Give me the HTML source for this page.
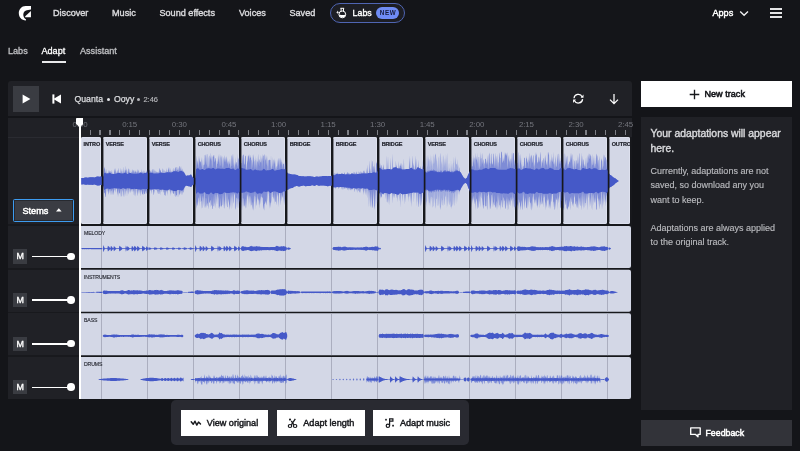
<!DOCTYPE html>
<html><head><meta charset="utf-8"><title>Adapt</title>
<style>
*{box-sizing:border-box;margin:0;padding:0}
html,body{width:800px;height:451px;overflow:hidden;background:#141519;font-family:"Liberation Sans",sans-serif;color:#fff}
.abs{position:absolute}
.nav a{position:absolute;top:7px;font-size:9.1px;color:#dcdcdf;line-height:12px;white-space:nowrap;-webkit-text-stroke:0.38px currentColor}
.sub a{position:absolute;top:44.8px;font-size:9.1px;color:#c0c1c4;line-height:12px;white-space:nowrap;-webkit-text-stroke:0.3px currentColor}
.panel{background:#202126}
.seg{position:absolute;top:0;height:86.8px;overflow:hidden;background:#d3d7e6;border-radius:2px;box-shadow:inset 0 0 0 0.7px #e1e4f1}
.seg span{position:absolute;left:2.7px;top:3.6px;font-size:5.5px;font-weight:bold;color:#23252e;-webkit-text-stroke:0.22px #23252e;letter-spacing:-0.1px;line-height:7px;white-space:nowrap}
.stem{position:absolute;left:80.3px;width:550.4px;height:42px;background:#d3d7e6;border-radius:0 2px 2px 0;overflow:hidden}
.stem span{position:absolute;left:3.7px;top:4px;font-size:5.15px;color:#23252e;-webkit-text-stroke:0.12px #23252e;line-height:7px;letter-spacing:-0.1px}
.stem i{position:absolute;top:0;width:1.1px;height:42px;background:#abaebf}
.stem svg{position:absolute;left:-0.8px;top:0}
.lrow{position:absolute;left:8px;width:72px;height:42px;background:#202126}
.m{position:absolute;left:5px;top:23.3px;width:14.3px;height:14.3px;background:#3a3c42;font-size:8.9px;color:#fff;text-align:center;line-height:14.6px;-webkit-text-stroke:0.35px #fff}
.sl{position:absolute;left:24px;top:29.7px;width:38px;height:1.6px;background:#fff}
.kn{position:absolute;left:59px;top:26.6px;width:7.6px;height:7.6px;border-radius:50%;background:#fff}
.rl{position:absolute;top:2.3px;font-size:7.9px;letter-spacing:-0.1px;color:#73757c;line-height:9px;transform:translateX(-50%)}
.tk{position:absolute;top:12.2px;width:1.2px;height:4.9px;background:#7d7f86}
.btn{position:absolute;top:10.1px;height:26px;background:#fff;color:#17181c;font-size:9.1px;line-height:26px;white-space:nowrap;-webkit-text-stroke:0.45px #17181c}
#w{position:absolute;left:0;top:0;width:800px;height:451px;will-change:transform}
</style></head><body><div id="w">
<!-- top nav -->
<div class="nav">
<svg class="abs" style="left:0;top:0" width="40" height="24" viewBox="0 0 40 24"><path d="M31 5.9 L25.6 5.9 C21.6 5.9 18.8 9.2 18.8 13 C18.8 17.1 21.6 20.4 25.9 20.4 L26.1 19.5 C24.1 18.6 23.2 16.2 23.3 14.3 C23.5 12 25 10.6 26.8 10.2 L31 9.5 Z" fill="#fff"/><path d="M30.95 10.9 L30.95 17.3 L25.2 17.3 L25.2 16.3 Z" fill="#fff"/></svg>
<a style="left:53px">Discover</a><a style="left:112px">Music</a><a style="left:159.5px">Sound effects</a><a style="left:239px">Voices</a><a style="left:289.5px">Saved</a>
<div class="abs" style="left:330.3px;top:2.8px;width:74.7px;height:20.2px;border:1.4px solid #4f65b3;border-radius:10.2px;background:#1d1e24"></div>
<a style="left:352.6px;color:#fff;font-size:8.8px">Labs</a>
<div class="abs" style="left:376.2px;top:6.9px;width:23.2px;height:12.1px;border-radius:6.1px;background:#6f8cf5;color:#151a38;font-size:6.3px;font-weight:bold;line-height:12.3px;text-align:center;letter-spacing:0.7px;padding-left:0.7px">NEW</div>
<svg class="abs" style="left:336px;top:7px" width="12" height="12" viewBox="0 0 12 12"><path d="M4.4 1.3 H8.2 M5.1 1.3 V4.2 M7.5 1.3 V4.2" fill="none" stroke="#fff" stroke-width="1"/><circle cx="6.3" cy="7.4" r="3.4" fill="none" stroke="#fff" stroke-width="1"/><path d="M2.9 7.9 C4.2 6.9 5.6 9.2 9.7 7.4 A3.5 3.5 0 0 1 2.9 7.9 Z" fill="#fff"/><path d="M1.7 3.6 L2.15 4.85 L3.4 5.3 L2.15 5.75 L1.7 7 L1.25 5.75 L0 5.3 L1.25 4.85 Z" fill="#fff"/></svg>
<a style="left:712.5px;color:#fff;-webkit-text-stroke:0.45px #fff">Apps</a>
<svg class="abs" style="left:739px;top:9.6px" width="10" height="8" viewBox="0 0 10 8"><path d="M1.2 1.4 L5.1 5.3 L9 1.4" fill="none" stroke="#f0f0f2" stroke-width="1.35"/></svg>
<div class="abs" style="left:770px;top:7.5px;width:12px;height:2px;background:#e4e4e6"></div>
<div class="abs" style="left:770px;top:12px;width:12px;height:2px;background:#e4e4e6"></div>
<div class="abs" style="left:770px;top:16.2px;width:12px;height:2px;background:#e4e4e6"></div>
</div>
<div class="sub">
<a style="left:8px">Labs</a><a style="left:41.5px;color:#fff">Adapt</a><a style="left:80px">Assistant</a>
<div class="abs" style="left:41.5px;top:61px;width:24.5px;height:1.6px;background:#e8e8ea"></div>
</div>

<!-- main panel -->
<div class="abs panel" style="left:8px;top:81.3px;width:624px;height:34.8px;border-radius:3px 3px 0 0"></div>
<div class="abs" style="left:13px;top:86px;width:26px;height:26px;background:#3a3c42"></div>
<svg class="abs" style="left:22.4px;top:94px" width="9" height="10" viewBox="0 0 9 10"><path d="M0.6 0.4 L8.4 5 L0.6 9.6 Z" fill="#fff"/></svg>
<svg class="abs" style="left:52px;top:94px" width="10" height="10" viewBox="0 0 10 10"><rect x="0.4" y="0.4" width="2" height="9.2" fill="#fff"/><path d="M9 0.4 L1.4 5 L9 9.6 Z" fill="#fff"/></svg>
<div class="abs" style="left:74.5px;top:93.2px;font-size:8.7px;line-height:12px;color:#dcdde0;white-space:nowrap;-webkit-text-stroke:0.25px #dcdde0">Quanta</div>
<div class="abs" style="left:106.7px;top:97.6px;width:3.6px;height:3.6px;border-radius:50%;background:#e2e3e6"></div>
<div class="abs" style="left:114px;top:93.2px;font-size:8.7px;line-height:12px;color:#dcdde0;white-space:nowrap;-webkit-text-stroke:0.25px #dcdde0">Ooyy</div>
<div class="abs" style="left:137.2px;top:98px;width:3px;height:3px;border-radius:50%;background:#b4b5b9"></div>
<div class="abs" style="left:143.4px;top:94px;font-size:7.5px;line-height:12px;color:#b6b7bb;white-space:nowrap;-webkit-text-stroke:0.15px #b6b7bb">2:46</div>
<svg class="abs" style="left:572.3px;top:92.2px" width="13" height="13" viewBox="0 0 13 13"><path d="M2 6.3 A4.3 4.3 0 0 1 10.2 4.9 M10.6 7.1 A4.3 4.3 0 0 1 2.4 8.5" fill="none" stroke="#fff" stroke-width="1.25"/><path d="M11.5 2.5 V5.8 H8.6 Z M1.1 10.9 V7.6 H4 Z" fill="#fff"/></svg>
<svg class="abs" style="left:608px;top:92px" width="12" height="13" viewBox="0 0 12 13"><path d="M6 2 V11.4 M2 7.6 L6 11.6 L10 7.6" fill="none" stroke="#fff" stroke-width="1.25"/></svg>

<!-- ruler -->
<div class="abs panel" style="left:8px;top:117.7px;width:624px;height:281.4px;border-radius:0 0 0 3px"><div class="abs" style="left:0;top:19px;width:72px;height:1px;background:#2a2b31"></div><span class="rl" style="left:72.1px">0:00</span><span class="rl" style="left:121.7px">0:15</span><span class="rl" style="left:171.3px">0:30</span><span class="rl" style="left:220.9px">0:45</span><span class="rl" style="left:270.5px">1:00</span><span class="rl" style="left:320.1px">1:15</span><span class="rl" style="left:369.6px">1:30</span><span class="rl" style="left:419.2px">1:45</span><span class="rl" style="left:468.8px">2:00</span><span class="rl" style="left:518.4px">2:15</span><span class="rl" style="left:568.0px">2:30</span><span class="rl" style="left:617.6px">2:45</span><i class="tk" style="left:81.5px"></i><i class="tk" style="left:91.4px"></i><i class="tk" style="left:101.4px"></i><i class="tk" style="left:111.3px"></i><i class="tk" style="left:121.2px"></i><i class="tk" style="left:131.1px"></i><i class="tk" style="left:141.0px"></i><i class="tk" style="left:150.9px"></i><i class="tk" style="left:160.9px"></i><i class="tk" style="left:170.8px"></i><i class="tk" style="left:180.7px"></i><i class="tk" style="left:190.6px"></i><i class="tk" style="left:200.5px"></i><i class="tk" style="left:210.5px"></i><i class="tk" style="left:220.4px"></i><i class="tk" style="left:230.3px"></i><i class="tk" style="left:240.2px"></i><i class="tk" style="left:250.1px"></i><i class="tk" style="left:260.0px"></i><i class="tk" style="left:270.0px"></i><i class="tk" style="left:279.9px"></i><i class="tk" style="left:289.8px"></i><i class="tk" style="left:299.7px"></i><i class="tk" style="left:309.6px"></i><i class="tk" style="left:319.6px"></i><i class="tk" style="left:329.5px"></i><i class="tk" style="left:339.4px"></i><i class="tk" style="left:349.3px"></i><i class="tk" style="left:359.2px"></i><i class="tk" style="left:369.1px"></i><i class="tk" style="left:379.1px"></i><i class="tk" style="left:389.0px"></i><i class="tk" style="left:398.9px"></i><i class="tk" style="left:408.8px"></i><i class="tk" style="left:418.7px"></i><i class="tk" style="left:428.6px"></i><i class="tk" style="left:438.6px"></i><i class="tk" style="left:448.5px"></i><i class="tk" style="left:458.4px"></i><i class="tk" style="left:468.3px"></i><i class="tk" style="left:478.2px"></i><i class="tk" style="left:488.2px"></i><i class="tk" style="left:498.1px"></i><i class="tk" style="left:508.0px"></i><i class="tk" style="left:517.9px"></i><i class="tk" style="left:527.8px"></i><i class="tk" style="left:537.7px"></i><i class="tk" style="left:547.7px"></i><i class="tk" style="left:557.6px"></i><i class="tk" style="left:567.5px"></i><i class="tk" style="left:577.4px"></i><i class="tk" style="left:587.3px"></i><i class="tk" style="left:597.3px"></i><i class="tk" style="left:607.2px"></i><i class="tk" style="left:617.1px"></i></div>
<!-- left column top -->

<div class="abs" style="left:13px;top:198.8px;width:61.2px;height:23.4px;border:1.3px solid #3d9cf0;border-radius:1.5px;background:#3a3c43;box-shadow:inset 0 0 0 0.8px #22232a"></div>
<div class="abs" style="left:22.5px;top:204.5px;font-size:9.1px;-webkit-text-stroke:0.5px #fff;line-height:12px;color:#fff">Stems</div>
<svg class="abs" style="left:56.1px;top:208.4px" width="5.6" height="4" viewBox="0 0 5.6 4"><path d="M0 3.6 L2.8 0.3 L5.6 3.6 Z" fill="#fff"/></svg>

<!-- segments -->
<div class="abs" style="left:0;top:137px;width:800px;height:262px;background:none"><div class="abs" style="left:79.5px;top:0;width:552.5px;height:262.1px;background:#17181c"></div><div class="seg" style="left:80.8px;width:20.5px"><span>INTRO</span></div><div class="seg" style="left:102.94999999999999px;width:44.3px"><span>VERSE</span></div><div class="seg" style="left:148.95px;width:44.3px"><span>VERSE</span></div><div class="seg" style="left:194.95px;width:44.3px"><span>CHORUS</span></div><div class="seg" style="left:240.95px;width:44.3px"><span>CHORUS</span></div><div class="seg" style="left:286.95000000000005px;width:44.3px"><span>BRIDGE</span></div><div class="seg" style="left:332.95000000000005px;width:44.3px"><span>BRIDGE</span></div><div class="seg" style="left:378.95000000000005px;width:44.3px"><span>BRIDGE</span></div><div class="seg" style="left:424.95000000000005px;width:44.3px"><span>VERSE</span></div><div class="seg" style="left:470.95000000000005px;width:44.3px"><span>CHORUS</span></div><div class="seg" style="left:516.95px;width:44.3px"><span>CHORUS</span></div><div class="seg" style="left:562.95px;width:44.3px"><span>CHORUS</span></div><div class="seg" style="left:608.95px;width:21.4px"><span>OUTRO</span></div>
<svg class="abs" style="left:79.5px;top:0" width="552" height="87" viewBox="0 0 552 87"><polygon points="345.1,20.1 345.5,35.1 345.8,27.5 346.2,17.9 346.5,35.8 346.9,30.4 347.3,28.7 347.6,22.5 348.0,17.4 348.3,24.6 348.7,19.5 349.1,30.4 349.4,24.2 349.8,21.4 350.1,25.3 350.5,17.1 350.9,34.0 351.2,17.9 351.6,29.3 351.9,23.1 352.3,27.8 352.7,34.1 353.0,16.8 353.4,20.3 353.7,26.8 354.1,26.4 354.5,21.9 354.8,19.9 355.2,15.9 355.5,18.3 355.9,16.7 356.3,24.6 356.6,20.3 357.0,28.4 357.3,35.3 357.7,23.5 358.1,35.3 358.4,21.1 358.8,19.6 359.1,35.2 359.5,17.7 359.9,35.1 360.2,21.4 360.6,17.0 360.9,15.9 361.3,27.4 361.7,23.8 362.0,35.5 362.4,18.5 362.7,35.3 363.1,20.5 363.5,17.7 363.8,31.7 364.2,21.1 364.5,25.2 364.9,30.0 365.3,20.4 365.6,31.2 366.0,16.1 366.3,34.8 366.7,23.1 367.1,15.7 367.4,22.6 367.8,34.5 368.1,25.4 368.5,34.4 368.9,34.4 369.2,30.4 369.6,34.7 369.9,25.3 370.3,35.0 370.7,35.2 371.0,22.5 371.4,35.2 371.7,26.4 372.1,35.3 372.5,31.8 372.8,27.4 373.2,25.2 373.5,19.6 373.9,35.1 374.3,29.5 374.6,34.5 375.0,19.5 375.3,27.1 375.7,18.9 376.1,27.4 376.4,27.3 376.8,26.5 377.1,29.0 377.5,21.7 377.9,30.4 378.2,27.1 378.6,34.3 378.9,34.4 379.3,30.3 379.7,30.9 380.0,34.8 380.4,35.3 380.4,52.7 380.0,53.4 379.7,53.5 379.3,58.3 378.9,53.3 378.6,57.9 378.2,52.8 377.9,52.7 377.5,65.4 377.1,52.7 376.8,68.3 376.4,57.0 376.1,53.1 375.7,53.2 375.3,60.6 375.0,67.1 374.6,58.4 374.3,68.9 373.9,67.4 373.5,63.1 373.2,54.0 372.8,62.0 372.5,69.3 372.1,66.9 371.7,72.3 371.4,69.4 371.0,69.4 370.7,70.6 370.3,63.2 369.9,68.1 369.6,67.8 369.2,64.2 368.9,52.7 368.5,62.9 368.1,65.9 367.8,70.1 367.4,59.3 367.1,70.4 366.7,53.0 366.3,71.4 366.0,60.3 365.6,59.5 365.3,58.1 364.9,68.3 364.5,67.0 364.2,62.1 363.8,70.1 363.5,55.3 363.1,62.3 362.7,63.5 362.4,68.1 362.0,68.6 361.7,65.0 361.3,60.5 360.9,72.5 360.6,72.4 360.2,70.3 359.9,70.4 359.5,52.7 359.1,69.0 358.8,58.9 358.4,69.6 358.1,67.2 357.7,69.4 357.3,52.6 357.0,62.0 356.6,62.2 356.3,60.4 355.9,71.8 355.5,69.8 355.2,66.8 354.8,60.5 354.5,66.5 354.1,53.2 353.7,63.3 353.4,68.9 353.0,69.5 352.7,70.9 352.3,60.8 351.9,60.1 351.6,59.5 351.2,65.0 350.9,59.3 350.5,70.1 350.1,59.5 349.8,66.2 349.4,65.2 349.1,69.3 348.7,57.6 348.3,68.5 348.0,56.8 347.6,52.9 347.3,52.6 346.9,70.5 346.5,65.0 346.2,64.1 345.8,68.3 345.5,52.5 345.1,70.2" fill="#5a6dd2" opacity="0.42"/>
<polygon points="1.3,40.9 1.7,40.9 2.0,40.9 2.4,40.9 2.7,40.9 3.1,40.9 3.5,40.9 3.8,40.9 4.2,40.8 4.5,40.7 4.9,40.6 5.3,40.5 5.6,40.4 6.0,40.4 6.3,40.5 6.7,40.5 7.1,40.6 7.4,40.7 7.8,40.7 8.1,40.7 8.5,40.6 8.9,40.5 9.2,40.4 9.6,40.3 9.9,40.3 10.3,40.2 10.7,40.2 11.0,40.2 11.4,40.2 11.7,40.3 12.1,40.3 12.5,40.2 12.8,40.3 13.2,40.3 13.5,40.3 13.9,40.4 14.3,40.4 14.6,40.4 15.0,40.3 15.3,40.2 15.7,40.1 16.1,39.9 16.4,39.7 16.8,39.6 17.1,39.6 17.5,39.6 17.9,39.6 18.2,39.6 18.6,39.6 18.9,39.7 19.3,39.7 19.7,39.7 20.0,39.6 20.4,39.6 20.7,39.6 21.1,39.6 21.5,39.7 21.8,39.7 22.2,39.7 22.5,39.7 22.9,39.7 23.3,39.7 23.6,38.8 24.0,31.4 24.3,31.8 24.7,29.4 25.1,32.6 25.4,36.1 25.8,35.0 26.1,31.8 26.5,36.4 26.9,36.5 27.2,35.4 27.6,36.5 27.9,36.5 28.3,36.4 28.7,32.5 29.0,36.1 29.4,32.9 29.7,35.0 30.1,34.4 30.5,34.2 30.8,36.4 31.2,34.7 31.5,36.9 31.9,32.8 32.3,37.1 32.6,36.2 33.0,37.1 33.3,37.1 33.7,37.1 34.1,34.9 34.4,31.3 34.8,33.8 35.1,36.9 35.5,31.1 35.9,33.7 36.2,36.5 36.6,36.5 36.9,34.5 37.3,36.3 37.7,33.3 38.0,33.7 38.4,30.5 38.7,35.9 39.1,34.8 39.5,36.0 39.8,36.1 40.2,36.2 40.5,35.2 40.9,31.1 41.3,33.6 41.6,36.4 42.0,33.6 42.3,36.5 42.7,36.5 43.1,29.6 43.4,33.6 43.8,36.3 44.1,36.1 44.5,35.8 44.9,32.6 45.2,33.2 45.6,34.1 45.9,28.4 46.3,36.2 46.7,31.5 47.0,33.8 47.4,37.0 47.7,37.0 48.1,31.2 48.5,32.1 48.8,34.6 49.2,35.9 49.5,35.7 49.9,31.7 50.3,35.9 50.6,36.1 51.0,36.3 51.3,34.6 51.7,36.6 52.1,31.6 52.4,36.6 52.8,32.8 53.1,33.9 53.5,32.8 53.9,36.0 54.2,34.2 54.6,36.8 54.9,33.0 55.3,35.0 55.7,34.4 56.0,33.0 56.4,36.8 56.7,34.8 57.1,36.0 57.5,31.8 57.8,34.8 58.2,36.5 58.5,32.6 58.9,34.1 59.3,36.2 59.6,36.0 60.0,34.5 60.3,35.7 60.7,35.6 61.1,35.7 61.4,31.9 61.8,36.1 62.1,34.5 62.5,35.1 62.9,36.6 63.2,36.5 63.6,33.0 63.9,36.3 64.3,36.1 64.7,33.5 65.0,35.9 65.4,35.9 65.7,35.8 66.1,34.9 66.5,32.9 66.8,35.7 67.2,33.4 67.5,32.4 67.9,35.7 68.3,32.1 68.6,35.9 69.0,32.6 69.3,34.1 69.7,32.3 70.1,33.5 70.4,34.3 70.8,35.1 71.1,35.7 71.5,35.7 71.9,33.2 72.2,32.1 72.6,36.0 72.9,31.7 73.3,32.4 73.7,36.5 74.0,35.0 74.4,32.2 74.7,36.6 75.1,36.6 75.5,35.1 75.8,33.4 76.2,34.7 76.5,35.9 76.9,34.6 77.3,36.5 77.6,35.0 78.0,34.9 78.3,36.4 78.7,34.2 79.1,36.2 79.4,31.3 79.8,31.4 80.1,33.9 80.5,32.6 80.9,34.0 81.2,35.7 81.6,35.8 81.9,34.9 82.3,35.9 82.7,31.4 83.0,31.8 83.4,33.9 83.7,35.9 84.1,35.9 84.5,32.5 84.8,35.9 85.2,35.9 85.5,33.7 85.9,35.6 86.3,30.9 86.6,35.4 87.0,35.3 87.3,35.3 87.7,35.3 88.1,31.3 88.4,33.5 88.8,30.5 89.1,30.4 89.5,34.4 89.9,35.3 90.2,35.4 90.6,30.7 90.9,35.5 91.3,35.5 91.7,33.5 92.0,35.3 92.4,35.0 92.7,34.8 93.1,30.6 93.5,33.6 93.8,34.3 94.2,34.3 94.5,34.3 94.9,31.7 95.3,30.5 95.6,29.9 96.0,33.6 96.3,34.3 96.7,30.0 97.1,29.9 97.4,32.8 97.8,33.4 98.1,30.0 98.5,34.9 98.9,31.6 99.2,29.2 99.6,29.1 99.9,34.1 100.3,29.4 100.7,33.9 101.0,28.8 101.4,33.8 101.7,34.0 102.1,31.5 102.5,33.2 102.8,34.8 103.2,33.7 103.5,34.2 103.9,35.5 104.3,35.3 104.6,36.5 105.0,37.1 105.3,37.8 105.7,38.4 106.1,38.9 106.4,38.8 106.8,38.7 107.1,38.5 107.5,38.5 107.9,38.4 108.2,38.4 108.6,38.4 108.9,38.5 109.3,38.4 109.7,38.3 110.0,38.1 110.4,37.8 110.7,37.6 111.1,37.6 111.5,38.2 111.8,38.8 112.2,39.6 112.5,40.2 112.9,40.5 113.3,40.8 113.6,41.0 114.0,41.1 114.3,41.2 114.7,41.2 115.1,41.1 115.4,41.0 115.8,36.8 116.1,18.1 116.5,31.9 116.9,18.8 117.2,28.4 117.6,23.0 117.9,25.0 118.3,31.4 118.7,23.5 119.0,18.1 119.4,26.3 119.7,20.5 120.1,25.4 120.5,24.5 120.8,24.1 121.2,30.3 121.5,24.9 121.9,19.9 122.3,31.9 122.6,32.0 123.0,20.2 123.3,32.5 123.7,27.8 124.1,27.7 124.4,27.5 124.8,18.3 125.1,17.5 125.5,18.7 125.9,25.3 126.2,28.4 126.6,21.7 126.9,17.2 127.3,17.2 127.7,31.4 128.0,28.7 128.4,31.3 128.7,21.6 129.1,18.6 129.5,31.3 129.8,17.9 130.2,20.8 130.5,22.9 130.9,15.3 131.3,24.2 131.6,17.8 132.0,31.5 132.3,29.1 132.7,19.3 133.1,19.9 133.4,19.1 133.8,18.1 134.1,18.0 134.5,23.6 134.9,25.4 135.2,23.0 135.6,21.1 135.9,20.9 136.3,29.7 136.7,31.9 137.0,23.0 137.4,26.7 137.7,27.2 138.1,17.1 138.5,25.4 138.8,18.3 139.2,28.0 139.5,16.4 139.9,29.4 140.3,28.1 140.6,17.4 141.0,21.0 141.3,18.2 141.7,23.1 142.1,31.7 142.4,28.5 142.8,17.9 143.1,31.8 143.5,23.1 143.9,19.8 144.2,25.2 144.6,21.1 144.9,18.0 145.3,25.2 145.7,19.7 146.0,27.7 146.4,18.9 146.7,20.6 147.1,25.1 147.5,27.5 147.8,20.9 148.2,30.9 148.5,25.9 148.9,23.6 149.3,26.6 149.6,27.5 150.0,20.9 150.3,29.2 150.7,32.0 151.1,18.7 151.4,18.2 151.8,29.1 152.1,28.8 152.5,16.6 152.9,20.9 153.2,31.6 153.6,16.5 153.9,27.2 154.3,32.5 154.7,24.7 155.0,33.1 155.4,19.8 155.7,28.0 156.1,25.4 156.5,24.8 156.8,26.9 157.2,29.4 157.5,16.8 157.9,31.6 158.3,22.8 158.6,20.5 159.0,22.4 159.3,28.6 159.7,17.5 160.1,25.3 160.4,22.2 160.8,16.2 161.1,25.9 161.5,25.9 161.9,31.1 162.2,24.7 162.6,19.2 162.9,18.2 163.3,18.0 163.7,17.0 164.0,26.5 164.4,28.1 164.7,25.3 165.1,18.3 165.5,19.4 165.8,18.4 166.2,32.8 166.5,32.8 166.9,27.3 167.3,24.4 167.6,23.3 168.0,18.3 168.3,19.7 168.7,17.6 169.1,22.3 169.4,16.4 169.8,25.9 170.1,19.7 170.5,21.3 170.9,17.6 171.2,22.4 171.6,23.8 171.9,32.9 172.3,27.9 172.7,24.0 173.0,16.8 173.4,25.3 173.7,17.1 174.1,22.4 174.5,32.7 174.8,24.4 175.2,22.4 175.5,32.6 175.9,18.4 176.3,32.9 176.6,20.2 177.0,33.2 177.3,23.7 177.7,25.6 178.1,16.6 178.4,22.3 178.8,25.9 179.1,29.3 179.5,21.8 179.9,23.4 180.2,25.7 180.6,24.6 180.9,17.8 181.3,26.1 181.7,19.0 182.0,33.4 182.4,23.6 182.7,16.5 183.1,24.5 183.5,18.2 183.8,18.9 184.2,17.0 184.5,18.9 184.9,32.5 185.3,17.6 185.6,23.4 186.0,22.1 186.3,18.2 186.7,25.9 187.1,29.5 187.4,18.6 187.8,33.3 188.1,33.3 188.5,23.4 188.9,22.9 189.2,23.2 189.6,22.2 189.9,23.2 190.3,22.7 190.7,33.0 191.0,17.6 191.4,32.6 191.7,32.3 192.1,28.5 192.5,19.8 192.8,31.9 193.2,23.5 193.5,22.3 193.9,33.0 194.3,20.8 194.6,27.0 195.0,22.4 195.3,27.6 195.7,33.6 196.1,29.0 196.4,29.7 196.8,33.0 197.1,31.0 197.5,22.1 197.9,29.6 198.2,26.4 198.6,20.5 198.9,23.4 199.3,32.8 199.7,20.6 200.0,23.7 200.4,20.3 200.7,27.8 201.1,21.9 201.5,28.1 201.8,24.2 202.2,25.9 202.5,32.2 202.9,27.2 203.3,26.7 203.6,27.5 204.0,25.8 204.3,32.3 204.7,32.3 205.1,21.3 205.4,29.1 205.8,24.1 206.1,30.7 206.5,30.1 206.9,34.9 207.2,35.5 207.6,36.0 207.9,36.3 208.3,36.5 208.7,36.7 209.0,36.7 209.4,36.8 209.7,36.8 210.1,36.9 210.5,36.9 210.8,37.1 211.2,37.2 211.5,37.3 211.9,37.4 212.3,37.5 212.6,37.6 213.0,37.6 213.3,37.5 213.7,37.5 214.1,37.4 214.4,37.4 214.8,37.5 215.1,37.6 215.5,37.7 215.9,37.8 216.2,37.8 216.6,37.9 216.9,37.9 217.3,38.1 217.7,38.3 218.0,38.5 218.4,38.8 218.7,38.9 219.1,39.0 219.5,39.1 219.8,39.1 220.2,39.1 220.5,39.1 220.9,39.2 221.3,39.2 221.6,39.2 222.0,39.2 222.3,39.2 222.7,39.3 223.1,39.3 223.4,39.3 223.8,39.3 224.1,39.4 224.5,39.4 224.9,39.4 225.2,39.4 225.6,39.5 225.9,39.5 226.3,39.4 226.7,39.4 227.0,39.3 227.4,39.3 227.7,39.3 228.1,39.3 228.5,39.3 228.8,39.3 229.2,39.3 229.5,39.2 229.9,39.2 230.3,39.3 230.6,39.3 231.0,39.4 231.3,39.5 231.7,39.6 232.1,39.6 232.4,39.6 232.8,39.7 233.1,39.7 233.5,39.8 233.9,39.9 234.2,39.9 234.6,39.9 234.9,39.9 235.3,39.8 235.7,39.8 236.0,39.7 236.4,39.6 236.7,39.6 237.1,39.6 237.5,39.6 237.8,39.7 238.2,39.7 238.5,39.7 238.9,39.7 239.3,39.7 239.6,39.6 240.0,39.6 240.3,39.5 240.7,39.4 241.1,39.4 241.4,39.4 241.8,39.3 242.1,39.2 242.5,39.1 242.9,39.0 243.2,38.9 243.6,38.9 243.9,39.0 244.3,39.0 244.7,39.0 245.0,39.1 245.4,39.1 245.7,39.1 246.1,39.1 246.5,39.1 246.8,39.1 247.2,39.2 247.5,39.2 247.9,39.1 248.3,39.1 248.6,39.1 249.0,39.0 249.3,39.0 249.7,39.0 250.1,39.0 250.4,38.9 250.8,38.9 251.1,38.9 251.5,38.8 251.9,38.6 252.2,38.4 252.6,38.2 252.9,38.1 253.3,38.1 253.7,36.6 254.0,38.3 254.4,38.3 254.7,36.1 255.1,36.1 255.5,37.7 255.8,37.4 256.2,36.3 256.5,36.4 256.9,37.1 257.3,37.1 257.6,35.7 258.0,35.8 258.3,37.2 258.7,37.2 259.1,36.5 259.4,37.1 259.8,37.1 260.1,37.0 260.5,37.0 260.9,37.0 261.2,35.7 261.6,36.9 261.9,36.1 262.3,37.0 262.7,35.8 263.0,37.0 263.4,37.0 263.7,37.1 264.1,37.2 264.5,35.4 264.8,35.6 265.2,37.4 265.5,37.4 265.9,37.4 266.3,35.9 266.6,37.3 267.0,37.3 267.3,35.8 267.7,34.9 268.1,36.1 268.4,37.3 268.8,35.7 269.1,36.0 269.5,37.1 269.9,37.5 270.2,37.4 270.6,37.2 270.9,37.0 271.3,36.7 271.7,36.6 272.0,36.5 272.4,36.6 272.7,36.8 273.1,37.0 273.5,34.5 273.8,37.3 274.2,35.0 274.5,35.6 274.9,37.3 275.3,35.5 275.6,37.2 276.0,37.2 276.3,36.0 276.7,34.2 277.1,37.1 277.4,37.0 277.8,37.0 278.1,33.9 278.5,36.9 278.9,36.9 279.2,35.7 279.6,34.9 279.9,36.9 280.3,33.8 280.7,36.8 281.0,36.8 281.4,34.2 281.7,36.6 282.1,34.7 282.5,36.4 282.8,36.4 283.2,36.3 283.5,33.7 283.9,33.8 284.3,36.6 284.6,33.1 285.0,35.4 285.3,36.6 285.7,36.6 286.1,36.6 286.4,36.6 286.8,30.9 287.1,36.5 287.5,27.4 287.9,36.3 288.2,36.2 288.6,36.1 288.9,36.0 289.3,22.9 289.7,32.7 290.0,35.9 290.4,31.1 290.7,35.9 291.1,35.9 291.5,35.9 291.8,21.9 292.2,35.8 292.5,23.8 292.9,24.8 293.3,35.4 293.6,29.0 294.0,29.7 294.3,35.3 294.7,24.7 295.1,35.5 295.4,35.7 295.8,35.8 296.1,25.2 296.5,26.7 296.9,24.0 297.2,34.9 297.6,34.3 297.9,22.5 298.3,23.2 298.7,32.1 299.0,31.6 299.4,31.1 299.7,25.9 300.1,31.3 300.5,25.9 300.8,31.6 301.2,27.9 301.5,28.2 301.9,32.5 302.3,32.7 302.6,30.1 303.0,32.8 303.3,30.0 303.7,27.1 304.1,32.6 304.4,32.5 304.8,32.5 305.1,32.5 305.5,32.4 305.9,32.4 306.2,32.3 306.6,32.2 306.9,18.5 307.3,32.1 307.7,32.1 308.0,18.6 308.4,32.1 308.7,32.1 309.1,32.0 309.5,32.0 309.8,32.1 310.2,32.2 310.5,20.4 310.9,32.5 311.3,32.6 311.6,32.6 312.0,32.3 312.3,32.0 312.7,16.4 313.1,31.0 313.4,30.7 313.8,30.6 314.1,30.6 314.5,30.5 314.9,30.4 315.2,30.3 315.6,30.3 315.9,23.6 316.3,30.4 316.7,27.6 317.0,30.9 317.4,31.3 317.7,31.5 318.1,31.6 318.5,31.6 318.8,24.0 319.2,31.6 319.5,31.6 319.9,28.6 320.3,29.0 320.6,28.1 321.0,25.8 321.3,27.2 321.7,32.3 322.1,26.9 322.4,32.6 322.8,32.6 323.1,32.6 323.5,32.6 323.9,20.9 324.2,32.6 324.6,32.6 324.9,32.5 325.3,32.4 325.7,32.3 326.0,32.1 326.4,32.0 326.7,31.9 327.1,31.9 327.5,32.0 327.8,32.0 328.2,32.1 328.5,32.1 328.9,32.1 329.3,18.3 329.6,31.9 330.0,20.0 330.3,31.3 330.7,30.9 331.1,30.7 331.4,30.7 331.8,30.9 332.1,25.3 332.5,18.2 332.9,32.0 333.2,25.4 333.6,32.4 333.9,27.0 334.3,32.5 334.7,32.6 335.0,32.7 335.4,17.9 335.7,25.7 336.1,32.5 336.5,32.1 336.8,20.9 337.2,31.0 337.5,30.5 337.9,30.3 338.3,30.4 338.6,22.6 339.0,30.9 339.3,31.1 339.7,31.4 340.1,31.4 340.4,28.7 340.8,31.7 341.1,31.9 341.5,32.1 341.9,32.3 342.2,28.2 342.6,32.4 342.9,22.4 343.3,32.0 343.7,32.0 344.0,26.5 344.4,24.4 344.7,33.5 345.1,34.2 345.5,35.1 345.8,35.1 346.2,35.5 346.5,35.8 346.9,34.3 347.3,34.6 347.6,34.1 348.0,33.9 348.3,33.2 348.7,34.4 349.1,34.4 349.4,33.3 349.8,33.9 350.1,33.0 350.5,33.3 350.9,34.0 351.2,33.8 351.6,32.0 351.9,33.8 352.3,33.1 352.7,34.1 353.0,32.6 353.4,32.3 353.7,33.3 354.1,33.3 354.5,33.0 354.8,33.3 355.2,34.4 355.5,32.9 355.9,33.9 356.3,33.6 356.6,34.2 357.0,34.4 357.3,35.3 357.7,34.5 358.1,35.3 358.4,33.6 358.8,34.9 359.1,35.2 359.5,34.4 359.9,35.1 360.2,34.4 360.6,33.2 360.9,33.5 361.3,33.7 361.7,33.5 362.0,35.5 362.4,35.1 362.7,35.3 363.1,34.3 363.5,33.6 363.8,33.9 364.2,33.4 364.5,33.1 364.9,33.4 365.3,33.0 365.6,33.1 366.0,34.3 366.3,34.8 366.7,34.2 367.1,33.3 367.4,33.7 367.8,34.5 368.1,33.7 368.5,34.4 368.9,34.4 369.2,34.0 369.6,34.7 369.9,33.6 370.3,35.0 370.7,35.2 371.0,33.3 371.4,35.2 371.7,33.7 372.1,35.3 372.5,33.8 372.8,34.4 373.2,34.9 373.5,33.9 373.9,35.1 374.3,33.9 374.6,34.5 375.0,34.0 375.3,33.7 375.7,32.6 376.1,32.5 376.4,33.3 376.8,32.5 377.1,33.7 377.5,33.1 377.9,32.9 378.2,34.1 378.6,34.3 378.9,34.4 379.3,33.9 379.7,33.4 380.0,34.8 380.4,35.3 380.7,34.7 381.1,36.3 381.5,36.8 381.8,37.4 382.2,38.1 382.5,38.7 382.9,39.3 383.3,40.0 383.6,40.5 384.0,40.8 384.3,41.1 384.7,41.4 385.1,41.8 385.4,41.9 385.8,41.6 386.1,41.2 386.5,40.9 386.9,40.7 387.2,40.0 387.6,39.1 387.9,38.2 388.3,37.3 388.7,36.5 389.0,36.0 389.4,35.4 389.7,34.7 390.1,33.1 390.5,33.5 390.8,30.8 391.2,32.6 391.5,19.0 391.9,30.2 392.3,29.0 392.6,29.4 393.0,20.0 393.3,26.2 393.7,17.5 394.1,30.0 394.4,20.1 394.8,21.9 395.1,33.3 395.5,15.4 395.9,22.4 396.2,19.0 396.6,23.6 396.9,21.8 397.3,27.0 397.7,15.2 398.0,33.2 398.4,26.6 398.7,19.9 399.1,19.9 399.5,29.4 399.8,32.7 400.2,28.2 400.5,14.8 400.9,22.1 401.3,20.8 401.6,30.0 402.0,15.4 402.3,18.3 402.7,27.4 403.1,23.2 403.4,21.9 403.8,28.0 404.1,31.7 404.5,25.0 404.9,27.2 405.2,21.7 405.6,21.9 405.9,21.4 406.3,24.7 406.7,26.4 407.0,28.0 407.4,22.8 407.7,17.9 408.1,32.2 408.5,25.4 408.8,18.9 409.2,15.5 409.5,17.6 409.9,25.7 410.3,26.9 410.6,31.0 411.0,16.6 411.3,16.9 411.7,23.8 412.1,28.3 412.4,26.5 412.8,26.7 413.1,22.9 413.5,16.2 413.9,17.3 414.2,31.0 414.6,26.6 414.9,21.4 415.3,15.2 415.7,31.4 416.0,18.5 416.4,32.1 416.7,18.2 417.1,24.0 417.5,32.5 417.8,16.4 418.2,25.0 418.5,25.7 418.9,32.8 419.3,15.6 419.6,16.5 420.0,20.8 420.3,20.9 420.7,32.8 421.1,14.5 421.4,15.4 421.8,14.2 422.1,18.5 422.5,25.4 422.9,25.4 423.2,20.1 423.6,24.6 423.9,23.7 424.3,14.7 424.7,26.8 425.0,18.7 425.4,15.3 425.7,16.7 426.1,19.0 426.5,15.7 426.8,19.1 427.2,14.7 427.5,25.6 427.9,31.8 428.3,18.2 428.6,23.2 429.0,17.2 429.3,25.2 429.7,23.0 430.1,31.1 430.4,24.9 430.8,21.7 431.1,21.4 431.5,26.9 431.9,15.5 432.2,18.0 432.6,31.3 432.9,15.5 433.3,16.6 433.7,15.8 434.0,22.2 434.4,23.7 434.7,26.6 435.1,29.4 435.5,25.6 435.8,27.0 436.2,16.8 436.5,25.5 436.9,25.7 437.3,26.1 437.6,31.6 438.0,15.5 438.3,15.5 438.7,25.4 439.1,31.4 439.4,31.5 439.8,19.1 440.1,17.1 440.5,22.5 440.9,26.0 441.2,27.9 441.6,33.1 441.9,20.6 442.3,32.5 442.7,32.2 443.0,28.6 443.4,29.2 443.7,31.7 444.1,20.9 444.5,21.0 444.8,20.0 445.2,31.2 445.5,31.1 445.9,24.6 446.3,18.7 446.6,21.5 447.0,21.4 447.3,25.9 447.7,25.1 448.1,22.4 448.4,31.4 448.8,18.9 449.1,25.4 449.5,22.5 449.9,15.2 450.2,22.0 450.6,18.7 450.9,31.7 451.3,19.3 451.7,17.5 452.0,19.8 452.4,26.0 452.7,24.9 453.1,18.5 453.5,18.3 453.8,27.9 454.2,32.9 454.5,24.4 454.9,29.2 455.3,19.5 455.6,17.9 456.0,15.1 456.3,18.3 456.7,16.8 457.1,25.6 457.4,25.1 457.8,26.9 458.1,19.2 458.5,20.8 458.9,25.8 459.2,19.5 459.6,24.1 459.9,25.4 460.3,14.6 460.7,17.7 461.0,28.1 461.4,31.3 461.7,25.4 462.1,22.8 462.5,26.8 462.8,24.3 463.2,21.0 463.5,21.5 463.9,31.2 464.3,19.0 464.6,31.9 465.0,21.8 465.3,17.7 465.7,23.0 466.1,24.7 466.4,28.5 466.8,26.7 467.1,23.9 467.5,32.3 467.9,15.8 468.2,14.9 468.6,18.2 468.9,14.9 469.3,24.7 469.7,31.0 470.0,25.7 470.4,22.1 470.7,28.9 471.1,31.3 471.5,16.5 471.8,23.0 472.2,25.3 472.5,19.4 472.9,25.3 473.3,14.7 473.6,25.5 474.0,27.8 474.3,24.2 474.7,32.9 475.1,19.2 475.4,33.0 475.8,17.7 476.1,24.4 476.5,30.1 476.9,29.2 477.2,23.4 477.6,20.0 477.9,16.2 478.3,33.0 478.7,17.2 479.0,16.5 479.4,23.9 479.7,27.5 480.1,20.2 480.5,27.4 480.8,23.3 481.2,25.3 481.5,31.1 481.9,15.9 482.3,18.3 482.6,19.2 483.0,31.3 483.3,16.1 483.7,31.6 484.1,29.3 484.4,32.4 484.8,15.9 485.1,17.7 485.5,25.5 485.9,28.5 486.2,18.3 486.6,26.5 486.9,20.3 487.3,18.6 487.7,31.3 488.0,27.5 488.4,26.5 488.7,31.1 489.1,25.5 489.5,23.9 489.8,25.5 490.2,21.5 490.5,15.7 490.9,26.6 491.3,15.4 491.6,23.6 492.0,16.7 492.3,18.5 492.7,31.9 493.1,20.9 493.4,32.3 493.8,32.4 494.1,24.2 494.5,23.3 494.9,32.3 495.2,22.0 495.6,32.1 495.9,32.0 496.3,23.3 496.7,23.6 497.0,32.2 497.4,17.4 497.7,26.7 498.1,26.3 498.5,18.9 498.8,33.0 499.2,16.0 499.5,16.9 499.9,33.2 500.3,33.3 500.6,30.5 501.0,27.6 501.3,15.4 501.7,23.4 502.1,31.7 502.4,26.0 502.8,18.2 503.1,28.3 503.5,21.9 503.9,23.6 504.2,31.4 504.6,26.8 504.9,29.6 505.3,29.5 505.7,20.6 506.0,31.8 506.4,31.9 506.7,25.0 507.1,17.7 507.5,24.3 507.8,26.8 508.2,24.8 508.5,15.9 508.9,20.4 509.3,22.3 509.6,17.7 510.0,16.6 510.3,18.4 510.7,18.6 511.1,23.6 511.4,32.2 511.8,20.8 512.1,16.9 512.5,27.5 512.9,28.5 513.2,18.4 513.6,25.0 513.9,27.6 514.3,31.2 514.7,18.8 515.0,31.3 515.4,27.1 515.7,26.4 516.1,18.0 516.5,16.6 516.8,20.1 517.2,28.1 517.5,19.7 517.9,17.9 518.3,32.9 518.6,23.8 519.0,22.5 519.3,18.8 519.7,32.9 520.1,32.9 520.4,32.9 520.8,30.1 521.1,20.7 521.5,24.5 521.9,21.9 522.2,24.5 522.6,32.8 522.9,30.5 523.3,28.4 523.7,17.1 524.0,20.3 524.4,17.6 524.7,24.8 525.1,20.2 525.5,20.6 525.8,20.5 526.2,32.5 526.5,21.9 526.9,23.1 527.3,25.7 527.6,33.4 528.0,34.1 528.3,34.8 528.7,35.6 529.1,36.4 529.4,37.1 529.8,37.6 530.1,37.9 530.5,38.1 530.9,38.3 531.2,38.5 531.6,38.8 531.9,39.1 532.3,39.4 532.7,39.7 533.0,40.1 533.4,40.4 533.7,40.6 534.1,40.8 534.5,41.0 534.8,41.2 535.2,41.3 535.5,41.6 535.9,41.8 536.3,42.1 536.6,42.4 537.0,42.7 537.3,43.0 537.7,43.3 538.1,43.6 538.4,43.7 538.8,43.9 538.8,44.1 538.4,44.3 538.1,44.4 537.7,44.7 537.3,44.9 537.0,45.2 536.6,45.5 536.3,45.7 535.9,46.0 535.5,46.3 535.2,46.6 534.8,47.0 534.5,47.3 534.1,47.7 533.7,48.0 533.4,48.3 533.0,48.6 532.7,48.8 532.3,49.1 531.9,49.3 531.6,49.6 531.2,49.8 530.9,50.0 530.5,50.1 530.1,50.2 529.8,50.3 529.4,50.8 529.1,51.5 528.7,52.4 528.3,53.2 528.0,54.0 527.6,54.9 527.3,55.6 526.9,59.6 526.5,55.9 526.2,66.0 525.8,62.0 525.5,69.4 525.1,60.5 524.7,55.1 524.4,66.1 524.0,58.2 523.7,54.9 523.3,68.4 522.9,61.1 522.6,72.7 522.2,62.8 521.9,54.8 521.5,54.9 521.1,72.5 520.8,60.0 520.4,66.9 520.1,67.4 519.7,72.8 519.3,61.2 519.0,64.6 518.6,61.1 518.3,69.3 517.9,56.2 517.5,62.5 517.2,55.5 516.8,71.5 516.5,73.1 516.1,72.3 515.7,54.9 515.4,66.4 515.0,60.6 514.7,64.3 514.3,66.3 513.9,56.2 513.6,59.2 513.2,68.9 512.9,56.1 512.5,61.2 512.1,73.2 511.8,70.6 511.4,56.0 511.1,56.0 510.7,69.2 510.3,60.3 510.0,70.2 509.6,63.4 509.3,55.9 508.9,56.0 508.5,61.4 508.2,56.3 507.8,56.4 507.5,63.5 507.1,73.9 506.7,56.5 506.4,64.4 506.0,56.6 505.7,65.9 505.3,65.9 504.9,71.2 504.6,65.3 504.2,55.9 503.9,73.2 503.5,55.0 503.1,70.9 502.8,66.9 502.4,60.5 502.1,55.1 501.7,62.3 501.3,73.7 501.0,68.5 500.6,68.8 500.3,59.5 499.9,68.4 499.5,60.4 499.2,62.2 498.8,73.0 498.5,56.4 498.1,63.5 497.7,71.4 497.4,69.8 497.0,63.6 496.7,65.0 496.3,71.1 495.9,66.7 495.6,67.5 495.2,65.0 494.9,59.1 494.5,60.9 494.1,56.2 493.8,68.3 493.4,65.0 493.1,70.4 492.7,66.0 492.3,68.9 492.0,58.4 491.6,65.3 491.3,64.8 490.9,60.1 490.5,62.5 490.2,73.6 489.8,67.3 489.5,62.9 489.1,65.8 488.7,70.8 488.4,68.9 488.0,71.1 487.7,73.2 487.3,71.7 486.9,70.4 486.6,72.6 486.2,62.7 485.9,64.2 485.5,67.0 485.1,68.3 484.8,60.8 484.4,55.4 484.1,72.6 483.7,72.9 483.3,70.5 483.0,71.0 482.6,73.4 482.3,67.3 481.9,63.2 481.5,64.5 481.2,54.8 480.8,70.2 480.5,71.4 480.1,69.9 479.7,55.0 479.4,55.1 479.0,61.8 478.7,66.4 478.3,60.0 477.9,63.8 477.6,55.8 477.2,73.4 476.9,62.4 476.5,62.9 476.1,60.7 475.8,72.3 475.4,66.4 475.1,59.7 474.7,73.2 474.3,72.0 474.0,64.6 473.6,65.4 473.3,70.7 472.9,56.7 472.5,56.8 472.2,56.9 471.8,65.5 471.5,63.7 471.1,56.5 470.7,68.6 470.4,72.2 470.0,64.6 469.7,72.0 469.3,66.6 468.9,71.5 468.6,61.3 468.2,64.0 467.9,56.7 467.5,63.6 467.1,63.4 466.8,70.9 466.4,67.7 466.1,61.5 465.7,73.5 465.3,66.3 465.0,64.2 464.6,56.7 464.3,59.7 463.9,61.0 463.5,56.7 463.2,71.0 462.8,63.0 462.5,65.5 462.1,67.5 461.7,67.1 461.4,56.0 461.0,61.3 460.7,68.5 460.3,64.0 459.9,71.6 459.6,63.2 459.2,56.0 458.9,69.0 458.5,58.9 458.1,63.0 457.8,68.0 457.4,69.1 457.1,71.2 456.7,59.5 456.3,69.9 456.0,59.0 455.6,66.8 455.3,63.4 454.9,61.9 454.5,66.9 454.2,64.8 453.8,56.6 453.5,56.6 453.1,63.0 452.7,58.8 452.4,67.6 452.0,72.3 451.7,63.4 451.3,73.6 450.9,71.8 450.6,65.1 450.2,66.8 449.9,64.9 449.5,60.2 449.1,59.5 448.8,61.4 448.4,70.5 448.1,56.9 447.7,73.5 447.3,56.9 447.0,70.2 446.6,71.4 446.3,70.6 445.9,65.3 445.5,62.3 445.2,60.3 444.8,72.6 444.5,62.7 444.1,71.2 443.7,54.8 443.4,63.0 443.0,55.0 442.7,73.2 442.3,72.1 441.9,65.5 441.6,62.9 441.2,68.2 440.9,73.5 440.5,70.1 440.1,68.6 439.8,65.2 439.4,65.7 439.1,62.9 438.7,62.4 438.3,73.9 438.0,66.5 437.6,69.4 437.3,67.9 436.9,65.6 436.5,72.6 436.2,72.6 435.8,73.3 435.5,68.7 435.1,70.6 434.7,69.5 434.4,73.8 434.0,62.8 433.7,70.4 433.3,60.0 432.9,62.6 432.6,55.5 432.2,72.2 431.9,59.5 431.5,64.6 431.1,62.5 430.8,60.0 430.4,65.9 430.1,69.3 429.7,66.5 429.3,62.6 429.0,65.3 428.6,61.1 428.3,71.2 427.9,73.5 427.5,59.3 427.2,69.4 426.8,61.6 426.5,69.4 426.1,58.9 425.7,72.1 425.4,71.8 425.0,70.3 424.7,64.1 424.3,63.6 423.9,60.9 423.6,60.0 423.2,68.5 422.9,56.4 422.5,69.8 422.1,70.7 421.8,66.2 421.4,63.5 421.1,62.7 420.7,72.9 420.3,67.6 420.0,56.1 419.6,68.8 419.3,67.4 418.9,70.8 418.5,56.0 418.2,65.6 417.8,56.1 417.5,73.0 417.1,66.1 416.7,63.8 416.4,73.1 416.0,65.7 415.7,69.8 415.3,71.0 414.9,68.2 414.6,68.0 414.2,57.7 413.9,68.1 413.5,64.5 413.1,70.0 412.8,55.4 412.4,61.8 412.1,71.1 411.7,57.6 411.3,58.6 411.0,68.1 410.6,71.5 410.3,72.1 409.9,60.5 409.5,73.2 409.2,60.4 408.8,54.7 408.5,54.7 408.1,58.0 407.7,59.3 407.4,71.1 407.0,73.4 406.7,55.5 406.3,69.3 405.9,69.0 405.6,69.7 405.2,68.4 404.9,60.1 404.5,55.0 404.1,68.3 403.8,68.0 403.4,71.9 403.1,71.0 402.7,61.6 402.3,70.8 402.0,55.2 401.6,55.3 401.3,61.6 400.9,60.1 400.5,54.9 400.2,70.2 399.8,65.3 399.5,63.7 399.1,54.7 398.7,63.8 398.4,71.4 398.0,69.4 397.7,72.5 397.3,67.3 396.9,61.7 396.6,61.6 396.2,63.8 395.9,65.5 395.5,73.0 395.1,55.1 394.8,61.8 394.4,67.4 394.1,65.0 393.7,58.5 393.3,61.9 393.0,63.8 392.6,60.2 392.3,67.1 391.9,60.7 391.5,70.9 391.2,55.4 390.8,54.9 390.5,56.4 390.1,53.9 389.7,53.3 389.4,55.3 389.0,52.2 388.7,51.7 388.3,50.9 387.9,49.8 387.6,48.8 387.2,47.7 386.9,46.9 386.5,46.6 386.1,46.4 385.8,46.1 385.4,45.9 385.1,46.0 384.7,46.3 384.3,46.6 384.0,46.9 383.6,47.2 383.3,47.6 382.9,48.2 382.5,48.8 382.2,49.4 381.8,49.9 381.5,50.6 381.1,51.2 380.7,52.0 380.4,52.7 380.0,53.4 379.7,53.5 379.3,55.2 378.9,53.3 378.6,53.1 378.2,52.8 377.9,52.7 377.5,53.6 377.1,52.7 376.8,53.7 376.4,53.4 376.1,53.1 375.7,53.2 375.3,55.5 375.0,53.7 374.6,55.8 374.3,54.6 373.9,55.9 373.5,56.2 373.2,54.0 372.8,54.9 372.5,55.9 372.1,54.3 371.7,54.6 371.4,56.4 371.0,55.3 370.7,54.0 370.3,53.9 369.9,55.2 369.6,54.8 369.2,54.8 368.9,52.7 368.5,54.6 368.1,53.5 367.8,53.9 367.4,54.7 367.1,55.0 366.7,53.0 366.3,53.9 366.0,55.3 365.6,54.1 365.3,54.5 364.9,53.3 364.5,53.0 364.2,53.5 363.8,53.8 363.5,53.2 363.1,54.1 362.7,53.8 362.4,54.3 362.0,54.5 361.7,54.6 361.3,54.4 360.9,54.8 360.6,53.6 360.2,54.9 359.9,52.8 359.5,52.7 359.1,53.0 358.8,54.9 358.4,54.2 358.1,54.5 357.7,52.6 357.3,52.6 357.0,54.4 356.6,54.4 356.3,54.5 355.9,52.8 355.5,53.0 355.2,54.5 354.8,55.3 354.5,54.8 354.1,53.2 353.7,53.7 353.4,55.5 353.0,54.2 352.7,54.8 352.3,54.1 351.9,55.0 351.6,56.1 351.2,55.2 350.9,54.2 350.5,55.5 350.1,54.4 349.8,54.5 349.4,56.3 349.1,54.0 348.7,54.7 348.3,53.5 348.0,53.5 347.6,52.9 347.3,52.6 346.9,54.2 346.5,52.6 346.2,53.6 345.8,53.9 345.5,52.5 345.1,53.4 344.7,66.3 344.4,63.2 344.0,54.8 343.7,55.4 343.3,66.2 342.9,55.8 342.6,55.8 342.2,55.8 341.9,67.4 341.5,58.8 341.1,68.6 340.8,56.8 340.4,67.8 340.1,69.3 339.7,61.7 339.3,56.6 339.0,56.2 338.6,70.2 338.3,69.6 337.9,64.3 337.5,55.4 337.2,55.4 336.8,55.4 336.5,69.8 336.1,55.5 335.7,55.5 335.4,55.5 335.0,55.5 334.7,55.4 334.3,55.4 333.9,65.9 333.6,55.3 333.2,55.4 332.9,55.5 332.5,55.7 332.1,55.8 331.8,70.2 331.4,62.6 331.1,56.1 330.7,56.1 330.3,66.2 330.0,56.2 329.6,56.2 329.3,59.1 328.9,60.6 328.5,56.3 328.2,65.3 327.8,56.6 327.5,56.7 327.1,56.8 326.7,56.8 326.4,56.9 326.0,56.9 325.7,65.7 325.3,57.0 324.9,57.0 324.6,67.9 324.2,57.1 323.9,57.1 323.5,57.2 323.1,57.3 322.8,57.3 322.4,65.0 322.1,57.2 321.7,57.0 321.3,56.7 321.0,56.4 320.6,70.8 320.3,56.1 319.9,56.2 319.5,56.5 319.2,64.8 318.8,57.3 318.5,57.6 318.1,57.7 317.7,57.7 317.4,65.3 317.0,57.4 316.7,57.2 316.3,61.6 315.9,57.0 315.6,56.9 315.2,56.9 314.9,56.8 314.5,61.5 314.1,56.5 313.8,56.5 313.4,60.9 313.1,56.4 312.7,56.3 312.3,67.0 312.0,56.2 311.6,56.1 311.3,56.1 310.9,56.3 310.5,56.5 310.2,56.8 309.8,57.0 309.5,68.4 309.1,57.1 308.7,57.0 308.4,67.6 308.0,56.6 307.7,61.0 307.3,65.5 306.9,65.1 306.6,56.2 306.2,56.1 305.9,62.3 305.5,56.0 305.1,56.0 304.8,56.0 304.4,56.1 304.1,57.5 303.7,56.5 303.3,58.3 303.0,56.8 302.6,56.8 302.3,56.6 301.9,59.3 301.5,60.8 301.2,59.2 300.8,62.0 300.5,56.4 300.1,60.3 299.7,56.0 299.4,56.4 299.0,56.2 298.7,60.6 298.3,58.9 297.9,66.3 297.6,56.2 297.2,66.9 296.9,66.4 296.5,53.2 296.1,53.1 295.8,53.0 295.4,61.5 295.1,68.4 294.7,70.6 294.3,72.9 294.0,52.4 293.6,63.6 293.3,52.5 292.9,71.3 292.5,70.3 292.2,68.3 291.8,61.7 291.5,52.9 291.1,71.6 290.7,56.1 290.4,67.9 290.0,70.7 289.7,53.1 289.3,56.0 288.9,71.0 288.6,52.6 288.2,54.6 287.9,61.7 287.5,51.6 287.1,51.5 286.8,59.3 286.4,51.6 286.1,51.6 285.7,51.7 285.3,58.3 285.0,53.9 284.6,51.6 284.3,51.5 283.9,58.3 283.5,51.3 283.2,56.3 282.8,52.5 282.5,51.1 282.1,51.2 281.7,51.3 281.4,51.4 281.0,53.1 280.7,56.3 280.3,51.4 279.9,51.3 279.6,55.1 279.2,55.4 278.9,53.3 278.5,54.3 278.1,51.1 277.8,51.2 277.4,52.9 277.1,55.9 276.7,51.5 276.3,53.4 276.0,51.4 275.6,51.4 275.3,51.9 274.9,52.9 274.5,55.5 274.2,51.1 273.8,51.1 273.5,51.2 273.1,51.3 272.7,51.5 272.4,53.0 272.0,51.6 271.7,51.6 271.3,53.6 270.9,51.3 270.6,53.4 270.2,52.4 269.9,51.9 269.5,50.8 269.1,53.1 268.8,50.7 268.4,51.8 268.1,53.8 267.7,50.6 267.3,53.5 267.0,50.6 266.6,51.6 266.3,50.4 265.9,51.9 265.5,50.3 265.2,50.3 264.8,51.2 264.5,52.3 264.1,50.6 263.7,50.1 263.4,51.1 263.0,53.0 262.7,52.0 262.3,50.0 261.9,50.0 261.6,50.1 261.2,52.4 260.9,50.1 260.5,50.1 260.1,50.0 259.8,50.0 259.4,51.2 259.1,50.3 258.7,52.2 258.3,49.9 258.0,50.8 257.6,50.0 257.3,50.0 256.9,50.0 256.5,51.3 256.2,50.0 255.8,51.6 255.5,51.4 255.1,50.7 254.7,50.3 254.4,50.8 254.0,50.3 253.7,51.4 253.3,49.9 252.9,50.2 252.6,49.3 252.2,49.0 251.9,48.8 251.5,48.6 251.1,48.6 250.8,48.7 250.4,48.7 250.1,48.7 249.7,48.7 249.3,48.8 249.0,48.9 248.6,49.0 248.3,49.2 247.9,49.2 247.5,49.2 247.2,49.2 246.8,49.1 246.5,49.0 246.1,48.9 245.7,48.8 245.4,48.8 245.0,48.7 244.7,48.7 244.3,48.6 243.9,48.5 243.6,48.5 243.2,48.5 242.9,48.5 242.5,48.5 242.1,48.5 241.8,48.5 241.4,48.5 241.1,48.5 240.7,48.5 240.3,48.6 240.0,48.6 239.6,48.7 239.3,48.8 238.9,48.8 238.5,48.7 238.2,48.6 237.8,48.4 237.5,48.2 237.1,48.1 236.7,48.1 236.4,48.1 236.0,48.3 235.7,48.4 235.3,48.6 234.9,48.8 234.6,48.9 234.2,48.8 233.9,48.7 233.5,48.6 233.1,48.4 232.8,48.3 232.4,48.2 232.1,48.2 231.7,48.3 231.3,48.5 231.0,48.7 230.6,48.8 230.3,48.9 229.9,49.0 229.5,48.9 229.2,48.9 228.8,48.9 228.5,48.9 228.1,48.9 227.7,48.9 227.4,48.9 227.0,49.0 226.7,49.1 226.3,49.2 225.9,49.2 225.6,49.2 225.2,49.2 224.9,49.0 224.5,48.8 224.1,48.7 223.8,48.5 223.4,48.5 223.1,48.6 222.7,48.7 222.3,48.8 222.0,48.9 221.6,49.0 221.3,49.1 220.9,49.1 220.5,49.2 220.2,49.3 219.8,49.4 219.5,49.5 219.1,49.6 218.7,49.5 218.4,49.4 218.0,49.3 217.7,49.2 217.3,49.1 216.9,49.0 216.6,49.1 216.2,49.1 215.9,49.2 215.5,49.3 215.1,49.4 214.8,49.5 214.4,49.6 214.1,49.9 213.7,50.1 213.3,50.4 213.0,50.7 212.6,50.9 212.3,51.0 211.9,51.1 211.5,51.1 211.2,51.2 210.8,51.2 210.5,51.3 210.1,51.4 209.7,51.6 209.4,51.8 209.0,52.0 208.7,52.2 208.3,52.5 207.9,52.7 207.6,52.8 207.2,52.8 206.9,52.8 206.5,56.7 206.1,53.3 205.8,53.7 205.4,54.2 205.1,59.7 204.7,68.7 204.3,61.6 204.0,54.4 203.6,54.4 203.3,66.2 202.9,57.4 202.5,60.8 202.2,59.3 201.8,64.7 201.5,55.8 201.1,60.3 200.7,68.8 200.4,63.3 200.0,56.0 199.7,56.0 199.3,56.0 198.9,58.6 198.6,70.2 198.2,63.3 197.9,55.2 197.5,60.0 197.1,55.0 196.8,68.7 196.4,65.0 196.1,54.7 195.7,63.5 195.3,65.2 195.0,64.7 194.6,54.3 194.3,67.5 193.9,57.6 193.5,62.9 193.2,60.4 192.8,59.9 192.5,54.7 192.1,54.9 191.7,55.2 191.4,63.1 191.0,66.3 190.7,65.2 190.3,71.1 189.9,64.2 189.6,72.1 189.2,64.1 188.9,54.5 188.5,54.3 188.1,57.8 187.8,65.1 187.4,54.5 187.1,54.6 186.7,68.6 186.3,66.7 186.0,64.7 185.6,64.3 185.3,65.9 184.9,66.4 184.5,67.6 184.2,73.6 183.8,71.9 183.5,70.9 183.1,68.8 182.7,61.3 182.4,60.7 182.0,60.1 181.7,60.3 181.3,56.6 180.9,68.0 180.6,58.9 180.2,62.8 179.9,68.7 179.5,62.4 179.1,71.8 178.8,63.9 178.4,61.2 178.1,63.7 177.7,61.3 177.3,56.7 177.0,63.4 176.6,67.7 176.3,68.9 175.9,55.2 175.5,73.1 175.2,60.1 174.8,58.7 174.5,65.2 174.1,55.0 173.7,71.8 173.4,73.7 173.0,64.3 172.7,67.2 172.3,73.1 171.9,67.9 171.6,68.2 171.2,63.5 170.9,59.2 170.5,69.9 170.1,58.5 169.8,58.7 169.4,61.6 169.1,67.3 168.7,55.3 168.3,70.4 168.0,55.1 167.6,60.0 167.3,57.3 166.9,64.2 166.5,72.1 166.2,57.3 165.8,71.7 165.5,69.9 165.1,61.6 164.7,68.4 164.4,68.4 164.0,69.9 163.7,67.9 163.3,61.7 162.9,60.9 162.6,73.7 162.2,55.8 161.9,55.8 161.5,73.9 161.1,63.3 160.8,72.2 160.4,72.1 160.1,63.4 159.7,64.5 159.3,66.7 159.0,60.3 158.6,63.8 158.3,72.1 157.9,56.3 157.5,72.2 157.2,62.1 156.8,61.1 156.5,60.6 156.1,69.8 155.7,72.2 155.4,72.8 155.0,58.7 154.7,55.5 154.3,58.5 153.9,55.3 153.6,64.4 153.2,67.0 152.9,60.0 152.5,55.3 152.1,71.3 151.8,61.2 151.4,55.6 151.1,72.3 150.7,67.2 150.3,55.7 150.0,66.5 149.6,70.2 149.3,73.0 148.9,65.0 148.5,61.6 148.2,66.0 147.8,56.0 147.5,70.0 147.1,70.3 146.7,65.8 146.4,55.9 146.0,70.4 145.7,55.7 145.3,55.5 144.9,71.2 144.6,71.5 144.2,62.4 143.9,71.6 143.5,55.8 143.1,67.8 142.8,68.0 142.4,56.8 142.1,67.6 141.7,70.4 141.3,68.6 141.0,69.1 140.6,60.4 140.3,69.8 139.9,68.8 139.5,72.6 139.2,69.4 138.8,71.2 138.5,61.9 138.1,58.7 137.7,56.1 137.4,58.2 137.0,68.3 136.7,56.0 136.3,67.6 135.9,55.9 135.6,60.4 135.2,72.1 134.9,65.3 134.5,70.3 134.1,56.8 133.8,62.3 133.4,69.0 133.1,69.3 132.7,71.9 132.3,72.0 132.0,59.2 131.6,69.3 131.3,67.4 130.9,70.2 130.5,62.8 130.2,63.4 129.8,65.6 129.5,66.3 129.1,64.6 128.7,57.3 128.4,72.6 128.0,69.0 127.7,68.4 127.3,65.6 126.9,67.4 126.6,71.1 126.2,61.4 125.9,61.1 125.5,71.2 125.1,68.6 124.8,71.2 124.4,55.2 124.1,55.3 123.7,69.6 123.3,62.4 123.0,58.5 122.6,61.0 122.3,70.3 121.9,71.6 121.5,65.2 121.2,63.2 120.8,65.2 120.5,56.6 120.1,60.9 119.7,70.1 119.4,56.3 119.0,65.4 118.7,60.2 118.3,61.4 117.9,68.8 117.6,68.2 117.2,64.3 116.9,71.9 116.5,68.3 116.1,64.9 115.8,51.9 115.4,47.3 115.1,47.2 114.7,47.1 114.3,47.2 114.0,47.3 113.6,47.5 113.3,47.7 112.9,47.8 112.5,48.0 112.2,48.5 111.8,49.0 111.5,49.5 111.1,50.0 110.7,50.0 110.4,49.8 110.0,49.6 109.7,49.4 109.3,49.3 108.9,49.3 108.6,49.3 108.2,49.2 107.9,49.1 107.5,49.1 107.1,48.9 106.8,48.8 106.4,48.7 106.1,48.5 105.7,48.9 105.3,49.3 105.0,49.8 104.6,50.3 104.3,50.9 103.9,54.9 103.5,55.8 103.2,52.6 102.8,54.6 102.5,58.2 102.1,53.5 101.7,53.6 101.4,58.8 101.0,53.4 100.7,57.5 100.3,53.1 99.9,58.2 99.6,57.4 99.2,55.9 98.9,60.6 98.5,52.9 98.1,52.8 97.8,52.9 97.4,53.1 97.1,60.5 96.7,58.0 96.3,58.0 96.0,59.5 95.6,59.7 95.3,54.0 94.9,59.4 94.5,54.0 94.2,54.0 93.8,56.9 93.5,56.6 93.1,56.8 92.7,55.2 92.4,53.4 92.0,53.2 91.7,54.3 91.3,53.0 90.9,59.3 90.6,52.7 90.2,57.6 89.9,52.4 89.5,52.3 89.1,54.5 88.8,53.6 88.4,52.7 88.1,52.9 87.7,53.2 87.3,58.9 87.0,53.3 86.6,53.3 86.3,55.7 85.9,53.2 85.5,58.3 85.2,58.9 84.8,57.7 84.5,58.4 84.1,52.9 83.7,52.8 83.4,55.8 83.0,55.1 82.7,52.6 82.3,52.6 81.9,52.6 81.6,55.5 81.2,52.8 80.9,52.8 80.5,52.8 80.1,57.9 79.8,56.6 79.4,52.4 79.1,57.1 78.7,57.0 78.3,52.1 78.0,56.9 77.6,52.1 77.3,56.8 76.9,52.2 76.5,53.8 76.2,52.2 75.8,52.2 75.5,52.2 75.1,52.9 74.7,52.1 74.4,56.7 74.0,52.1 73.7,57.3 73.3,58.3 72.9,52.3 72.6,52.4 72.2,52.5 71.9,52.5 71.5,57.3 71.1,52.5 70.8,54.2 70.4,52.4 70.1,52.3 69.7,57.2 69.3,52.3 69.0,52.2 68.6,52.2 68.3,52.2 67.9,52.1 67.5,52.1 67.2,57.9 66.8,52.1 66.5,57.0 66.1,56.0 65.7,53.9 65.4,54.3 65.0,57.5 64.7,56.8 64.3,57.1 63.9,55.8 63.6,51.9 63.2,58.3 62.9,56.8 62.5,57.8 62.1,56.7 61.8,52.2 61.4,56.3 61.1,52.5 60.7,59.4 60.3,54.0 60.0,52.5 59.6,52.4 59.3,56.9 58.9,52.3 58.5,57.0 58.2,52.2 57.8,57.3 57.5,59.3 57.1,52.0 56.7,51.9 56.4,51.9 56.0,56.3 55.7,59.7 55.3,51.9 54.9,51.8 54.6,53.8 54.2,58.7 53.9,58.0 53.5,51.9 53.1,54.7 52.8,52.0 52.4,52.1 52.1,55.3 51.7,52.2 51.3,52.0 51.0,55.4 50.6,51.7 50.3,56.5 49.9,51.4 49.5,51.3 49.2,55.8 48.8,51.3 48.5,54.7 48.1,57.7 47.7,51.3 47.4,51.3 47.0,60.1 46.7,51.4 46.3,54.5 45.9,51.7 45.6,59.5 45.2,51.8 44.9,60.7 44.5,51.6 44.1,51.4 43.8,60.2 43.4,57.5 43.1,51.0 42.7,55.0 42.3,51.3 42.0,59.6 41.6,59.3 41.3,51.9 40.9,52.0 40.5,60.6 40.2,51.8 39.8,56.7 39.5,56.2 39.1,56.2 38.7,51.5 38.4,55.9 38.0,60.3 37.7,54.3 37.3,58.1 36.9,51.4 36.6,51.4 36.2,51.3 35.9,51.3 35.5,52.9 35.1,55.7 34.8,51.1 34.4,54.0 34.1,51.1 33.7,58.4 33.3,54.1 33.0,58.2 32.6,55.7 32.3,51.5 31.9,54.6 31.5,52.8 31.2,58.8 30.8,51.8 30.5,58.6 30.1,51.9 29.7,56.5 29.4,51.9 29.0,53.6 28.7,58.0 28.3,56.0 27.9,51.6 27.6,51.6 27.2,55.6 26.9,51.6 26.5,51.7 26.1,55.9 25.8,59.8 25.4,60.2 25.1,57.4 24.7,55.9 24.3,55.4 24.0,55.9 23.6,50.0 23.3,49.0 22.9,48.9 22.5,48.7 22.2,48.4 21.8,48.2 21.5,48.0 21.1,48.0 20.7,48.1 20.4,48.1 20.0,48.2 19.7,48.3 19.3,48.4 18.9,48.4 18.6,48.5 18.2,48.5 17.9,48.4 17.5,48.4 17.1,48.4 16.8,48.3 16.4,48.2 16.1,48.0 15.7,47.9 15.3,47.7 15.0,47.6 14.6,47.6 14.3,47.6 13.9,47.6 13.5,47.7 13.2,47.8 12.8,47.8 12.5,47.9 12.1,47.9 11.7,47.8 11.4,47.8 11.0,47.8 10.7,47.8 10.3,47.8 9.9,47.8 9.6,47.7 9.2,47.7 8.9,47.7 8.5,47.7 8.1,47.6 7.8,47.6 7.4,47.6 7.1,47.7 6.7,47.7 6.3,47.7 6.0,47.8 5.6,47.8 5.3,47.7 4.9,47.6 4.5,47.5 4.2,47.4 3.8,47.3 3.5,47.3 3.1,47.3 2.7,47.3 2.4,47.4 2.0,47.4 1.7,47.4 1.3,47.4" fill="#4a5ecb" opacity="0.62"/>
<polygon points="1.3,40.9 1.7,40.9 2.0,40.9 2.4,40.9 2.7,40.9 3.1,40.9 3.5,40.9 3.8,40.9 4.2,40.8 4.5,40.7 4.9,40.6 5.3,40.5 5.6,40.4 6.0,40.4 6.3,40.5 6.7,40.5 7.1,40.6 7.4,40.7 7.8,40.7 8.1,40.7 8.5,40.6 8.9,40.5 9.2,40.4 9.6,40.3 9.9,40.3 10.3,40.2 10.7,40.2 11.0,40.2 11.4,40.2 11.7,40.3 12.1,40.3 12.5,40.2 12.8,40.3 13.2,40.3 13.5,40.3 13.9,40.4 14.3,40.4 14.6,40.4 15.0,40.3 15.3,40.2 15.7,40.1 16.1,39.9 16.4,39.7 16.8,39.6 17.1,39.6 17.5,39.6 17.9,39.6 18.2,39.6 18.6,39.6 18.9,39.7 19.3,39.7 19.7,39.7 20.0,39.6 20.4,39.6 20.7,39.6 21.1,39.6 21.5,39.7 21.8,39.7 22.2,39.7 22.5,39.7 22.9,39.7 23.3,39.7 23.6,38.8 24.0,36.5 24.3,35.8 24.7,35.9 25.1,36.0 25.4,36.1 25.8,36.2 26.1,36.4 26.5,36.4 26.9,36.5 27.2,36.5 27.6,36.5 27.9,36.5 28.3,36.4 28.7,36.3 29.0,36.1 29.4,36.0 29.7,35.9 30.1,36.0 30.5,36.1 30.8,36.4 31.2,36.7 31.5,36.9 31.9,37.1 32.3,37.1 32.6,37.1 33.0,37.1 33.3,37.1 33.7,37.1 34.1,37.1 34.4,37.1 34.8,37.0 35.1,36.9 35.5,36.8 35.9,36.6 36.2,36.5 36.6,36.5 36.9,36.4 37.3,36.3 37.7,36.1 38.0,36.0 38.4,35.9 38.7,35.9 39.1,35.9 39.5,36.0 39.8,36.1 40.2,36.2 40.5,36.3 40.9,36.4 41.3,36.4 41.6,36.4 42.0,36.4 42.3,36.5 42.7,36.5 43.1,36.5 43.4,36.5 43.8,36.3 44.1,36.1 44.5,35.8 44.9,35.7 45.2,35.6 45.6,35.6 45.9,35.9 46.3,36.2 46.7,36.6 47.0,36.9 47.4,37.0 47.7,37.0 48.1,36.8 48.5,36.5 48.8,36.2 49.2,35.9 49.5,35.7 49.9,35.7 50.3,35.9 50.6,36.1 51.0,36.3 51.3,36.5 51.7,36.6 52.1,36.6 52.4,36.6 52.8,36.7 53.1,36.7 53.5,36.8 53.9,36.8 54.2,36.8 54.6,36.8 54.9,36.8 55.3,36.8 55.7,36.8 56.0,36.8 56.4,36.8 56.7,36.8 57.1,36.7 57.5,36.6 57.8,36.6 58.2,36.5 58.5,36.5 58.9,36.4 59.3,36.2 59.6,36.0 60.0,35.8 60.3,35.7 60.7,35.6 61.1,35.7 61.4,35.8 61.8,36.1 62.1,36.3 62.5,36.5 62.9,36.6 63.2,36.5 63.6,36.4 63.9,36.3 64.3,36.1 64.7,35.9 65.0,35.9 65.4,35.9 65.7,35.8 66.1,35.8 66.5,35.8 66.8,35.7 67.2,35.7 67.5,35.7 67.9,35.7 68.3,35.8 68.6,35.9 69.0,35.9 69.3,36.0 69.7,36.0 70.1,35.9 70.4,35.9 70.8,35.8 71.1,35.7 71.5,35.7 71.9,35.7 72.2,35.8 72.6,36.0 72.9,36.2 73.3,36.4 73.7,36.5 74.0,36.6 74.4,36.6 74.7,36.6 75.1,36.6 75.5,36.6 75.8,36.6 76.2,36.6 76.5,36.6 76.9,36.5 77.3,36.5 77.6,36.4 78.0,36.4 78.3,36.4 78.7,36.3 79.1,36.2 79.4,36.0 79.8,35.8 80.1,35.7 80.5,35.6 80.9,35.6 81.2,35.7 81.6,35.8 81.9,35.8 82.3,35.9 82.7,35.9 83.0,35.9 83.4,35.9 83.7,35.9 84.1,35.9 84.5,35.9 84.8,35.9 85.2,35.9 85.5,35.8 85.9,35.6 86.3,35.5 86.6,35.4 87.0,35.3 87.3,35.3 87.7,35.3 88.1,35.3 88.4,35.3 88.8,35.4 89.1,35.4 89.5,35.3 89.9,35.3 90.2,35.4 90.6,35.4 90.9,35.5 91.3,35.5 91.7,35.4 92.0,35.3 92.4,35.0 92.7,34.8 93.1,34.5 93.5,34.4 93.8,34.3 94.2,34.3 94.5,34.3 94.9,34.3 95.3,34.3 95.6,34.3 96.0,34.3 96.3,34.3 96.7,34.5 97.1,34.6 97.4,34.8 97.8,34.9 98.1,34.9 98.5,34.9 98.9,34.7 99.2,34.5 99.6,34.2 99.9,34.1 100.3,34.0 100.7,33.9 101.0,33.9 101.4,33.8 101.7,34.0 102.1,34.3 102.5,34.6 102.8,34.8 103.2,34.9 103.5,35.1 103.9,35.5 104.3,36.0 104.6,36.5 105.0,37.1 105.3,37.8 105.7,38.4 106.1,38.9 106.4,38.8 106.8,38.7 107.1,38.5 107.5,38.5 107.9,38.4 108.2,38.4 108.6,38.4 108.9,38.5 109.3,38.4 109.7,38.3 110.0,38.1 110.4,37.8 110.7,37.6 111.1,37.6 111.5,38.2 111.8,38.8 112.2,39.6 112.5,40.2 112.9,40.5 113.3,40.8 113.6,41.0 114.0,41.1 114.3,41.2 114.7,41.2 115.1,41.1 115.4,41.0 115.8,36.8 116.1,32.0 116.5,31.9 116.9,31.6 117.2,31.5 117.6,31.3 117.9,31.3 118.3,31.4 118.7,31.7 119.0,32.0 119.4,32.4 119.7,32.7 120.1,32.8 120.5,32.7 120.8,32.6 121.2,32.4 121.5,32.2 121.9,32.0 122.3,31.9 122.6,32.0 123.0,32.2 123.3,32.5 123.7,32.7 124.1,32.9 124.4,33.1 124.8,33.0 125.1,32.7 125.5,32.4 125.9,32.0 126.2,31.7 126.6,31.5 126.9,31.5 127.3,31.4 127.7,31.4 128.0,31.3 128.4,31.3 128.7,31.2 129.1,31.2 129.5,31.3 129.8,31.4 130.2,31.5 130.5,31.6 130.9,31.7 131.3,31.7 131.6,31.6 132.0,31.5 132.3,31.3 132.7,31.1 133.1,31.0 133.4,31.0 133.8,31.1 134.1,31.4 134.5,31.8 134.9,32.1 135.2,32.3 135.6,32.4 135.9,32.3 136.3,32.1 136.7,31.9 137.0,31.6 137.4,31.5 137.7,31.4 138.1,31.4 138.5,31.5 138.8,31.5 139.2,31.6 139.5,31.6 139.9,31.7 140.3,31.7 140.6,31.7 141.0,31.7 141.3,31.7 141.7,31.7 142.1,31.7 142.4,31.7 142.8,31.8 143.1,31.8 143.5,31.9 143.9,32.0 144.2,32.0 144.6,32.0 144.9,31.8 145.3,31.6 145.7,31.4 146.0,31.2 146.4,31.1 146.7,31.1 147.1,31.0 147.5,31.0 147.8,30.9 148.2,30.9 148.5,30.8 148.9,30.9 149.3,31.0 149.6,31.3 150.0,31.6 150.3,31.8 150.7,32.0 151.1,32.0 151.4,32.0 151.8,31.9 152.1,31.8 152.5,31.7 152.9,31.6 153.2,31.6 153.6,31.8 153.9,32.1 154.3,32.5 154.7,32.8 155.0,33.1 155.4,33.1 155.7,33.0 156.1,32.7 156.5,32.3 156.8,31.9 157.2,31.7 157.5,31.6 157.9,31.6 158.3,31.6 158.6,31.7 159.0,31.7 159.3,31.7 159.7,31.8 160.1,31.7 160.4,31.6 160.8,31.4 161.1,31.3 161.5,31.2 161.9,31.1 162.2,31.1 162.6,31.2 162.9,31.3 163.3,31.4 163.7,31.5 164.0,31.5 164.4,31.6 164.7,31.8 165.1,32.1 165.5,32.4 165.8,32.7 166.2,32.8 166.5,32.8 166.9,32.8 167.3,32.8 167.6,32.7 168.0,32.7 168.3,32.6 168.7,32.6 169.1,32.5 169.4,32.4 169.8,32.2 170.1,32.1 170.5,32.0 170.9,32.0 171.2,32.2 171.6,32.5 171.9,32.9 172.3,33.3 172.7,33.5 173.0,33.5 173.4,33.4 173.7,33.2 174.1,33.0 174.5,32.7 174.8,32.5 175.2,32.5 175.5,32.6 175.9,32.7 176.3,32.9 176.6,33.1 177.0,33.2 177.3,33.2 177.7,33.2 178.1,33.3 178.4,33.3 178.8,33.3 179.1,33.4 179.5,33.4 179.9,33.4 180.2,33.4 180.6,33.5 180.9,33.5 181.3,33.5 181.7,33.5 182.0,33.4 182.4,33.2 182.7,32.8 183.1,32.3 183.5,32.0 183.8,31.8 184.2,31.9 184.5,32.2 184.9,32.5 185.3,32.9 185.6,33.2 186.0,33.4 186.3,33.4 186.7,33.4 187.1,33.3 187.4,33.3 187.8,33.3 188.1,33.3 188.5,33.3 188.9,33.2 189.2,33.2 189.6,33.1 189.9,33.0 190.3,33.0 190.7,33.0 191.0,32.8 191.4,32.6 191.7,32.3 192.1,32.1 192.5,31.9 192.8,31.9 193.2,32.1 193.5,32.5 193.9,33.0 194.3,33.4 194.6,33.7 195.0,33.8 195.3,33.7 195.7,33.6 196.1,33.4 196.4,33.2 196.8,33.0 197.1,33.0 197.5,33.0 197.9,32.9 198.2,32.9 198.6,32.8 198.9,32.8 199.3,32.8 199.7,32.8 200.0,32.6 200.4,32.5 200.7,32.3 201.1,32.1 201.5,32.1 201.8,32.1 202.2,32.1 202.5,32.2 202.9,32.2 203.3,32.3 203.6,32.3 204.0,32.3 204.3,32.3 204.7,32.3 205.1,32.2 205.4,32.2 205.8,32.7 206.1,33.3 206.5,34.1 206.9,34.9 207.2,35.5 207.6,36.0 207.9,36.3 208.3,36.5 208.7,36.7 209.0,36.7 209.4,36.8 209.7,36.8 210.1,36.9 210.5,36.9 210.8,37.1 211.2,37.2 211.5,37.3 211.9,37.4 212.3,37.5 212.6,37.6 213.0,37.6 213.3,37.5 213.7,37.5 214.1,37.4 214.4,37.4 214.8,37.5 215.1,37.6 215.5,37.7 215.9,37.8 216.2,37.8 216.6,37.9 216.9,37.9 217.3,38.1 217.7,38.3 218.0,38.5 218.4,38.8 218.7,38.9 219.1,39.0 219.5,39.1 219.8,39.1 220.2,39.1 220.5,39.1 220.9,39.2 221.3,39.2 221.6,39.2 222.0,39.2 222.3,39.2 222.7,39.3 223.1,39.3 223.4,39.3 223.8,39.3 224.1,39.4 224.5,39.4 224.9,39.4 225.2,39.4 225.6,39.5 225.9,39.5 226.3,39.4 226.7,39.4 227.0,39.3 227.4,39.3 227.7,39.3 228.1,39.3 228.5,39.3 228.8,39.3 229.2,39.3 229.5,39.2 229.9,39.2 230.3,39.3 230.6,39.3 231.0,39.4 231.3,39.5 231.7,39.6 232.1,39.6 232.4,39.6 232.8,39.7 233.1,39.7 233.5,39.8 233.9,39.9 234.2,39.9 234.6,39.9 234.9,39.9 235.3,39.8 235.7,39.8 236.0,39.7 236.4,39.6 236.7,39.6 237.1,39.6 237.5,39.6 237.8,39.7 238.2,39.7 238.5,39.7 238.9,39.7 239.3,39.7 239.6,39.6 240.0,39.6 240.3,39.5 240.7,39.4 241.1,39.4 241.4,39.4 241.8,39.3 242.1,39.2 242.5,39.1 242.9,39.0 243.2,38.9 243.6,38.9 243.9,39.0 244.3,39.0 244.7,39.0 245.0,39.1 245.4,39.1 245.7,39.1 246.1,39.1 246.5,39.1 246.8,39.1 247.2,39.2 247.5,39.2 247.9,39.1 248.3,39.1 248.6,39.1 249.0,39.0 249.3,39.0 249.7,39.0 250.1,39.0 250.4,38.9 250.8,38.9 251.1,38.9 251.5,38.8 251.9,38.6 252.2,38.4 252.6,38.2 252.9,38.1 253.3,38.1 253.7,38.2 254.0,38.3 254.4,38.3 254.7,38.2 255.1,37.9 255.5,37.7 255.8,37.4 256.2,37.2 256.5,37.1 256.9,37.1 257.3,37.1 257.6,37.1 258.0,37.2 258.3,37.2 258.7,37.2 259.1,37.2 259.4,37.1 259.8,37.1 260.1,37.0 260.5,37.0 260.9,37.0 261.2,36.9 261.6,36.9 261.9,37.0 262.3,37.0 262.7,37.0 263.0,37.0 263.4,37.0 263.7,37.1 264.1,37.2 264.5,37.3 264.8,37.4 265.2,37.4 265.5,37.4 265.9,37.4 266.3,37.4 266.6,37.3 267.0,37.3 267.3,37.3 267.7,37.3 268.1,37.3 268.4,37.3 268.8,37.4 269.1,37.5 269.5,37.5 269.9,37.5 270.2,37.4 270.6,37.2 270.9,37.0 271.3,36.7 271.7,36.6 272.0,36.5 272.4,36.6 272.7,36.8 273.1,37.0 273.5,37.1 273.8,37.3 274.2,37.3 274.5,37.3 274.9,37.3 275.3,37.2 275.6,37.2 276.0,37.2 276.3,37.2 276.7,37.2 277.1,37.1 277.4,37.0 277.8,37.0 278.1,36.9 278.5,36.9 278.9,36.9 279.2,36.9 279.6,36.9 279.9,36.9 280.3,36.9 280.7,36.8 281.0,36.8 281.4,36.7 281.7,36.6 282.1,36.5 282.5,36.4 282.8,36.4 283.2,36.3 283.5,36.4 283.9,36.5 284.3,36.6 284.6,36.6 285.0,36.6 285.3,36.6 285.7,36.6 286.1,36.6 286.4,36.6 286.8,36.5 287.1,36.5 287.5,36.4 287.9,36.3 288.2,36.2 288.6,36.1 288.9,36.0 289.3,35.9 289.7,35.9 290.0,35.9 290.4,35.9 290.7,35.9 291.1,35.9 291.5,35.9 291.8,35.9 292.2,35.8 292.5,35.7 292.9,35.5 293.3,35.4 293.6,35.3 294.0,35.3 294.3,35.3 294.7,35.4 295.1,35.5 295.4,35.7 295.8,35.8 296.1,35.8 296.5,35.6 296.9,35.3 297.2,34.9 297.6,34.3 297.9,33.4 298.3,32.7 298.7,32.1 299.0,31.6 299.4,31.1 299.7,31.1 300.1,31.3 300.5,31.5 300.8,31.6 301.2,31.9 301.5,32.2 301.9,32.5 302.3,32.7 302.6,32.8 303.0,32.8 303.3,32.8 303.7,32.7 304.1,32.6 304.4,32.5 304.8,32.5 305.1,32.5 305.5,32.4 305.9,32.4 306.2,32.3 306.6,32.2 306.9,32.2 307.3,32.1 307.7,32.1 308.0,32.1 308.4,32.1 308.7,32.1 309.1,32.0 309.5,32.0 309.8,32.1 310.2,32.2 310.5,32.4 310.9,32.5 311.3,32.6 311.6,32.6 312.0,32.3 312.3,32.0 312.7,31.5 313.1,31.0 313.4,30.7 313.8,30.6 314.1,30.6 314.5,30.5 314.9,30.4 315.2,30.3 315.6,30.3 315.9,30.2 316.3,30.4 316.7,30.6 317.0,30.9 317.4,31.3 317.7,31.5 318.1,31.6 318.5,31.6 318.8,31.6 319.2,31.6 319.5,31.6 319.9,31.6 320.3,31.6 320.6,31.6 321.0,31.8 321.3,32.0 321.7,32.3 322.1,32.5 322.4,32.6 322.8,32.6 323.1,32.6 323.5,32.6 323.9,32.6 324.2,32.6 324.6,32.6 324.9,32.5 325.3,32.4 325.7,32.3 326.0,32.1 326.4,32.0 326.7,31.9 327.1,31.9 327.5,32.0 327.8,32.0 328.2,32.1 328.5,32.1 328.9,32.1 329.3,32.1 329.6,31.9 330.0,31.6 330.3,31.3 330.7,30.9 331.1,30.7 331.4,30.7 331.8,30.9 332.1,31.2 332.5,31.7 332.9,32.0 333.2,32.3 333.6,32.4 333.9,32.4 334.3,32.5 334.7,32.6 335.0,32.7 335.4,32.7 335.7,32.8 336.1,32.5 336.5,32.1 336.8,31.5 337.2,31.0 337.5,30.5 337.9,30.3 338.3,30.4 338.6,30.6 339.0,30.9 339.3,31.1 339.7,31.4 340.1,31.4 340.4,31.5 340.8,31.7 341.1,31.9 341.5,32.1 341.9,32.3 342.2,32.4 342.6,32.4 342.9,32.2 343.3,32.0 343.7,32.0 344.0,32.4 344.4,32.9 344.7,33.5 345.1,34.3 345.5,35.1 345.8,35.4 346.2,35.6 346.5,35.8 346.9,35.8 347.3,35.6 347.6,35.4 348.0,35.2 348.3,35.0 348.7,34.8 349.1,34.8 349.4,34.7 349.8,34.5 350.1,34.3 350.5,34.1 350.9,34.0 351.2,34.0 351.6,34.0 351.9,34.0 352.3,34.1 352.7,34.1 353.0,34.2 353.4,34.2 353.7,34.2 354.1,34.3 354.5,34.4 354.8,34.4 355.2,34.5 355.5,34.5 355.9,34.6 356.3,34.7 356.6,34.9 357.0,35.1 357.3,35.3 357.7,35.3 358.1,35.3 358.4,35.3 358.8,35.2 359.1,35.2 359.5,35.2 359.9,35.1 360.2,35.2 360.6,35.2 360.9,35.3 361.3,35.4 361.7,35.5 362.0,35.5 362.4,35.5 362.7,35.3 363.1,35.0 363.5,34.7 363.8,34.5 364.2,34.4 364.5,34.4 364.9,34.4 365.3,34.5 365.6,34.7 366.0,34.8 366.3,34.8 366.7,34.8 367.1,34.7 367.4,34.6 367.8,34.5 368.1,34.4 368.5,34.4 368.9,34.4 369.2,34.5 369.6,34.7 369.9,34.9 370.3,35.0 370.7,35.2 371.0,35.2 371.4,35.2 371.7,35.3 372.1,35.3 372.5,35.4 372.8,35.4 373.2,35.4 373.5,35.3 373.9,35.1 374.3,34.8 374.6,34.5 375.0,34.4 375.3,34.3 375.7,34.3 376.1,34.2 376.4,34.1 376.8,34.0 377.1,34.0 377.5,34.0 377.9,34.1 378.2,34.2 378.6,34.3 378.9,34.4 379.3,34.6 379.7,34.7 380.0,34.8 380.4,35.3 380.7,35.8 381.1,36.3 381.5,36.8 381.8,37.4 382.2,38.1 382.5,38.7 382.9,39.3 383.3,40.0 383.6,40.5 384.0,40.8 384.3,41.1 384.7,41.4 385.1,41.8 385.4,41.9 385.8,41.6 386.1,41.2 386.5,40.9 386.9,40.7 387.2,40.0 387.6,39.1 387.9,38.2 388.3,37.3 388.7,36.5 389.0,36.0 389.4,35.4 389.7,34.7 390.1,34.1 390.5,33.5 390.8,33.0 391.2,32.6 391.5,32.3 391.9,32.4 392.3,32.5 392.6,32.5 393.0,32.5 393.3,32.6 393.7,32.8 394.1,33.0 394.4,33.2 394.8,33.3 395.1,33.3 395.5,33.3 395.9,33.3 396.2,33.3 396.6,33.3 396.9,33.3 397.3,33.3 397.7,33.3 398.0,33.2 398.4,33.0 398.7,32.9 399.1,32.8 399.5,32.7 399.8,32.7 400.2,32.7 400.5,32.7 400.9,32.7 401.3,32.7 401.6,32.8 402.0,32.7 402.3,32.5 402.7,32.3 403.1,32.0 403.4,31.8 403.8,31.7 404.1,31.7 404.5,31.6 404.9,31.4 405.2,31.2 405.6,31.1 405.9,31.0 406.3,31.0 406.7,31.2 407.0,31.5 407.4,31.8 407.7,32.1 408.1,32.2 408.5,32.2 408.8,32.1 409.2,31.8 409.5,31.5 409.9,31.3 410.3,31.1 410.6,31.0 411.0,31.0 411.3,31.0 411.7,31.0 412.1,30.9 412.4,30.9 412.8,30.9 413.1,30.9 413.5,30.9 413.9,31.0 414.2,31.0 414.6,31.0 414.9,31.0 415.3,31.1 415.7,31.4 416.0,31.7 416.4,32.1 416.7,32.3 417.1,32.4 417.5,32.5 417.8,32.5 418.2,32.6 418.5,32.7 418.9,32.8 419.3,32.8 419.6,32.8 420.0,32.8 420.3,32.8 420.7,32.8 421.1,32.8 421.4,32.8 421.8,32.8 422.1,32.8 422.5,32.8 422.9,32.8 423.2,32.8 423.6,32.8 423.9,32.8 424.3,32.8 424.7,32.8 425.0,32.8 425.4,32.8 425.7,32.8 426.1,32.8 426.5,32.7 426.8,32.4 427.2,32.2 427.5,32.0 427.9,31.8 428.3,31.8 428.6,31.7 429.0,31.5 429.3,31.4 429.7,31.2 430.1,31.1 430.4,31.1 430.8,31.1 431.1,31.2 431.5,31.2 431.9,31.2 432.2,31.2 432.6,31.3 432.9,31.3 433.3,31.5 433.7,31.7 434.0,31.9 434.4,32.1 434.7,32.1 435.1,32.1 435.5,32.0 435.8,31.9 436.2,31.8 436.5,31.7 436.9,31.7 437.3,31.7 437.6,31.6 438.0,31.5 438.3,31.5 438.7,31.4 439.1,31.4 439.4,31.5 439.8,31.8 440.1,32.2 440.5,32.6 440.9,32.9 441.2,33.1 441.6,33.1 441.9,32.8 442.3,32.5 442.7,32.2 443.0,31.9 443.4,31.7 443.7,31.7 444.1,31.6 444.5,31.4 444.8,31.3 445.2,31.2 445.5,31.1 445.9,31.1 446.3,31.1 446.6,31.2 447.0,31.3 447.3,31.3 447.7,31.4 448.1,31.4 448.4,31.4 448.8,31.4 449.1,31.4 449.5,31.5 449.9,31.5 450.2,31.5 450.6,31.6 450.9,31.7 451.3,31.9 451.7,32.0 452.0,32.1 452.4,32.2 452.7,32.2 453.1,32.4 453.5,32.6 453.8,32.7 454.2,32.9 454.5,32.9 454.9,32.8 455.3,32.5 455.6,32.1 456.0,31.8 456.3,31.5 456.7,31.4 457.1,31.5 457.4,31.7 457.8,31.9 458.1,32.2 458.5,32.4 458.9,32.5 459.2,32.4 459.6,32.2 459.9,32.0 460.3,31.7 460.7,31.5 461.0,31.4 461.4,31.3 461.7,31.3 462.1,31.2 462.5,31.1 462.8,31.0 463.2,30.9 463.5,31.0 463.9,31.2 464.3,31.5 464.6,31.9 465.0,32.2 465.3,32.3 465.7,32.4 466.1,32.4 466.4,32.3 466.8,32.3 467.1,32.3 467.5,32.3 467.9,32.3 468.2,32.1 468.6,31.9 468.9,31.5 469.3,31.2 469.7,31.0 470.0,31.0 470.4,31.1 470.7,31.2 471.1,31.3 471.5,31.4 471.8,31.5 472.2,31.5 472.5,31.7 472.9,32.0 473.3,32.3 473.6,32.6 474.0,32.8 474.3,32.9 474.7,32.9 475.1,32.9 475.4,33.0 475.8,33.0 476.1,33.0 476.5,33.0 476.9,33.0 477.2,33.0 477.6,33.0 477.9,33.0 478.3,33.0 478.7,33.0 479.0,32.9 479.4,32.5 479.7,32.1 480.1,31.7 480.5,31.3 480.8,31.1 481.2,31.1 481.5,31.1 481.9,31.2 482.3,31.3 482.6,31.3 483.0,31.3 483.3,31.4 483.7,31.6 484.1,32.0 484.4,32.4 484.8,32.7 485.1,32.9 485.5,32.9 485.9,32.7 486.2,32.3 486.6,31.9 486.9,31.6 487.3,31.3 487.7,31.3 488.0,31.2 488.4,31.2 488.7,31.1 489.1,31.0 489.5,30.9 489.8,30.9 490.2,31.0 490.5,31.2 490.9,31.4 491.3,31.5 491.6,31.7 492.0,31.7 492.3,31.8 492.7,31.9 493.1,32.1 493.4,32.3 493.8,32.4 494.1,32.5 494.5,32.4 494.9,32.3 495.2,32.2 495.6,32.1 495.9,32.0 496.3,32.0 496.7,32.0 497.0,32.2 497.4,32.5 497.7,32.7 498.1,32.9 498.5,33.0 498.8,33.0 499.2,33.1 499.5,33.1 499.9,33.2 500.3,33.3 500.6,33.3 501.0,33.2 501.3,32.8 501.7,32.3 502.1,31.7 502.4,31.2 502.8,30.9 503.1,31.0 503.5,31.1 503.9,31.3 504.2,31.4 504.6,31.6 504.9,31.7 505.3,31.7 505.7,31.8 506.0,31.8 506.4,31.9 506.7,32.0 507.1,32.0 507.5,32.0 507.8,31.9 508.2,31.7 508.5,31.4 508.9,31.2 509.3,31.1 509.6,31.0 510.0,31.2 510.3,31.4 510.7,31.7 511.1,32.0 511.4,32.2 511.8,32.3 512.1,32.2 512.5,32.0 512.9,31.7 513.2,31.5 513.6,31.3 513.9,31.2 514.3,31.2 514.7,31.3 515.0,31.3 515.4,31.3 515.7,31.4 516.1,31.4 516.5,31.5 516.8,31.8 517.2,32.1 517.5,32.5 517.9,32.8 518.3,32.9 518.6,32.9 519.0,32.9 519.3,32.9 519.7,32.9 520.1,32.9 520.4,32.9 520.8,32.9 521.1,32.8 521.5,32.8 521.9,32.8 522.2,32.8 522.6,32.8 522.9,32.8 523.3,32.8 523.7,32.9 524.0,32.9 524.4,32.9 524.7,33.0 525.1,33.0 525.5,32.9 525.8,32.7 526.2,32.5 526.5,32.4 526.9,32.3 527.3,32.7 527.6,33.4 528.0,34.1 528.3,34.8 528.7,35.6 529.1,36.4 529.4,37.1 529.8,37.6 530.1,37.9 530.5,38.1 530.9,38.3 531.2,38.5 531.6,38.8 531.9,39.1 532.3,39.4 532.7,39.7 533.0,40.1 533.4,40.4 533.7,40.6 534.1,40.8 534.5,41.0 534.8,41.2 535.2,41.3 535.5,41.6 535.9,41.8 536.3,42.1 536.6,42.4 537.0,42.7 537.3,43.0 537.7,43.3 538.1,43.6 538.4,43.7 538.8,43.9 538.8,44.1 538.4,44.3 538.1,44.4 537.7,44.7 537.3,44.9 537.0,45.2 536.6,45.5 536.3,45.7 535.9,46.0 535.5,46.3 535.2,46.6 534.8,47.0 534.5,47.3 534.1,47.7 533.7,48.0 533.4,48.3 533.0,48.6 532.7,48.8 532.3,49.1 531.9,49.3 531.6,49.6 531.2,49.8 530.9,50.0 530.5,50.1 530.1,50.2 529.8,50.3 529.4,50.8 529.1,51.5 528.7,52.4 528.3,53.2 528.0,54.0 527.6,54.9 527.3,55.6 526.9,56.1 526.5,55.9 526.2,55.7 525.8,55.4 525.5,55.2 525.1,55.1 524.7,55.1 524.4,55.0 524.0,54.9 523.7,54.9 523.3,54.8 522.9,54.7 522.6,54.7 522.2,54.7 521.9,54.8 521.5,54.9 521.1,55.1 520.8,55.1 520.4,55.2 520.1,55.3 519.7,55.5 519.3,55.8 519.0,56.1 518.6,56.3 518.3,56.4 517.9,56.2 517.5,55.9 517.2,55.5 516.8,55.2 516.5,54.9 516.1,54.8 515.7,54.9 515.4,55.1 515.0,55.5 514.7,55.8 514.3,56.1 513.9,56.2 513.6,56.2 513.2,56.2 512.9,56.1 512.5,56.1 512.1,56.0 511.8,56.0 511.4,56.0 511.1,56.0 510.7,56.0 510.3,55.9 510.0,55.9 509.6,55.9 509.3,55.9 508.9,56.0 508.5,56.2 508.2,56.3 507.8,56.4 507.5,56.5 507.1,56.5 506.7,56.5 506.4,56.6 506.0,56.6 505.7,56.6 505.3,56.6 504.9,56.6 504.6,56.4 504.2,55.9 503.9,55.5 503.5,55.0 503.1,54.7 502.8,54.7 502.4,54.8 502.1,55.1 501.7,55.4 501.3,55.6 501.0,55.8 500.6,55.9 500.3,55.9 499.9,56.0 499.5,56.1 499.2,56.2 498.8,56.3 498.5,56.4 498.1,56.3 497.7,56.3 497.4,56.3 497.0,56.3 496.7,56.2 496.3,56.2 495.9,56.2 495.6,56.2 495.2,56.2 494.9,56.2 494.5,56.2 494.1,56.2 493.8,56.2 493.4,56.2 493.1,56.1 492.7,56.1 492.3,56.1 492.0,56.0 491.6,56.1 491.3,56.2 490.9,56.3 490.5,56.5 490.2,56.7 489.8,56.7 489.5,56.7 489.1,56.4 488.7,56.0 488.4,55.6 488.0,55.2 487.7,55.0 487.3,54.9 486.9,55.0 486.6,55.2 486.2,55.3 485.9,55.5 485.5,55.5 485.1,55.6 484.8,55.5 484.4,55.4 484.1,55.2 483.7,55.1 483.3,55.0 483.0,55.0 482.6,55.0 482.3,54.9 481.9,54.9 481.5,54.8 481.2,54.8 480.8,54.7 480.5,54.8 480.1,54.9 479.7,55.0 479.4,55.1 479.0,55.2 478.7,55.2 478.3,55.3 477.9,55.6 477.6,55.8 477.2,56.1 476.9,56.3 476.5,56.4 476.1,56.4 475.8,56.4 475.4,56.4 475.1,56.4 474.7,56.4 474.3,56.4 474.0,56.4 473.6,56.5 473.3,56.6 472.9,56.7 472.5,56.8 472.2,56.9 471.8,56.8 471.5,56.7 471.1,56.5 470.7,56.4 470.4,56.2 470.0,56.1 469.7,56.1 469.3,56.2 468.9,56.4 468.6,56.5 468.2,56.6 467.9,56.7 467.5,56.7 467.1,56.7 466.8,56.7 466.4,56.7 466.1,56.7 465.7,56.7 465.3,56.7 465.0,56.7 464.6,56.7 464.3,56.7 463.9,56.7 463.5,56.7 463.2,56.7 462.8,56.6 462.5,56.5 462.1,56.3 461.7,56.1 461.4,56.0 461.0,55.9 460.7,55.9 460.3,55.9 459.9,55.9 459.6,56.0 459.2,56.0 458.9,56.0 458.5,55.9 458.1,55.7 457.8,55.5 457.4,55.2 457.1,55.1 456.7,55.0 456.3,55.1 456.0,55.4 455.6,55.8 455.3,56.2 454.9,56.5 454.5,56.7 454.2,56.7 453.8,56.6 453.5,56.6 453.1,56.5 452.7,56.5 452.4,56.5 452.0,56.5 451.7,56.4 451.3,56.4 450.9,56.3 450.6,56.3 450.2,56.2 449.9,56.2 449.5,56.3 449.1,56.5 448.8,56.6 448.4,56.8 448.1,56.9 447.7,56.9 447.3,56.9 447.0,56.8 446.6,56.8 446.3,56.8 445.9,56.7 445.5,56.7 445.2,56.5 444.8,56.0 444.5,55.6 444.1,55.1 443.7,54.8 443.4,54.8 443.0,55.0 442.7,55.3 442.3,55.6 441.9,56.0 441.6,56.2 441.2,56.3 440.9,56.3 440.5,56.3 440.1,56.4 439.8,56.4 439.4,56.4 439.1,56.5 438.7,56.3 438.3,56.1 438.0,55.7 437.6,55.4 437.3,55.1 436.9,55.0 436.5,55.2 436.2,55.6 435.8,56.0 435.5,56.5 435.1,56.9 434.7,57.1 434.4,57.0 434.0,56.7 433.7,56.4 433.3,56.0 432.9,55.6 432.6,55.5 432.2,55.5 431.9,55.5 431.5,55.5 431.1,55.6 430.8,55.6 430.4,55.6 430.1,55.7 429.7,55.9 429.3,56.1 429.0,56.4 428.6,56.7 428.3,56.8 427.9,56.8 427.5,56.8 427.2,56.7 426.8,56.6 426.5,56.5 426.1,56.4 425.7,56.4 425.4,56.4 425.0,56.4 424.7,56.4 424.3,56.3 423.9,56.3 423.6,56.3 423.2,56.3 422.9,56.4 422.5,56.4 422.1,56.5 421.8,56.5 421.4,56.5 421.1,56.5 420.7,56.4 420.3,56.2 420.0,56.1 419.6,56.0 419.3,56.0 418.9,56.0 418.5,56.0 418.2,56.0 417.8,56.1 417.5,56.1 417.1,56.1 416.7,56.0 416.4,55.9 416.0,55.7 415.7,55.5 415.3,55.3 414.9,55.2 414.6,55.2 414.2,55.3 413.9,55.3 413.5,55.3 413.1,55.4 412.8,55.4 412.4,55.4 412.1,55.2 411.7,55.1 411.3,54.9 411.0,54.8 410.6,54.7 410.3,54.7 409.9,54.7 409.5,54.7 409.2,54.7 408.8,54.7 408.5,54.7 408.1,54.8 407.7,54.9 407.4,55.1 407.0,55.3 406.7,55.5 406.3,55.6 405.9,55.6 405.6,55.5 405.2,55.3 404.9,55.1 404.5,55.0 404.1,54.9 403.8,54.8 403.4,54.9 403.1,55.0 402.7,55.1 402.3,55.2 402.0,55.2 401.6,55.3 401.3,55.2 400.9,55.1 400.5,54.9 400.2,54.8 399.8,54.7 399.5,54.6 399.1,54.7 398.7,55.0 398.4,55.2 398.0,55.5 397.7,55.8 397.3,55.8 396.9,55.8 396.6,55.6 396.2,55.5 395.9,55.3 395.5,55.2 395.1,55.1 394.8,55.1 394.4,55.3 394.1,55.4 393.7,55.6 393.3,55.7 393.0,55.8 392.6,55.8 392.3,55.8 391.9,55.8 391.5,55.8 391.2,55.4 390.8,54.9 390.5,54.4 390.1,53.9 389.7,53.3 389.4,52.8 389.0,52.2 388.7,51.7 388.3,50.9 387.9,49.8 387.6,48.8 387.2,47.7 386.9,46.9 386.5,46.6 386.1,46.4 385.8,46.1 385.4,45.9 385.1,46.0 384.7,46.3 384.3,46.6 384.0,46.9 383.6,47.2 383.3,47.6 382.9,48.2 382.5,48.8 382.2,49.4 381.8,49.9 381.5,50.6 381.1,51.2 380.7,52.0 380.4,52.7 380.0,53.4 379.7,53.5 379.3,53.5 378.9,53.3 378.6,53.1 378.2,52.8 377.9,52.7 377.5,52.6 377.1,52.7 376.8,52.8 376.4,52.9 376.1,53.1 375.7,53.2 375.3,53.2 375.0,53.3 374.6,53.4 374.3,53.6 373.9,53.8 373.5,53.9 373.2,54.0 372.8,54.0 372.5,54.0 372.1,54.0 371.7,54.0 371.4,54.0 371.0,54.0 370.7,54.0 370.3,53.8 369.9,53.5 369.6,53.1 369.2,52.9 368.9,52.7 368.5,52.7 368.1,52.7 367.8,52.8 367.4,52.9 367.1,53.0 366.7,53.0 366.3,53.0 366.0,52.9 365.6,52.8 365.3,52.7 364.9,52.6 364.5,52.5 364.2,52.5 363.8,52.5 363.5,52.7 363.1,52.8 362.7,52.9 362.4,53.0 362.0,53.0 361.7,53.0 361.3,52.9 360.9,52.9 360.6,52.8 360.2,52.7 359.9,52.7 359.5,52.7 359.1,52.7 358.8,52.7 358.4,52.7 358.1,52.6 357.7,52.6 357.3,52.6 357.0,52.6 356.6,52.7 356.3,52.7 355.9,52.7 355.5,52.7 355.2,52.7 354.8,52.9 354.5,53.0 354.1,53.2 353.7,53.4 353.4,53.4 353.0,53.5 352.7,53.5 352.3,53.6 351.9,53.7 351.6,53.8 351.2,53.8 350.9,53.8 350.5,53.8 350.1,53.8 349.8,53.8 349.4,53.8 349.1,53.8 348.7,53.7 348.3,53.5 348.0,53.2 347.6,52.9 347.3,52.6 346.9,52.4 346.5,52.3 346.2,52.4 345.8,52.4 345.5,52.5 345.1,53.1 344.7,53.7 344.4,54.2 344.0,54.8 343.7,55.4 343.3,55.7 342.9,55.8 342.6,55.8 342.2,55.8 341.9,56.0 341.5,56.2 341.1,56.5 340.8,56.8 340.4,57.0 340.1,57.1 339.7,57.0 339.3,56.6 339.0,56.2 338.6,55.8 338.3,55.5 337.9,55.4 337.5,55.4 337.2,55.4 336.8,55.4 336.5,55.5 336.1,55.5 335.7,55.5 335.4,55.5 335.0,55.5 334.7,55.4 334.3,55.4 333.9,55.3 333.6,55.3 333.2,55.4 332.9,55.5 332.5,55.7 332.1,55.8 331.8,56.0 331.4,56.1 331.1,56.1 330.7,56.1 330.3,56.1 330.0,56.2 329.6,56.2 329.3,56.2 328.9,56.2 328.5,56.3 328.2,56.5 327.8,56.6 327.5,56.7 327.1,56.8 326.7,56.8 326.4,56.9 326.0,56.9 325.7,56.9 325.3,57.0 324.9,57.0 324.6,57.0 324.2,57.1 323.9,57.1 323.5,57.2 323.1,57.3 322.8,57.3 322.4,57.3 322.1,57.2 321.7,57.0 321.3,56.7 321.0,56.4 320.6,56.1 320.3,56.1 319.9,56.2 319.5,56.5 319.2,56.9 318.8,57.3 318.5,57.6 318.1,57.7 317.7,57.7 317.4,57.5 317.0,57.4 316.7,57.2 316.3,57.0 315.9,57.0 315.6,56.9 315.2,56.9 314.9,56.8 314.5,56.6 314.1,56.5 313.8,56.5 313.4,56.4 313.1,56.4 312.7,56.3 312.3,56.2 312.0,56.2 311.6,56.1 311.3,56.1 310.9,56.3 310.5,56.5 310.2,56.8 309.8,57.0 309.5,57.2 309.1,57.1 308.7,57.0 308.4,56.8 308.0,56.6 307.7,56.4 307.3,56.2 306.9,56.2 306.6,56.2 306.2,56.1 305.9,56.1 305.5,56.0 305.1,56.0 304.8,56.0 304.4,56.1 304.1,56.3 303.7,56.5 303.3,56.7 303.0,56.8 302.6,56.8 302.3,56.6 301.9,56.3 301.5,55.8 301.2,55.5 300.8,55.3 300.5,55.2 300.1,55.5 299.7,56.0 299.4,56.4 299.0,56.2 298.7,56.0 298.3,55.5 297.9,54.8 297.6,54.0 297.2,53.6 296.9,53.4 296.5,53.2 296.1,53.1 295.8,53.0 295.4,52.9 295.1,52.8 294.7,52.6 294.3,52.5 294.0,52.4 293.6,52.4 293.3,52.5 292.9,52.6 292.5,52.8 292.2,52.9 291.8,52.9 291.5,52.9 291.1,53.0 290.7,53.0 290.4,53.1 290.0,53.1 289.7,53.1 289.3,53.1 288.9,52.9 288.6,52.6 288.2,52.2 287.9,51.9 287.5,51.6 287.1,51.5 286.8,51.5 286.4,51.6 286.1,51.6 285.7,51.7 285.3,51.7 285.0,51.7 284.6,51.6 284.3,51.5 283.9,51.4 283.5,51.3 283.2,51.2 282.8,51.1 282.5,51.1 282.1,51.2 281.7,51.3 281.4,51.4 281.0,51.5 280.7,51.4 280.3,51.4 279.9,51.3 279.6,51.3 279.2,51.2 278.9,51.1 278.5,51.1 278.1,51.1 277.8,51.2 277.4,51.3 277.1,51.4 276.7,51.5 276.3,51.5 276.0,51.4 275.6,51.4 275.3,51.3 274.9,51.2 274.5,51.1 274.2,51.1 273.8,51.1 273.5,51.2 273.1,51.3 272.7,51.5 272.4,51.6 272.0,51.6 271.7,51.6 271.3,51.5 270.9,51.3 270.6,51.1 270.2,50.9 269.9,50.8 269.5,50.8 269.1,50.7 268.8,50.7 268.4,50.7 268.1,50.7 267.7,50.6 267.3,50.6 267.0,50.6 266.6,50.5 266.3,50.4 265.9,50.4 265.5,50.3 265.2,50.3 264.8,50.3 264.5,50.2 264.1,50.1 263.7,50.1 263.4,50.0 263.0,50.0 262.7,50.0 262.3,50.0 261.9,50.0 261.6,50.1 261.2,50.1 260.9,50.1 260.5,50.1 260.1,50.0 259.8,50.0 259.4,50.0 259.1,49.9 258.7,49.9 258.3,49.9 258.0,49.9 257.6,50.0 257.3,50.0 256.9,50.0 256.5,50.0 256.2,50.0 255.8,50.1 255.5,50.1 255.1,50.2 254.7,50.3 254.4,50.3 254.0,50.3 253.7,50.2 253.3,49.9 252.9,49.6 252.6,49.3 252.2,49.0 251.9,48.8 251.5,48.6 251.1,48.6 250.8,48.7 250.4,48.7 250.1,48.7 249.7,48.7 249.3,48.8 249.0,48.9 248.6,49.0 248.3,49.2 247.9,49.2 247.5,49.2 247.2,49.2 246.8,49.1 246.5,49.0 246.1,48.9 245.7,48.8 245.4,48.8 245.0,48.7 244.7,48.7 244.3,48.6 243.9,48.5 243.6,48.5 243.2,48.5 242.9,48.5 242.5,48.5 242.1,48.5 241.8,48.5 241.4,48.5 241.1,48.5 240.7,48.5 240.3,48.6 240.0,48.6 239.6,48.7 239.3,48.8 238.9,48.8 238.5,48.7 238.2,48.6 237.8,48.4 237.5,48.2 237.1,48.1 236.7,48.1 236.4,48.1 236.0,48.3 235.7,48.4 235.3,48.6 234.9,48.8 234.6,48.9 234.2,48.8 233.9,48.7 233.5,48.6 233.1,48.4 232.8,48.3 232.4,48.2 232.1,48.2 231.7,48.3 231.3,48.5 231.0,48.7 230.6,48.8 230.3,48.9 229.9,49.0 229.5,48.9 229.2,48.9 228.8,48.9 228.5,48.9 228.1,48.9 227.7,48.9 227.4,48.9 227.0,49.0 226.7,49.1 226.3,49.2 225.9,49.2 225.6,49.2 225.2,49.2 224.9,49.0 224.5,48.8 224.1,48.7 223.8,48.5 223.4,48.5 223.1,48.6 222.7,48.7 222.3,48.8 222.0,48.9 221.6,49.0 221.3,49.1 220.9,49.1 220.5,49.2 220.2,49.3 219.8,49.4 219.5,49.5 219.1,49.6 218.7,49.5 218.4,49.4 218.0,49.3 217.7,49.2 217.3,49.1 216.9,49.0 216.6,49.1 216.2,49.1 215.9,49.2 215.5,49.3 215.1,49.4 214.8,49.5 214.4,49.6 214.1,49.9 213.7,50.1 213.3,50.4 213.0,50.7 212.6,50.9 212.3,51.0 211.9,51.1 211.5,51.1 211.2,51.2 210.8,51.2 210.5,51.3 210.1,51.4 209.7,51.6 209.4,51.8 209.0,52.0 208.7,52.2 208.3,52.5 207.9,52.7 207.6,52.8 207.2,52.8 206.9,52.8 206.5,53.0 206.1,53.3 205.8,53.7 205.4,54.2 205.1,54.2 204.7,54.3 204.3,54.4 204.0,54.4 203.6,54.4 203.3,54.6 202.9,54.8 202.5,55.2 202.2,55.5 201.8,55.7 201.5,55.8 201.1,55.8 200.7,55.8 200.4,55.9 200.0,56.0 199.7,56.0 199.3,56.0 198.9,56.0 198.6,55.8 198.2,55.5 197.9,55.2 197.5,55.0 197.1,55.0 196.8,54.9 196.4,54.8 196.1,54.7 195.7,54.5 195.3,54.4 195.0,54.3 194.6,54.3 194.3,54.4 193.9,54.5 193.5,54.6 193.2,54.6 192.8,54.7 192.5,54.7 192.1,54.9 191.7,55.2 191.4,55.5 191.0,55.8 190.7,55.9 190.3,55.9 189.9,55.7 189.6,55.3 189.2,54.9 188.9,54.5 188.5,54.3 188.1,54.3 187.8,54.4 187.4,54.5 187.1,54.6 186.7,54.8 186.3,54.9 186.0,54.9 185.6,54.9 185.3,54.8 184.9,54.7 184.5,54.7 184.2,54.6 183.8,54.6 183.5,54.8 183.1,55.2 182.7,55.7 182.4,56.2 182.0,56.5 181.7,56.7 181.3,56.6 180.9,56.5 180.6,56.4 180.2,56.3 179.9,56.3 179.5,56.2 179.1,56.3 178.8,56.4 178.4,56.5 178.1,56.6 177.7,56.7 177.3,56.7 177.0,56.6 176.6,56.2 176.3,55.7 175.9,55.2 175.5,54.8 175.2,54.5 174.8,54.6 174.5,54.8 174.1,55.0 173.7,55.3 173.4,55.5 173.0,55.6 172.7,55.6 172.3,55.7 171.9,55.8 171.6,55.8 171.2,55.9 170.9,55.9 170.5,55.9 170.1,55.8 169.8,55.7 169.4,55.5 169.1,55.3 168.7,55.3 168.3,55.2 168.0,55.1 167.6,55.0 167.3,54.8 166.9,54.6 166.5,54.5 166.2,54.5 165.8,54.6 165.5,54.8 165.1,55.1 164.7,55.3 164.4,55.5 164.0,55.5 163.7,55.6 163.3,55.6 162.9,55.7 162.6,55.8 162.2,55.8 161.9,55.8 161.5,55.7 161.1,55.5 160.8,55.2 160.4,55.0 160.1,54.8 159.7,54.7 159.3,54.8 159.0,55.2 158.6,55.6 158.3,56.0 157.9,56.3 157.5,56.5 157.2,56.4 156.8,56.3 156.5,56.0 156.1,55.8 155.7,55.6 155.4,55.5 155.0,55.5 154.7,55.5 154.3,55.4 153.9,55.3 153.6,55.3 153.2,55.2 152.9,55.2 152.5,55.3 152.1,55.4 151.8,55.5 151.4,55.6 151.1,55.6 150.7,55.6 150.3,55.7 150.0,55.8 149.6,55.9 149.3,56.0 148.9,56.1 148.5,56.1 148.2,56.1 147.8,56.0 147.5,56.0 147.1,55.9 146.7,55.9 146.4,55.9 146.0,55.8 145.7,55.7 145.3,55.5 144.9,55.4 144.6,55.3 144.2,55.2 143.9,55.4 143.5,55.8 143.1,56.2 142.8,56.5 142.4,56.8 142.1,56.9 141.7,57.0 141.3,57.0 141.0,57.1 140.6,57.2 140.3,57.3 139.9,57.3 139.5,57.2 139.2,57.0 138.8,56.7 138.5,56.4 138.1,56.2 137.7,56.1 137.4,56.1 137.0,56.0 136.7,56.0 136.3,55.9 135.9,55.9 135.6,55.8 135.2,55.9 134.9,56.1 134.5,56.4 134.1,56.8 133.8,57.1 133.4,57.2 133.1,57.2 132.7,56.9 132.3,56.5 132.0,56.0 131.6,55.7 131.3,55.4 130.9,55.4 130.5,55.7 130.2,56.1 129.8,56.6 129.5,57.0 129.1,57.2 128.7,57.3 128.4,57.2 128.0,57.2 127.7,57.1 127.3,57.1 126.9,57.1 126.6,57.0 126.2,56.8 125.9,56.5 125.5,56.0 125.1,55.6 124.8,55.3 124.4,55.2 124.1,55.3 123.7,55.6 123.3,55.9 123.0,56.2 122.6,56.4 122.3,56.5 121.9,56.5 121.5,56.5 121.2,56.6 120.8,56.6 120.5,56.6 120.1,56.6 119.7,56.5 119.4,56.3 119.0,56.0 118.7,55.6 118.3,55.3 117.9,55.2 117.6,55.3 117.2,55.7 116.9,56.1 116.5,56.5 116.1,56.9 115.8,51.9 115.4,47.3 115.1,47.2 114.7,47.1 114.3,47.2 114.0,47.3 113.6,47.5 113.3,47.7 112.9,47.8 112.5,48.0 112.2,48.5 111.8,49.0 111.5,49.5 111.1,50.0 110.7,50.0 110.4,49.8 110.0,49.6 109.7,49.4 109.3,49.3 108.9,49.3 108.6,49.3 108.2,49.2 107.9,49.1 107.5,49.1 107.1,48.9 106.8,48.8 106.4,48.7 106.1,48.5 105.7,48.9 105.3,49.3 105.0,49.8 104.6,50.3 104.3,50.9 103.9,51.5 103.5,52.2 103.2,52.6 102.8,53.0 102.5,53.3 102.1,53.5 101.7,53.6 101.4,53.6 101.0,53.4 100.7,53.2 100.3,53.1 99.9,53.1 99.6,53.0 99.2,53.0 98.9,52.9 98.5,52.9 98.1,52.8 97.8,52.9 97.4,53.1 97.1,53.4 96.7,53.7 96.3,53.9 96.0,54.0 95.6,54.0 95.3,54.0 94.9,54.0 94.5,54.0 94.2,54.0 93.8,54.0 93.5,53.9 93.1,53.8 92.7,53.6 92.4,53.4 92.0,53.2 91.7,53.1 91.3,53.0 90.9,52.9 90.6,52.7 90.2,52.6 89.9,52.4 89.5,52.3 89.1,52.3 88.8,52.4 88.4,52.7 88.1,52.9 87.7,53.2 87.3,53.3 87.0,53.3 86.6,53.3 86.3,53.3 85.9,53.2 85.5,53.1 85.2,53.1 84.8,53.1 84.5,53.0 84.1,52.9 83.7,52.8 83.4,52.7 83.0,52.6 82.7,52.6 82.3,52.6 81.9,52.6 81.6,52.7 81.2,52.8 80.9,52.8 80.5,52.8 80.1,52.8 79.8,52.6 79.4,52.4 79.1,52.3 78.7,52.1 78.3,52.1 78.0,52.1 77.6,52.1 77.3,52.1 76.9,52.2 76.5,52.2 76.2,52.2 75.8,52.2 75.5,52.2 75.1,52.2 74.7,52.1 74.4,52.1 74.0,52.1 73.7,52.1 73.3,52.2 72.9,52.3 72.6,52.4 72.2,52.5 71.9,52.5 71.5,52.5 71.1,52.5 70.8,52.4 70.4,52.4 70.1,52.3 69.7,52.3 69.3,52.3 69.0,52.2 68.6,52.2 68.3,52.2 67.9,52.1 67.5,52.1 67.2,52.1 66.8,52.1 66.5,52.1 66.1,52.1 65.7,52.2 65.4,52.2 65.0,52.2 64.7,52.1 64.3,52.1 63.9,52.0 63.6,51.9 63.2,51.9 62.9,51.8 62.5,51.9 62.1,52.0 61.8,52.2 61.4,52.4 61.1,52.5 60.7,52.6 60.3,52.5 60.0,52.5 59.6,52.4 59.3,52.3 58.9,52.3 58.5,52.3 58.2,52.2 57.8,52.2 57.5,52.1 57.1,52.0 56.7,51.9 56.4,51.9 56.0,51.9 55.7,51.9 55.3,51.9 54.9,51.8 54.6,51.8 54.2,51.8 53.9,51.8 53.5,51.9 53.1,51.9 52.8,52.0 52.4,52.1 52.1,52.2 51.7,52.2 51.3,52.0 51.0,51.9 50.6,51.7 50.3,51.5 49.9,51.4 49.5,51.3 49.2,51.3 48.8,51.3 48.5,51.3 48.1,51.3 47.7,51.3 47.4,51.3 47.0,51.3 46.7,51.4 46.3,51.6 45.9,51.7 45.6,51.8 45.2,51.8 44.9,51.7 44.5,51.6 44.1,51.4 43.8,51.2 43.4,51.0 43.1,51.0 42.7,51.1 42.3,51.3 42.0,51.5 41.6,51.7 41.3,51.9 40.9,52.0 40.5,51.9 40.2,51.8 39.8,51.7 39.5,51.6 39.1,51.6 38.7,51.5 38.4,51.5 38.0,51.5 37.7,51.4 37.3,51.4 36.9,51.4 36.6,51.4 36.2,51.3 35.9,51.3 35.5,51.2 35.1,51.1 34.8,51.1 34.4,51.1 34.1,51.1 33.7,51.2 33.3,51.3 33.0,51.4 32.6,51.5 32.3,51.5 31.9,51.6 31.5,51.6 31.2,51.7 30.8,51.8 30.5,51.8 30.1,51.9 29.7,51.9 29.4,51.9 29.0,51.8 28.7,51.7 28.3,51.7 27.9,51.6 27.6,51.6 27.2,51.6 26.9,51.6 26.5,51.7 26.1,51.8 25.8,51.9 25.4,52.1 25.1,52.3 24.7,52.7 24.3,53.1 24.0,52.5 23.6,50.0 23.3,49.0 22.9,48.9 22.5,48.7 22.2,48.4 21.8,48.2 21.5,48.0 21.1,48.0 20.7,48.1 20.4,48.1 20.0,48.2 19.7,48.3 19.3,48.4 18.9,48.4 18.6,48.5 18.2,48.5 17.9,48.4 17.5,48.4 17.1,48.4 16.8,48.3 16.4,48.2 16.1,48.0 15.7,47.9 15.3,47.7 15.0,47.6 14.6,47.6 14.3,47.6 13.9,47.6 13.5,47.7 13.2,47.8 12.8,47.8 12.5,47.9 12.1,47.9 11.7,47.8 11.4,47.8 11.0,47.8 10.7,47.8 10.3,47.8 9.9,47.8 9.6,47.7 9.2,47.7 8.9,47.7 8.5,47.7 8.1,47.6 7.8,47.6 7.4,47.6 7.1,47.7 6.7,47.7 6.3,47.7 6.0,47.8 5.6,47.8 5.3,47.7 4.9,47.6 4.5,47.5 4.2,47.4 3.8,47.3 3.5,47.3 3.1,47.3 2.7,47.3 2.4,47.4 2.0,47.4 1.7,47.4 1.3,47.4" fill="#4559c8"/>
<rect x="21.75" y="1.5" width="1.7" height="83.8" fill="#17181c"/>
<rect x="67.75" y="1.5" width="1.7" height="83.8" fill="#17181c"/>
<rect x="113.75" y="1.5" width="1.7" height="83.8" fill="#17181c"/>
<rect x="159.75" y="1.5" width="1.7" height="83.8" fill="#17181c"/>
<rect x="205.75" y="1.5" width="1.7" height="83.8" fill="#17181c"/>
<rect x="251.75" y="1.5" width="1.7" height="83.8" fill="#17181c"/>
<rect x="297.75" y="1.5" width="1.7" height="83.8" fill="#17181c"/>
<rect x="343.75" y="1.5" width="1.7" height="83.8" fill="#17181c"/>
<rect x="389.75" y="1.5" width="1.7" height="83.8" fill="#17181c"/>
<rect x="435.75" y="1.5" width="1.7" height="83.8" fill="#17181c"/>
<rect x="481.75" y="1.5" width="1.7" height="83.8" fill="#17181c"/>
<rect x="527.75" y="1.5" width="1.7" height="83.8" fill="#17181c"/></svg>
</div>

<!-- stems -->
<div class="abs" style="left:8px;top:224.2px;width:72px;height:1.8px;background:#18191d"></div><div class="lrow" style="top:226px"><div class="m">M</div><div class="sl"></div><div class="kn"></div></div>
<div class="stem" style="top:226px;transform:translateY(0.00px)"><i style="left:21.0px"></i><i style="left:67.0px"></i><i style="left:113.0px"></i><i style="left:159.0px"></i><i style="left:205.0px"></i><i style="left:251.0px"></i><i style="left:297.0px"></i><i style="left:343.0px"></i><i style="left:389.0px"></i><i style="left:435.0px"></i><i style="left:481.0px"></i><i style="left:527.0px"></i><svg width="552" height="42" viewBox="0 0 552 42" fill="#4559c8"><polygon points="1.3,22.4 1.8,22.1 2.3,21.9 2.8,22.0 3.3,22.0 3.8,22.1 4.3,22.0 4.8,22.0 5.3,21.9 5.8,22.0 6.3,22.0 6.8,21.9 7.3,22.0 7.8,22.1 8.3,22.0 8.8,21.9 9.3,22.0 9.8,22.1 10.3,22.1 10.8,22.0 11.3,22.0 11.8,22.0 12.3,22.0 12.8,22.0 13.3,21.9 13.8,21.9 14.3,22.0 14.8,22.0 15.3,22.1 15.8,22.0 16.3,21.9 16.8,22.0 17.3,21.9 17.8,22.0 18.3,22.0 18.8,22.0 19.3,21.9 19.8,22.0 20.3,21.9 20.8,21.9 21.3,21.9 21.8,22.1 22.3,22.3 22.3,22.9 21.8,23.2 21.3,23.2 20.8,23.3 20.3,23.3 19.8,23.2 19.3,23.3 18.8,23.2 18.3,23.2 17.8,23.3 17.3,23.3 16.8,23.2 16.3,23.3 15.8,23.2 15.3,23.2 14.8,23.2 14.3,23.2 13.8,23.3 13.3,23.3 12.8,23.2 12.3,23.2 11.8,23.3 11.3,23.2 10.8,23.2 10.3,23.1 9.8,23.1 9.3,23.2 8.8,23.2 8.3,23.2 7.8,23.1 7.3,23.2 6.8,23.3 6.3,23.3 5.8,23.1 5.3,23.2 4.8,23.2 4.3,23.2 3.8,23.1 3.3,23.2 2.8,23.2 2.3,23.2 1.8,23.0 1.3,22.8"/>
<polygon points="22.9,22.3 23.4,19.0 23.9,20.2 24.4,21.5 24.9,22.3 25.4,22.3 25.9,22.3 26.4,22.3 26.9,22.3 27.4,22.3 27.9,19.7 28.4,20.2 28.9,20.6 29.4,21.1 29.9,21.7 30.4,22.3 30.9,19.9 31.4,20.3 31.9,20.8 32.4,21.4 32.9,22.0 33.4,22.3 33.9,20.0 34.4,20.5 34.9,20.9 35.4,21.4 35.9,22.0 36.4,22.3 36.9,22.3 37.4,22.3 37.9,22.3 38.4,22.3 38.9,22.3 39.4,19.7 39.9,20.1 40.4,20.5 40.9,20.9 41.4,21.3 41.9,21.7 42.4,22.3 42.9,22.3 43.4,22.3 43.9,22.3 44.4,22.3 44.9,22.3 45.4,22.3 45.9,19.4 46.4,20.6 46.9,22.1 47.4,20.2 47.9,20.6 48.4,21.0 48.9,21.5 49.4,22.0 49.9,22.3 50.4,22.3 50.9,22.3 51.4,22.3 51.9,19.9 52.4,20.3 52.9,20.8 53.4,21.4 53.9,22.0 54.4,19.7 54.9,20.2 55.4,20.6 55.9,21.1 56.4,21.7 56.9,22.3 57.4,19.9 57.9,20.3 58.4,20.7 58.9,21.2 59.4,21.8 59.9,22.3 60.4,22.3 60.9,22.3 61.4,22.3 61.9,22.3 62.4,19.7 62.9,20.1 63.4,20.5 63.9,20.9 64.4,21.3 64.9,21.7 65.4,22.3 65.9,22.3 66.4,20.3 66.9,20.7 67.4,21.2 67.9,21.7 68.4,22.3 68.4,22.9 67.9,23.5 67.4,24.0 66.9,24.5 66.4,24.9 65.9,22.9 65.4,22.9 64.9,23.5 64.4,23.9 63.9,24.3 63.4,24.7 62.9,25.1 62.4,25.5 61.9,22.9 61.4,22.9 60.9,22.9 60.4,22.9 59.9,22.9 59.4,23.4 58.9,24.0 58.4,24.5 57.9,24.9 57.4,25.3 56.9,22.9 56.4,23.5 55.9,24.1 55.4,24.6 54.9,25.0 54.4,25.5 53.9,23.2 53.4,23.8 52.9,24.4 52.4,24.9 51.9,25.3 51.4,22.9 50.9,22.9 50.4,22.9 49.9,22.9 49.4,23.2 48.9,23.7 48.4,24.2 47.9,24.6 47.4,25.0 46.9,23.1 46.4,24.6 45.9,25.8 45.4,22.9 44.9,22.9 44.4,22.9 43.9,22.9 43.4,22.9 42.9,22.9 42.4,22.9 41.9,23.5 41.4,23.9 40.9,24.3 40.4,24.7 39.9,25.1 39.4,25.5 38.9,22.9 38.4,22.9 37.9,22.9 37.4,22.9 36.9,22.9 36.4,22.9 35.9,23.2 35.4,23.8 34.9,24.3 34.4,24.7 33.9,25.2 33.4,22.9 32.9,23.2 32.4,23.8 31.9,24.4 31.4,24.9 30.9,25.3 30.4,22.9 29.9,23.5 29.4,24.1 28.9,24.6 28.4,25.0 27.9,25.5 27.4,22.9 26.9,22.9 26.4,22.9 25.9,22.9 25.4,22.9 24.9,22.9 24.4,23.7 23.9,25.0 23.4,26.2 22.9,22.9"/>
<polygon points="68.5,21.3 69.0,21.4 69.5,21.5 70.0,21.7 70.5,21.8 71.0,22.0 71.5,22.2 72.0,22.4 72.5,22.3 73.0,22.3 73.5,22.3 74.0,22.3 74.5,21.3 75.0,21.4 75.5,21.6 76.0,21.7 76.5,21.8 77.0,22.0 77.5,22.2 78.0,22.5 78.5,22.3 79.0,22.3 79.5,22.3 80.0,22.3 80.5,21.3 81.0,21.5 81.5,21.6 82.0,21.7 82.5,21.9 83.0,22.0 83.5,22.3 84.0,22.3 84.5,22.3 85.0,22.3 85.5,22.3 86.0,22.3 86.5,21.4 87.0,21.5 87.5,21.6 88.0,21.7 88.5,21.9 89.0,22.1 89.5,22.3 90.0,22.3 90.5,22.3 91.0,22.3 91.5,22.3 92.0,22.3 92.5,21.4 93.0,21.5 93.5,21.6 94.0,21.8 94.5,21.9 95.0,22.1 95.5,22.4 96.0,22.3 96.5,22.3 97.0,22.3 97.5,22.3 98.0,22.3 98.5,21.4 99.0,21.5 99.5,21.7 100.0,21.8 100.5,22.0 101.0,22.2 101.5,22.4 102.0,22.3 102.5,22.3 103.0,22.3 103.5,22.3 104.0,21.3 104.5,21.4 105.0,21.6 105.5,21.7 106.0,21.8 106.5,22.0 107.0,22.2 107.5,22.5 108.0,22.3 108.5,22.3 109.0,22.3 109.5,22.3 110.0,21.3 110.5,21.5 111.0,21.6 111.5,21.7 112.0,21.9 112.5,22.0 113.0,22.3 113.5,22.3 114.0,22.3 114.5,22.3 114.5,22.9 114.0,22.9 113.5,22.9 113.0,22.9 112.5,23.2 112.0,23.3 111.5,23.5 111.0,23.6 110.5,23.7 110.0,23.9 109.5,22.9 109.0,22.9 108.5,22.9 108.0,22.9 107.5,22.7 107.0,23.0 106.5,23.2 106.0,23.4 105.5,23.5 105.0,23.6 104.5,23.8 104.0,23.9 103.5,22.9 103.0,22.9 102.5,22.9 102.0,22.9 101.5,22.8 101.0,23.0 100.5,23.2 100.0,23.4 99.5,23.5 99.0,23.7 98.5,23.8 98.0,22.9 97.5,22.9 97.0,22.9 96.5,22.9 96.0,22.9 95.5,22.8 95.0,23.1 94.5,23.3 94.0,23.4 93.5,23.6 93.0,23.7 92.5,23.8 92.0,22.9 91.5,22.9 91.0,22.9 90.5,22.9 90.0,22.9 89.5,22.9 89.0,23.1 88.5,23.3 88.0,23.5 87.5,23.6 87.0,23.7 86.5,23.8 86.0,22.9 85.5,22.9 85.0,22.9 84.5,22.9 84.0,22.9 83.5,22.9 83.0,23.2 82.5,23.3 82.0,23.5 81.5,23.6 81.0,23.7 80.5,23.9 80.0,22.9 79.5,22.9 79.0,22.9 78.5,22.9 78.0,22.7 77.5,23.0 77.0,23.2 76.5,23.4 76.0,23.5 75.5,23.6 75.0,23.8 74.5,23.9 74.0,22.9 73.5,22.9 73.0,22.9 72.5,22.9 72.0,22.8 71.5,23.0 71.0,23.2 70.5,23.4 70.0,23.5 69.5,23.7 69.0,23.8 68.5,23.9"/>
<polygon points="114.9,22.3 115.4,19.0 115.9,20.2 116.4,21.5 116.9,22.3 117.4,22.3 117.9,22.3 118.4,22.3 118.9,22.3 119.4,22.3 119.9,19.7 120.4,20.2 120.9,20.6 121.4,21.1 121.9,21.7 122.4,22.3 122.9,19.9 123.4,20.3 123.9,20.8 124.4,21.4 124.9,22.0 125.4,22.3 125.9,20.0 126.4,20.5 126.9,20.9 127.4,21.4 127.9,22.0 128.4,22.3 128.9,22.3 129.4,22.3 129.9,22.3 130.4,22.3 130.9,22.3 131.4,19.7 131.9,20.1 132.4,20.5 132.9,20.9 133.4,21.3 133.9,21.7 134.4,22.3 134.9,22.3 135.4,22.3 135.9,22.3 136.4,22.3 136.9,22.3 137.4,22.3 137.9,19.4 138.4,20.6 138.9,22.1 139.4,20.2 139.9,20.6 140.4,21.0 140.9,21.5 141.4,22.0 141.9,22.3 142.4,22.3 142.9,22.3 143.4,22.3 143.9,19.9 144.4,20.3 144.9,20.8 145.4,21.4 145.9,22.0 146.4,19.7 146.9,20.2 147.4,20.6 147.9,21.1 148.4,21.7 148.9,22.3 149.4,19.9 149.9,20.3 150.4,20.7 150.9,21.2 151.4,21.8 151.9,22.3 152.4,22.3 152.9,22.3 153.4,22.3 153.9,22.3 154.4,19.7 154.9,20.1 155.4,20.5 155.9,20.9 156.4,21.3 156.9,21.7 157.4,22.3 157.9,22.3 158.4,20.3 158.9,20.7 159.4,21.2 159.9,21.7 160.4,22.3 160.9,22.3 160.9,22.9 160.4,22.9 159.9,23.5 159.4,24.0 158.9,24.5 158.4,24.9 157.9,22.9 157.4,22.9 156.9,23.5 156.4,23.9 155.9,24.3 155.4,24.7 154.9,25.1 154.4,25.5 153.9,22.9 153.4,22.9 152.9,22.9 152.4,22.9 151.9,22.9 151.4,23.4 150.9,24.0 150.4,24.5 149.9,24.9 149.4,25.3 148.9,22.9 148.4,23.5 147.9,24.1 147.4,24.6 146.9,25.0 146.4,25.5 145.9,23.2 145.4,23.8 144.9,24.4 144.4,24.9 143.9,25.3 143.4,22.9 142.9,22.9 142.4,22.9 141.9,22.9 141.4,23.2 140.9,23.7 140.4,24.2 139.9,24.6 139.4,25.0 138.9,23.1 138.4,24.6 137.9,25.8 137.4,22.9 136.9,22.9 136.4,22.9 135.9,22.9 135.4,22.9 134.9,22.9 134.4,22.9 133.9,23.5 133.4,23.9 132.9,24.3 132.4,24.7 131.9,25.1 131.4,25.5 130.9,22.9 130.4,22.9 129.9,22.9 129.4,22.9 128.9,22.9 128.4,22.9 127.9,23.2 127.4,23.8 126.9,24.3 126.4,24.7 125.9,25.2 125.4,22.9 124.9,23.2 124.4,23.8 123.9,24.4 123.4,24.9 122.9,25.3 122.4,22.9 121.9,23.5 121.4,24.1 120.9,24.6 120.4,25.0 119.9,25.5 119.4,22.9 118.9,22.9 118.4,22.9 117.9,22.9 117.4,22.9 116.9,22.9 116.4,23.7 115.9,25.0 115.4,26.2 114.9,22.9"/>
<polygon points="160.9,22.0 161.4,21.0 161.9,20.3 162.4,20.3 162.9,20.2 163.4,20.3 163.9,20.5 164.4,20.8 164.9,20.8 165.4,20.7 165.9,20.8 166.4,21.0 166.9,21.2 167.4,21.1 167.9,21.2 168.4,20.9 168.9,21.0 169.4,20.7 169.9,20.5 170.4,20.3 170.9,19.9 171.4,19.8 171.9,20.4 172.4,20.3 172.9,20.6 173.4,20.6 173.9,20.7 174.4,20.6 174.9,20.5 175.4,20.4 175.9,20.5 176.4,20.2 176.9,20.1 177.4,20.5 177.9,20.5 178.4,20.6 178.9,20.6 179.4,20.6 179.9,20.5 180.4,20.8 180.9,20.9 181.4,20.9 181.9,20.8 182.4,21.0 182.9,20.9 183.4,20.9 183.9,21.1 184.4,21.0 184.9,21.1 185.4,21.0 185.9,21.1 186.4,21.1 186.9,21.1 187.4,21.1 187.9,21.1 188.4,21.1 188.9,21.2 189.4,21.0 189.9,21.2 190.4,21.1 190.9,21.1 191.4,21.1 191.9,21.0 192.4,21.0 192.9,21.0 193.4,21.1 193.9,21.0 194.4,21.1 194.9,20.9 195.4,20.7 195.9,20.3 196.4,20.1 196.9,19.8 197.4,19.9 197.9,20.3 198.4,20.3 198.9,20.7 199.4,20.8 199.9,20.6 200.4,20.6 200.9,20.5 201.4,20.3 201.9,20.2 202.4,20.4 202.9,20.2 203.4,20.3 203.9,20.1 204.4,20.5 204.9,20.5 205.4,20.4 205.9,20.7 206.4,21.3 206.9,21.9 206.9,23.3 206.4,23.9 205.9,24.5 205.4,24.7 204.9,24.9 204.4,24.7 203.9,25.0 203.4,24.9 202.9,25.2 202.4,24.6 201.9,24.8 201.4,24.9 200.9,24.7 200.4,24.8 199.9,24.5 199.4,24.6 198.9,24.5 198.4,24.8 197.9,24.8 197.4,25.2 196.9,25.1 196.4,24.9 195.9,24.8 195.4,24.5 194.9,24.4 194.4,24.2 193.9,24.2 193.4,24.1 192.9,24.0 192.4,24.2 191.9,24.1 191.4,24.1 190.9,24.0 190.4,24.3 189.9,24.0 189.4,24.4 188.9,23.9 188.4,24.2 187.9,24.0 187.4,24.1 186.9,24.1 186.4,24.2 185.9,24.0 185.4,24.3 184.9,24.1 184.4,24.2 183.9,23.9 183.4,24.3 182.9,24.3 182.4,24.0 181.9,24.6 181.4,24.4 180.9,24.3 180.4,24.3 179.9,24.8 179.4,24.6 178.9,24.6 178.4,24.6 177.9,24.6 177.4,24.6 176.9,25.3 176.4,24.9 175.9,24.7 175.4,24.9 174.9,24.5 174.4,24.6 173.9,24.5 173.4,24.7 172.9,24.7 172.4,24.9 171.9,24.9 171.4,25.2 170.9,25.0 170.4,24.9 169.9,24.7 169.4,24.4 168.9,24.1 168.4,24.2 167.9,23.9 167.4,24.1 166.9,23.9 166.4,24.4 165.9,24.3 165.4,24.5 164.9,24.5 164.4,24.5 163.9,24.8 163.4,25.0 162.9,24.9 162.4,24.7 161.9,24.8 161.4,24.2 160.9,23.2"/>
<polygon points="207.0,22.4 207.5,21.7 208.0,21.4 208.5,21.4 209.0,21.5 209.5,21.7 210.0,22.0 210.5,22.2 211.0,22.4 211.0,22.8 210.5,23.0 210.0,23.2 209.5,23.5 209.0,23.7 208.5,23.8 208.0,23.8 207.5,23.5 207.0,22.8"/>
<polygon points="252.5,22.2 253.0,21.5 253.5,21.1 254.0,21.1 254.5,21.0 255.0,21.1 255.5,21.1 256.0,20.9 256.5,20.9 257.0,20.8 257.5,20.9 258.0,20.7 258.5,20.7 259.0,20.6 259.5,20.9 260.0,20.8 260.5,20.8 261.0,20.9 261.5,21.2 262.0,21.2 262.5,20.9 263.0,20.8 263.5,20.8 264.0,20.7 264.5,20.5 265.0,20.8 265.5,20.6 266.0,21.0 266.5,21.1 267.0,21.2 267.5,21.3 268.0,21.4 268.5,21.2 269.0,21.2 269.5,21.3 270.0,21.3 270.5,21.3 271.0,21.3 271.5,21.3 272.0,21.4 272.5,21.3 273.0,21.3 273.5,21.4 274.0,21.3 274.5,21.4 275.0,21.4 275.5,21.4 276.0,21.4 276.5,21.4 277.0,21.4 277.5,21.3 278.0,21.5 278.5,21.4 279.0,21.2 279.5,21.4 280.0,21.4 280.5,21.3 281.0,21.4 281.5,21.2 282.0,21.2 282.5,21.4 283.0,21.4 283.5,21.1 284.0,21.1 284.5,21.1 285.0,20.9 285.5,20.8 286.0,20.6 286.5,20.7 287.0,20.8 287.5,21.1 288.0,21.1 288.5,21.4 289.0,21.2 289.5,21.2 290.0,21.1 290.5,21.2 291.0,21.0 291.5,21.1 292.0,20.8 292.5,20.8 293.0,21.0 293.5,20.9 294.0,20.8 294.5,20.8 295.0,20.6 295.5,20.3 296.0,20.6 296.5,20.6 297.0,20.5 297.5,20.6 298.0,20.6 298.5,21.4 299.0,22.1 299.0,23.1 298.5,23.8 298.0,24.7 297.5,24.8 297.0,24.9 296.5,24.6 296.0,24.6 295.5,24.7 295.0,24.5 294.5,24.5 294.0,24.6 293.5,24.2 293.0,24.1 292.5,24.6 292.0,24.3 291.5,24.1 291.0,24.1 290.5,24.0 290.0,24.2 289.5,24.0 289.0,24.1 288.5,23.8 288.0,24.1 287.5,24.1 287.0,24.5 286.5,24.5 286.0,24.7 285.5,24.5 285.0,24.3 284.5,24.1 284.0,24.2 283.5,24.1 283.0,23.8 282.5,23.9 282.0,24.1 281.5,24.0 281.0,23.8 280.5,23.9 280.0,23.8 279.5,23.7 279.0,23.9 278.5,23.7 278.0,23.8 277.5,23.8 277.0,23.7 276.5,23.8 276.0,23.9 275.5,23.9 275.0,23.8 274.5,23.7 274.0,23.8 273.5,23.7 273.0,24.0 272.5,24.0 272.0,23.8 271.5,23.9 271.0,23.9 270.5,24.0 270.0,23.9 269.5,23.8 269.0,23.9 268.5,24.0 268.0,23.9 267.5,23.9 267.0,24.0 266.5,24.2 266.0,24.2 265.5,24.5 265.0,24.3 264.5,24.8 264.0,24.5 263.5,24.5 263.0,24.5 262.5,24.2 262.0,23.9 261.5,24.1 261.0,24.3 260.5,24.5 260.0,24.3 259.5,24.4 259.0,24.7 258.5,24.7 258.0,24.4 257.5,24.3 257.0,24.5 256.5,24.3 256.0,24.3 255.5,24.2 255.0,24.1 254.5,24.1 254.0,24.1 253.5,24.0 253.0,23.6 252.5,23.0"/>
<polygon points="299.0,22.4 299.5,21.7 300.0,21.7 300.5,22.0 301.0,22.4 301.0,22.8 300.5,23.2 300.0,23.5 299.5,23.5 299.0,22.8"/>
<polygon points="344.9,22.3 345.4,19.0 345.9,20.2 346.4,21.5 346.9,22.3 347.4,22.3 347.9,22.3 348.4,22.3 348.9,22.3 349.4,22.3 349.9,19.7 350.4,20.2 350.9,20.6 351.4,21.1 351.9,21.7 352.4,22.3 352.9,19.9 353.4,20.3 353.9,20.8 354.4,21.4 354.9,22.0 355.4,22.3 355.9,20.0 356.4,20.5 356.9,20.9 357.4,21.4 357.9,22.0 358.4,22.3 358.9,22.3 359.4,22.3 359.9,22.3 360.4,22.3 360.9,22.3 361.4,19.7 361.9,20.1 362.4,20.5 362.9,20.9 363.4,21.3 363.9,21.7 364.4,22.3 364.9,22.3 365.4,22.3 365.9,22.3 366.4,22.3 366.9,22.3 367.4,22.3 367.9,19.4 368.4,20.6 368.9,22.1 369.4,20.2 369.9,20.6 370.4,21.0 370.9,21.5 371.4,22.0 371.9,22.3 372.4,22.3 372.9,22.3 373.4,22.3 373.9,19.9 374.4,20.3 374.9,20.8 375.4,21.4 375.9,22.0 376.4,19.7 376.9,20.2 377.4,20.6 377.9,21.1 378.4,21.7 378.9,22.3 379.4,19.9 379.9,20.3 380.4,20.7 380.9,21.2 381.4,21.8 381.9,22.3 382.4,22.3 382.9,22.3 383.4,22.3 383.9,22.3 384.4,19.7 384.9,20.1 385.4,20.5 385.9,20.9 386.4,21.3 386.9,21.7 387.4,22.3 387.9,22.3 388.4,20.3 388.9,20.7 389.4,21.2 389.9,21.7 390.4,22.3 390.9,22.3 391.4,19.0 391.9,20.2 392.4,21.5 392.9,22.3 393.4,22.3 393.9,22.3 394.4,22.3 394.9,22.3 395.4,22.3 395.9,19.7 396.4,20.2 396.9,20.6 397.4,21.1 397.9,21.7 398.4,22.3 398.9,19.9 399.4,20.3 399.9,20.8 400.4,21.4 400.9,22.0 401.4,22.3 401.9,20.0 402.4,20.5 402.9,20.9 403.4,21.4 403.9,22.0 404.4,22.3 404.9,22.3 405.4,22.3 405.9,22.3 406.4,22.3 406.9,22.3 407.4,19.7 407.9,20.1 408.4,20.5 408.9,20.9 409.4,21.3 409.9,21.7 410.4,22.3 410.9,22.3 411.4,22.3 411.9,22.3 412.4,22.3 412.9,22.3 413.4,22.3 413.9,19.4 414.4,20.6 414.9,22.1 415.4,20.2 415.9,20.6 416.4,21.0 416.9,21.5 417.4,22.0 417.9,22.3 418.4,22.3 418.9,22.3 419.4,22.3 419.9,19.9 420.4,20.3 420.9,20.8 421.4,21.4 421.9,22.0 422.4,19.7 422.9,20.2 423.4,20.6 423.9,21.1 424.4,21.7 424.9,22.3 425.4,19.9 425.9,20.3 426.4,20.7 426.9,21.2 427.4,21.8 427.9,22.3 428.4,22.3 428.9,22.3 429.4,22.3 429.9,22.3 430.4,19.7 430.9,20.1 431.4,20.5 431.9,20.9 432.4,21.3 432.9,21.7 433.4,22.3 433.9,22.3 434.4,20.3 434.9,20.7 435.4,21.2 435.9,21.7 436.4,22.3 436.9,22.3 436.9,22.9 436.4,22.9 435.9,23.5 435.4,24.0 434.9,24.5 434.4,24.9 433.9,22.9 433.4,22.9 432.9,23.5 432.4,23.9 431.9,24.3 431.4,24.7 430.9,25.1 430.4,25.5 429.9,22.9 429.4,22.9 428.9,22.9 428.4,22.9 427.9,22.9 427.4,23.4 426.9,24.0 426.4,24.5 425.9,24.9 425.4,25.3 424.9,22.9 424.4,23.5 423.9,24.1 423.4,24.6 422.9,25.0 422.4,25.5 421.9,23.2 421.4,23.8 420.9,24.4 420.4,24.9 419.9,25.3 419.4,22.9 418.9,22.9 418.4,22.9 417.9,22.9 417.4,23.2 416.9,23.7 416.4,24.2 415.9,24.6 415.4,25.0 414.9,23.1 414.4,24.6 413.9,25.8 413.4,22.9 412.9,22.9 412.4,22.9 411.9,22.9 411.4,22.9 410.9,22.9 410.4,22.9 409.9,23.5 409.4,23.9 408.9,24.3 408.4,24.7 407.9,25.1 407.4,25.5 406.9,22.9 406.4,22.9 405.9,22.9 405.4,22.9 404.9,22.9 404.4,22.9 403.9,23.2 403.4,23.8 402.9,24.3 402.4,24.7 401.9,25.2 401.4,22.9 400.9,23.2 400.4,23.8 399.9,24.4 399.4,24.9 398.9,25.3 398.4,22.9 397.9,23.5 397.4,24.1 396.9,24.6 396.4,25.0 395.9,25.5 395.4,22.9 394.9,22.9 394.4,22.9 393.9,22.9 393.4,22.9 392.9,22.9 392.4,23.7 391.9,25.0 391.4,26.2 390.9,22.9 390.4,22.9 389.9,23.5 389.4,24.0 388.9,24.5 388.4,24.9 387.9,22.9 387.4,22.9 386.9,23.5 386.4,23.9 385.9,24.3 385.4,24.7 384.9,25.1 384.4,25.5 383.9,22.9 383.4,22.9 382.9,22.9 382.4,22.9 381.9,22.9 381.4,23.4 380.9,24.0 380.4,24.5 379.9,24.9 379.4,25.3 378.9,22.9 378.4,23.5 377.9,24.1 377.4,24.6 376.9,25.0 376.4,25.5 375.9,23.2 375.4,23.8 374.9,24.4 374.4,24.9 373.9,25.3 373.4,22.9 372.9,22.9 372.4,22.9 371.9,22.9 371.4,23.2 370.9,23.7 370.4,24.2 369.9,24.6 369.4,25.0 368.9,23.1 368.4,24.6 367.9,25.8 367.4,22.9 366.9,22.9 366.4,22.9 365.9,22.9 365.4,22.9 364.9,22.9 364.4,22.9 363.9,23.5 363.4,23.9 362.9,24.3 362.4,24.7 361.9,25.1 361.4,25.5 360.9,22.9 360.4,22.9 359.9,22.9 359.4,22.9 358.9,22.9 358.4,22.9 357.9,23.2 357.4,23.8 356.9,24.3 356.4,24.7 355.9,25.2 355.4,22.9 354.9,23.2 354.4,23.8 353.9,24.4 353.4,24.9 352.9,25.3 352.4,22.9 351.9,23.5 351.4,24.1 350.9,24.6 350.4,25.0 349.9,25.5 349.4,22.9 348.9,22.9 348.4,22.9 347.9,22.9 347.4,22.9 346.9,22.9 346.4,23.7 345.9,25.0 345.4,26.2 344.9,22.9"/>
<polygon points="436.9,21.9 437.4,21.0 437.9,20.0 438.4,20.4 438.9,20.2 439.4,20.3 439.9,20.7 440.4,20.7 440.9,20.8 441.4,20.7 441.9,20.9 442.4,20.8 442.9,20.7 443.4,20.9 443.9,20.8 444.4,20.8 444.9,21.0 445.4,21.1 445.9,21.1 446.4,21.2 446.9,21.2 447.4,21.3 447.9,21.1 448.4,21.1 448.9,21.2 449.4,20.9 449.9,20.9 450.4,20.8 450.9,20.5 451.4,20.4 451.9,20.3 452.4,20.3 452.9,20.4 453.4,20.4 453.9,20.5 454.4,20.4 454.9,20.7 455.4,20.6 455.9,20.9 456.4,21.1 456.9,21.2 457.4,21.0 457.9,21.2 458.4,21.2 458.9,21.1 459.4,21.2 459.9,21.2 460.4,21.1 460.9,21.3 461.4,21.3 461.9,21.2 462.4,21.1 462.9,21.2 463.4,21.3 463.9,21.2 464.4,21.2 464.9,21.3 465.4,21.1 465.9,21.1 466.4,21.1 466.9,21.2 467.4,21.1 467.9,21.3 468.4,21.2 468.9,21.1 469.4,20.8 469.9,20.8 470.4,20.8 470.9,20.4 471.4,20.3 471.9,20.3 472.4,20.3 472.9,20.1 473.4,20.4 473.9,20.7 474.4,20.8 474.9,20.8 475.4,21.1 475.9,21.2 476.4,21.1 476.9,21.2 477.4,21.1 477.9,21.0 478.4,21.1 478.9,20.9 479.4,20.7 479.9,20.9 480.4,20.7 480.9,20.8 481.4,20.7 481.9,20.6 482.4,20.8 482.9,20.8 483.4,20.7 483.9,20.4 484.4,20.3 484.9,20.1 485.4,20.2 485.9,20.2 486.4,20.0 486.9,20.1 487.4,20.4 487.9,20.3 488.4,20.5 488.9,20.3 489.4,20.4 489.9,20.1 490.4,20.1 490.9,20.1 491.4,20.1 491.9,20.4 492.4,20.6 492.9,20.6 493.4,20.4 493.9,20.4 494.4,20.2 494.9,20.3 495.4,20.7 495.9,20.7 496.4,20.8 496.9,20.5 497.4,20.6 497.9,20.6 498.4,20.9 498.9,20.8 499.4,20.9 499.9,20.8 500.4,20.8 500.9,20.6 501.4,20.6 501.9,20.6 502.4,20.9 502.9,20.8 503.4,20.8 503.9,21.0 504.4,21.0 504.9,21.2 505.4,21.0 505.9,21.2 506.4,21.2 506.9,20.9 507.4,20.9 507.9,21.1 508.4,20.9 508.9,20.9 509.4,20.9 509.9,20.8 510.4,20.7 510.9,20.6 511.4,20.5 511.9,20.4 512.4,20.6 512.9,20.5 513.4,20.2 513.9,20.5 514.4,20.2 514.9,20.4 515.4,20.6 515.9,20.8 516.4,20.8 516.9,20.9 517.4,20.9 517.9,21.0 518.4,21.2 518.9,21.2 519.4,21.2 519.9,21.1 520.4,20.7 520.9,20.8 521.4,20.6 521.9,20.6 522.4,20.4 522.9,20.4 523.4,20.6 523.9,20.2 524.4,20.2 524.9,20.4 525.4,20.8 525.9,20.9 526.4,20.8 526.9,21.0 527.4,21.0 527.9,21.3 528.4,22.0 528.4,23.2 527.9,23.8 527.4,24.0 526.9,24.2 526.4,24.3 525.9,24.4 525.4,24.6 524.9,24.9 524.4,25.1 523.9,24.8 523.4,24.7 522.9,25.0 522.4,24.8 521.9,24.6 521.4,24.8 520.9,24.5 520.4,24.3 519.9,24.1 519.4,24.1 518.9,24.0 518.4,23.9 517.9,24.0 517.4,24.2 516.9,24.2 516.4,24.3 515.9,24.4 515.4,24.8 514.9,24.7 514.4,24.8 513.9,24.9 513.4,25.0 512.9,24.5 512.4,24.6 511.9,24.9 511.4,24.6 510.9,24.7 510.4,24.5 509.9,24.5 509.4,24.2 508.9,24.2 508.4,24.2 507.9,24.2 507.4,24.2 506.9,24.1 506.4,24.0 505.9,24.0 505.4,24.1 504.9,24.2 504.4,24.2 503.9,24.2 503.4,24.6 502.9,24.3 502.4,24.2 501.9,24.4 501.4,24.5 500.9,24.4 500.4,24.5 499.9,24.2 499.4,24.2 498.9,24.5 498.4,24.3 497.9,24.6 497.4,24.6 496.9,24.8 496.4,24.3 495.9,24.5 495.4,24.6 494.9,24.9 494.4,25.0 493.9,24.7 493.4,24.9 492.9,24.6 492.4,24.8 491.9,25.1 491.4,25.4 490.9,25.2 490.4,25.0 489.9,25.0 489.4,24.7 488.9,25.0 488.4,24.8 487.9,24.7 487.4,24.7 486.9,24.9 486.4,25.2 485.9,25.2 485.4,25.1 484.9,25.2 484.4,25.0 483.9,24.9 483.4,24.7 482.9,24.3 482.4,24.4 481.9,24.7 481.4,24.3 480.9,24.2 480.4,24.5 479.9,24.2 479.4,24.6 478.9,24.3 478.4,24.1 477.9,24.0 477.4,24.1 476.9,24.1 476.4,24.3 475.9,23.9 475.4,23.9 474.9,24.5 474.4,24.4 473.9,24.4 473.4,24.8 472.9,25.2 472.4,24.8 471.9,24.9 471.4,25.1 470.9,24.8 470.4,24.3 469.9,24.4 469.4,24.5 468.9,24.1 468.4,23.9 467.9,24.0 467.4,24.2 466.9,23.9 466.4,24.1 465.9,24.0 465.4,24.0 464.9,23.9 464.4,24.1 463.9,24.1 463.4,24.0 462.9,24.1 462.4,24.2 461.9,24.1 461.4,23.9 460.9,23.9 460.4,24.2 459.9,24.1 459.4,23.9 458.9,24.2 458.4,24.0 457.9,24.2 457.4,24.0 456.9,24.0 456.4,24.1 455.9,24.5 455.4,24.6 454.9,24.7 454.4,24.8 453.9,24.9 453.4,24.7 452.9,24.9 452.4,24.8 451.9,24.7 451.4,24.8 450.9,24.8 450.4,24.3 449.9,24.2 449.4,24.3 448.9,24.1 448.4,24.0 447.9,24.0 447.4,23.8 446.9,24.1 446.4,23.9 445.9,24.2 445.4,24.2 444.9,24.0 444.4,24.5 443.9,24.2 443.4,24.3 442.9,24.7 442.4,24.3 441.9,24.2 441.4,24.5 440.9,24.5 440.4,24.5 439.9,24.6 439.4,25.1 438.9,25.1 438.4,24.9 437.9,25.3 437.4,24.0 436.9,23.3"/>
<polygon points="528.5,22.4 529.0,21.6 529.5,21.4 530.0,21.7 530.5,22.1 531.0,22.4 531.0,22.8 530.5,23.1 530.0,23.5 529.5,23.8 529.0,23.6 528.5,22.8"/></svg><span>MELODY</span></div>
<div class="abs" style="left:8px;top:267.9px;width:72px;height:1.8px;background:#18191d"></div><div class="lrow" style="top:269.7px"><div class="m">M</div><div class="sl"></div><div class="kn"></div></div>
<div class="stem" style="top:269px;transform:translateY(0.70px)"><i style="left:21.0px"></i><i style="left:67.0px"></i><i style="left:113.0px"></i><i style="left:159.0px"></i><i style="left:205.0px"></i><i style="left:251.0px"></i><i style="left:297.0px"></i><i style="left:343.0px"></i><i style="left:389.0px"></i><i style="left:435.0px"></i><i style="left:481.0px"></i><i style="left:527.0px"></i><svg width="552" height="42" viewBox="0 0 552 42" fill="#4559c8"><polygon points="1.3,22.5 1.8,22.4 2.3,22.4 2.8,22.3 3.3,22.3 3.8,22.3 4.3,22.3 4.8,22.3 5.3,22.3 5.8,22.3 6.3,22.2 6.8,22.3 7.3,22.2 7.8,22.3 8.3,22.2 8.8,22.2 9.3,22.2 9.8,22.2 10.3,22.2 10.8,22.2 11.3,22.3 11.8,22.2 12.3,22.2 12.8,22.2 13.3,22.1 13.8,22.2 14.3,22.2 14.8,22.2 15.3,22.4 15.3,22.8 14.8,22.9 14.3,22.9 13.8,23.1 13.3,23.1 12.8,23.0 12.3,23.0 11.8,23.0 11.3,23.0 10.8,23.0 10.3,22.9 9.8,23.0 9.3,23.0 8.8,23.0 8.3,23.0 7.8,22.9 7.3,23.0 6.8,22.9 6.3,23.0 5.8,22.9 5.3,22.9 4.8,22.9 4.3,22.9 3.8,22.9 3.3,22.9 2.8,22.9 2.3,22.9 1.8,22.8 1.3,22.7"/>
<polygon points="15.5,22.5 16.0,22.3 16.5,22.1 17.0,22.1 17.5,22.1 18.0,22.0 18.5,22.1 19.0,22.1 19.5,22.0 20.0,22.0 20.5,22.0 21.0,22.0 21.5,22.0 22.0,22.1 22.5,22.4 22.5,22.8 22.0,23.1 21.5,23.2 21.0,23.3 20.5,23.3 20.0,23.2 19.5,23.2 19.0,23.1 18.5,23.0 18.0,23.2 17.5,23.1 17.0,23.1 16.5,23.1 16.0,22.9 15.5,22.7"/>
<polygon points="22.7,22.1 23.2,21.4 23.7,20.7 24.2,20.9 24.7,20.8 25.2,20.8 25.7,21.0 26.2,21.0 26.7,20.9 27.2,21.1 27.7,21.2 28.2,21.2 28.7,21.4 29.2,21.3 29.7,21.4 30.2,21.2 30.7,21.4 31.2,21.4 31.7,21.4 32.2,21.4 32.7,21.4 33.2,21.4 33.7,21.4 34.2,21.3 34.7,21.4 35.2,21.3 35.7,21.4 36.2,21.4 36.7,21.3 37.2,21.4 37.7,21.4 38.2,21.4 38.7,21.3 39.2,21.4 39.7,21.3 40.2,21.1 40.7,20.8 41.2,20.8 41.7,20.5 42.2,20.4 42.7,20.7 43.2,20.9 43.7,21.0 44.2,21.2 44.7,21.3 45.2,21.4 45.7,21.4 46.2,21.2 46.7,21.1 47.2,20.8 47.7,20.7 48.2,20.2 48.7,20.2 49.2,20.4 49.7,20.5 50.2,21.0 50.7,20.7 51.2,20.6 51.7,20.8 52.2,20.8 52.7,20.8 53.2,20.6 53.7,20.4 54.2,20.5 54.7,20.5 55.2,20.7 55.7,20.5 56.2,20.7 56.7,20.6 57.2,20.6 57.7,20.5 58.2,20.9 58.7,20.9 59.2,20.8 59.7,20.6 60.2,20.9 60.7,20.8 61.2,20.9 61.7,21.1 62.2,21.1 62.7,21.3 63.2,21.3 63.7,21.3 64.2,21.2 64.7,21.1 65.2,21.2 65.7,21.0 66.2,20.9 66.7,20.8 67.2,21.0 67.7,20.9 68.2,20.7 68.7,20.5 69.2,20.4 69.7,20.3 70.2,20.5 70.7,20.3 71.2,20.5 71.7,20.7 72.2,20.6 72.7,20.7 73.2,20.8 73.7,20.7 74.2,20.6 74.7,20.4 75.2,20.4 75.7,20.4 76.2,20.1 76.7,20.5 77.2,20.2 77.7,20.4 78.2,20.6 78.7,20.6 79.2,20.7 79.7,20.8 80.2,20.6 80.7,20.4 81.2,20.1 81.7,20.6 82.2,20.4 82.7,20.7 83.2,21.1 83.7,21.0 84.2,21.2 84.7,21.3 85.2,21.2 85.7,21.3 86.2,21.2 86.7,21.2 87.2,21.1 87.7,21.0 88.2,20.9 88.7,21.0 89.2,20.7 89.7,20.6 90.2,20.8 90.7,20.6 91.2,20.6 91.7,20.9 92.2,20.9 92.7,20.9 93.2,20.8 93.7,20.7 94.2,20.9 94.7,21.0 95.2,21.0 95.7,20.8 96.2,20.8 96.7,20.9 97.2,20.8 97.7,20.3 98.2,20.3 98.7,20.7 99.2,20.8 99.7,20.8 100.2,20.9 100.7,21.0 101.2,21.1 101.7,21.1 102.2,21.2 102.7,21.9 102.7,23.3 102.2,23.9 101.7,24.1 101.2,24.2 100.7,24.1 100.2,24.3 99.7,24.3 99.2,24.3 98.7,24.3 98.2,24.8 97.7,25.0 97.2,24.4 96.7,24.3 96.2,24.3 95.7,24.5 95.2,24.3 94.7,24.2 94.2,24.3 93.7,24.6 93.2,24.2 92.7,24.3 92.2,24.3 91.7,24.1 91.2,24.6 90.7,24.5 90.2,24.5 89.7,24.5 89.2,24.5 88.7,24.3 88.2,24.4 87.7,24.3 87.2,24.1 86.7,24.1 86.2,24.1 85.7,24.0 85.2,24.1 84.7,24.0 84.2,24.0 83.7,24.3 83.2,24.2 82.7,24.6 82.2,24.7 81.7,24.5 81.2,24.8 80.7,24.9 80.2,24.7 79.7,24.3 79.2,24.6 78.7,24.6 78.2,24.7 77.7,24.8 77.2,24.8 76.7,24.6 76.2,25.0 75.7,25.0 75.2,24.8 74.7,24.9 74.2,24.5 73.7,24.4 73.2,24.5 72.7,24.4 72.2,24.7 71.7,24.7 71.2,24.6 70.7,25.0 70.2,24.6 69.7,25.1 69.2,24.9 68.7,24.5 68.2,24.4 67.7,24.4 67.2,24.1 66.7,24.4 66.2,24.3 65.7,24.4 65.2,24.1 64.7,24.0 64.2,24.0 63.7,23.9 63.2,23.8 62.7,23.8 62.2,24.1 61.7,24.0 61.2,24.4 60.7,24.2 60.2,24.4 59.7,24.4 59.2,24.4 58.7,24.3 58.2,24.4 57.7,24.6 57.2,24.7 56.7,24.6 56.2,24.4 55.7,24.5 55.2,24.4 54.7,24.8 54.2,24.5 53.7,24.9 53.2,24.5 52.7,24.4 52.2,24.5 51.7,24.4 51.2,24.6 50.7,24.7 50.2,24.1 49.7,24.6 49.2,24.8 48.7,24.8 48.2,24.8 47.7,24.3 47.2,24.5 46.7,24.0 46.2,24.1 45.7,23.8 45.2,23.7 44.7,23.8 44.2,24.1 43.7,24.3 43.2,24.2 42.7,24.4 42.2,24.7 41.7,24.8 41.2,24.4 40.7,24.4 40.2,24.0 39.7,24.0 39.2,23.7 38.7,23.9 38.2,23.9 37.7,23.8 37.2,23.8 36.7,23.9 36.2,23.9 35.7,23.9 35.2,24.0 34.7,23.8 34.2,23.9 33.7,23.8 33.2,23.7 32.7,23.7 32.2,23.9 31.7,23.7 31.2,23.9 30.7,23.8 30.2,24.0 29.7,23.8 29.2,23.8 28.7,23.7 28.2,24.0 27.7,24.0 27.2,24.0 26.7,24.2 26.2,24.3 25.7,24.3 25.2,24.5 24.7,24.4 24.2,24.3 23.7,24.4 23.2,23.9 22.7,23.1"/>
<polygon points="103.0,22.5 103.5,22.4 104.0,22.3 104.5,22.3 105.0,22.3 105.5,22.3 106.0,22.3 106.5,22.3 107.0,22.4 107.5,22.5 107.5,22.7 107.0,22.8 106.5,22.9 106.0,22.9 105.5,22.9 105.0,22.8 104.5,22.9 104.0,22.8 103.5,22.8 103.0,22.7"/>
<polygon points="107.5,22.4 108.0,22.3 108.5,22.0 109.0,22.0 109.5,22.1 110.0,22.0 110.5,22.0 111.0,21.8 111.5,21.8 112.0,21.8 112.5,21.9 113.0,21.9 113.5,22.0 114.0,22.3 114.0,22.9 113.5,23.2 113.0,23.3 112.5,23.4 112.0,23.3 111.5,23.4 111.0,23.4 110.5,23.2 110.0,23.2 109.5,23.1 109.0,23.2 108.5,23.2 108.0,22.9 107.5,22.8"/>
<polygon points="114.5,22.1 115.0,21.4 115.5,20.8 116.0,20.9 116.5,20.8 117.0,20.4 117.5,20.4 118.0,20.7 118.5,20.5 119.0,20.7 119.5,20.7 120.0,20.5 120.5,20.9 121.0,21.0 121.5,21.0 122.0,21.1 122.5,21.1 123.0,21.2 123.5,21.3 124.0,21.4 124.5,21.3 125.0,21.2 125.5,21.3 126.0,21.4 126.5,21.3 127.0,21.4 127.5,21.3 128.0,21.4 128.5,21.4 129.0,21.2 129.5,21.3 130.0,21.4 130.5,21.2 131.0,21.2 131.5,21.2 132.0,21.1 132.5,20.8 133.0,20.9 133.5,20.9 134.0,20.6 134.5,20.4 135.0,20.4 135.5,20.6 136.0,20.4 136.5,20.4 137.0,20.7 137.5,20.6 138.0,20.6 138.5,20.5 139.0,20.5 139.5,20.7 140.0,20.5 140.5,20.7 141.0,20.4 141.5,20.7 142.0,20.7 142.5,20.9 143.0,20.8 143.5,20.8 144.0,20.8 144.5,21.0 145.0,20.7 145.5,20.8 146.0,20.6 146.5,21.0 147.0,20.9 147.5,20.8 148.0,20.9 148.5,21.1 149.0,21.1 149.5,21.1 150.0,21.4 150.5,21.4 151.0,21.2 151.5,21.4 152.0,21.3 152.5,21.2 153.0,20.9 153.5,20.6 154.0,20.5 154.5,20.6 155.0,21.0 155.5,21.1 156.0,21.0 156.5,21.0 157.0,21.0 157.5,20.9 158.0,20.9 158.5,21.0 159.0,21.0 159.5,21.0 160.0,21.5 160.5,22.2 160.5,23.0 160.0,23.7 159.5,24.1 159.0,24.3 158.5,24.2 158.0,24.4 157.5,24.4 157.0,24.4 156.5,24.2 156.0,24.4 155.5,24.1 155.0,24.2 154.5,24.8 154.0,24.8 153.5,24.6 153.0,24.3 152.5,24.1 152.0,23.8 151.5,23.9 151.0,24.0 150.5,23.9 150.0,23.7 149.5,24.2 149.0,24.2 148.5,24.0 148.0,24.1 147.5,24.6 147.0,24.1 146.5,24.2 146.0,24.6 145.5,24.3 145.0,24.6 144.5,24.4 144.0,24.3 143.5,24.5 143.0,24.5 142.5,24.3 142.0,24.5 141.5,24.6 141.0,25.0 140.5,24.4 140.0,24.7 139.5,24.4 139.0,24.5 138.5,24.6 138.0,24.6 137.5,24.8 137.0,24.7 136.5,24.8 136.0,24.6 135.5,24.4 135.0,24.6 134.5,25.0 134.0,24.7 133.5,24.3 133.0,24.5 132.5,24.3 132.0,24.2 131.5,24.2 131.0,24.2 130.5,23.9 130.0,23.9 129.5,23.8 129.0,24.1 128.5,23.8 128.0,23.7 127.5,23.9 127.0,23.8 126.5,23.9 126.0,23.7 125.5,24.0 125.0,23.9 124.5,23.9 124.0,23.7 123.5,24.0 123.0,24.0 122.5,24.0 122.0,24.0 121.5,24.4 121.0,24.1 120.5,24.3 120.0,24.6 119.5,24.5 119.0,24.4 118.5,24.7 118.0,24.6 117.5,24.7 117.0,24.9 116.5,24.3 116.0,24.4 115.5,24.2 115.0,23.8 114.5,23.0"/>
<polygon points="160.5,22.2 161.0,21.7 161.5,21.3 162.0,21.3 162.5,21.2 163.0,21.1 163.5,21.0 164.0,20.7 164.5,20.9 165.0,20.8 165.5,20.7 166.0,20.5 166.5,20.5 167.0,20.6 167.5,20.6 168.0,20.6 168.5,20.7 169.0,21.0 169.5,20.8 170.0,21.1 170.5,20.8 171.0,21.1 171.5,20.8 172.0,20.9 172.5,21.0 173.0,20.8 173.5,20.9 174.0,21.1 174.5,21.3 175.0,21.1 175.5,21.3 176.0,21.2 176.5,21.1 177.0,20.8 177.5,20.9 178.0,20.8 178.5,20.5 179.0,20.6 179.5,20.4 180.0,20.8 180.5,20.6 181.0,20.5 181.5,20.4 182.0,20.4 182.5,20.6 183.0,20.7 183.5,20.4 184.0,20.8 184.5,20.5 185.0,20.6 185.5,20.3 186.0,20.4 186.5,20.3 187.0,20.2 187.5,20.1 188.0,20.5 188.5,20.4 189.0,20.6 189.5,20.8 190.0,21.3 190.5,22.1 190.5,23.1 190.0,24.0 189.5,24.5 189.0,24.6 188.5,25.0 188.0,24.8 187.5,25.0 187.0,24.9 186.5,24.9 186.0,24.9 185.5,25.0 185.0,24.4 184.5,24.7 184.0,24.3 183.5,24.8 183.0,24.4 182.5,24.5 182.0,24.6 181.5,24.7 181.0,24.8 180.5,24.7 180.0,24.3 179.5,24.6 179.0,24.5 178.5,24.6 178.0,24.4 177.5,24.5 177.0,24.5 176.5,24.2 176.0,24.0 175.5,24.0 175.0,24.2 174.5,24.0 174.0,24.0 173.5,24.3 173.0,24.4 172.5,24.2 172.0,24.4 171.5,24.3 171.0,24.2 170.5,24.3 170.0,24.0 169.5,24.4 169.0,24.4 168.5,24.4 168.0,24.5 167.5,24.5 167.0,24.4 166.5,24.6 166.0,24.5 165.5,24.3 165.0,24.5 164.5,24.2 164.0,24.6 163.5,24.0 163.0,24.2 162.5,24.1 162.0,24.1 161.5,23.9 161.0,23.4 160.5,22.9"/>
<polygon points="190.5,22.1 191.0,21.3 191.5,20.7 192.0,20.9 192.5,20.9 193.0,20.9 193.5,20.8 194.0,20.9 194.5,20.8 195.0,20.7 195.5,20.7 196.0,20.4 196.5,20.3 197.0,20.1 197.5,19.8 198.0,20.0 198.5,19.8 199.0,19.7 199.5,19.5 200.0,19.7 200.5,19.5 201.0,19.3 201.5,19.7 202.0,19.3 202.5,19.6 203.0,19.4 203.5,19.5 204.0,19.5 204.5,19.4 205.0,19.9 205.5,19.6 206.0,20.2 206.5,21.0 207.0,21.9 207.0,23.4 206.5,24.2 206.0,25.1 205.5,25.3 205.0,25.3 204.5,25.7 204.0,25.5 203.5,26.0 203.0,25.9 202.5,25.8 202.0,26.0 201.5,25.8 201.0,25.8 200.5,25.7 200.0,25.7 199.5,25.7 199.0,25.4 198.5,25.3 198.0,25.0 197.5,25.5 197.0,25.2 196.5,24.8 196.0,25.0 195.5,24.3 195.0,24.5 194.5,24.4 194.0,24.3 193.5,24.2 193.0,24.2 192.5,24.4 192.0,24.1 191.5,24.5 191.0,23.9 190.5,23.1"/>
<polygon points="207.0,22.2 207.5,21.6 208.0,20.8 208.5,20.9 209.0,21.1 209.5,21.3 210.0,20.9 210.5,21.2 211.0,21.0 211.5,21.2 212.0,21.1 212.5,21.4 213.0,21.3 213.5,21.3 214.0,21.5 214.5,21.3 215.0,21.3 215.5,21.2 216.0,21.6 216.5,21.5 217.0,21.4 217.5,21.6 218.0,21.4 218.5,21.6 219.0,21.6 219.5,21.5 220.0,22.0 220.5,22.4 220.5,22.8 220.0,23.3 219.5,23.6 219.0,23.6 218.5,23.6 218.0,23.9 217.5,23.6 217.0,23.9 216.5,23.7 216.0,23.6 215.5,24.1 215.0,24.1 214.5,23.8 214.0,23.8 213.5,23.9 213.0,23.9 212.5,23.7 212.0,24.0 211.5,23.9 211.0,24.3 210.5,24.1 210.0,24.3 209.5,23.8 209.0,24.1 208.5,24.2 208.0,24.4 207.5,23.5 207.0,23.0"/>
<polygon points="220.5,22.3 221.0,22.1 221.5,21.9 222.0,21.8 222.5,21.7 223.0,21.9 223.5,21.8 224.0,21.7 224.5,21.9 225.0,21.9 225.5,21.8 226.0,21.9 226.5,21.7 227.0,21.9 227.5,21.9 228.0,21.7 228.5,21.8 229.0,21.8 229.5,21.7 230.0,21.9 230.5,21.8 231.0,21.9 231.5,21.7 232.0,21.8 232.5,21.8 233.0,21.8 233.5,21.8 234.0,21.8 234.5,21.8 235.0,21.8 235.5,21.8 236.0,21.9 236.5,21.8 237.0,21.7 237.5,21.8 238.0,21.8 238.5,21.8 239.0,21.7 239.5,21.8 240.0,21.7 240.5,21.7 241.0,21.9 241.5,21.9 242.0,21.7 242.5,21.8 243.0,21.9 243.5,21.7 244.0,21.7 244.5,21.8 245.0,21.9 245.5,21.7 246.0,21.7 246.5,21.8 247.0,21.8 247.5,21.6 248.0,21.9 248.5,21.8 249.0,21.8 249.5,21.6 250.0,21.9 250.5,21.7 251.0,22.0 251.5,22.4 251.5,22.8 251.0,23.2 250.5,23.5 250.0,23.3 249.5,23.6 249.0,23.4 248.5,23.4 248.0,23.3 247.5,23.6 247.0,23.4 246.5,23.4 246.0,23.5 245.5,23.5 245.0,23.3 244.5,23.3 244.0,23.4 243.5,23.5 243.0,23.3 242.5,23.4 242.0,23.4 241.5,23.4 241.0,23.3 240.5,23.5 240.0,23.6 239.5,23.3 239.0,23.5 238.5,23.4 238.0,23.4 237.5,23.4 237.0,23.5 236.5,23.4 236.0,23.3 235.5,23.4 235.0,23.4 234.5,23.4 234.0,23.5 233.5,23.4 233.0,23.5 232.5,23.4 232.0,23.4 231.5,23.5 231.0,23.3 230.5,23.4 230.0,23.3 229.5,23.5 229.0,23.4 228.5,23.3 228.0,23.5 227.5,23.3 227.0,23.4 226.5,23.5 226.0,23.2 225.5,23.5 225.0,23.3 224.5,23.2 224.0,23.5 223.5,23.4 223.0,23.3 222.5,23.5 222.0,23.5 221.5,23.2 221.0,23.0 220.5,22.9"/>
<polygon points="251.5,22.4 252.0,22.1 252.5,21.8 253.0,21.6 253.5,21.5 254.0,21.4 254.5,21.3 255.0,21.5 255.5,21.4 256.0,21.3 256.5,21.4 257.0,21.4 257.5,21.4 258.0,21.3 258.5,21.3 259.0,21.3 259.5,21.4 260.0,21.2 260.5,21.3 261.0,21.5 261.5,21.4 262.0,21.7 262.5,21.6 263.0,21.7 263.5,21.8 264.0,21.8 264.5,21.6 265.0,21.6 265.5,21.4 266.0,21.3 266.5,21.3 267.0,21.1 267.5,21.3 268.0,21.4 268.5,21.5 269.0,21.6 269.5,21.8 270.0,21.7 270.5,21.7 271.0,21.7 271.5,21.8 272.0,21.6 272.5,21.6 273.0,21.6 273.5,21.4 274.0,21.4 274.5,21.4 275.0,21.3 275.5,21.2 276.0,21.3 276.5,21.3 277.0,21.4 277.5,21.2 278.0,21.4 278.5,21.3 279.0,21.3 279.5,21.6 280.0,21.5 280.5,21.6 281.0,21.6 281.5,21.5 282.0,21.6 282.5,21.4 283.0,21.5 283.5,21.4 284.0,21.6 284.5,21.7 285.0,21.7 285.5,21.6 286.0,21.5 286.5,21.5 287.0,21.4 287.5,21.4 288.0,21.2 288.5,21.1 289.0,21.2 289.5,21.0 290.0,21.1 290.5,21.2 291.0,21.2 291.5,21.0 292.0,21.3 292.5,21.3 293.0,21.4 293.5,21.4 294.0,21.5 294.5,21.7 295.0,21.6 295.5,21.9 296.0,22.3 296.0,22.9 295.5,23.2 295.0,23.6 294.5,23.5 294.0,23.7 293.5,23.8 293.0,23.8 292.5,23.9 292.0,24.0 291.5,24.1 291.0,23.9 290.5,23.9 290.0,24.2 289.5,24.3 289.0,24.0 288.5,24.0 288.0,24.0 287.5,23.9 287.0,23.9 286.5,23.8 286.0,23.8 285.5,23.6 285.0,23.5 284.5,23.5 284.0,23.7 283.5,23.8 283.0,23.6 282.5,23.8 282.0,23.6 281.5,23.6 281.0,23.7 280.5,23.6 280.0,23.7 279.5,23.7 279.0,23.9 278.5,23.8 278.0,23.8 277.5,24.1 277.0,23.8 276.5,23.8 276.0,23.9 275.5,24.2 275.0,24.0 274.5,23.8 274.0,23.7 273.5,23.8 273.0,23.6 272.5,23.7 272.0,23.6 271.5,23.5 271.0,23.5 270.5,23.5 270.0,23.5 269.5,23.5 269.0,23.6 268.5,23.7 268.0,23.8 267.5,23.8 267.0,24.2 266.5,23.8 266.0,23.8 265.5,23.7 265.0,23.7 264.5,23.6 264.0,23.4 263.5,23.4 263.0,23.5 262.5,23.6 262.0,23.5 261.5,23.8 261.0,23.6 260.5,23.8 260.0,23.9 259.5,23.8 259.0,24.0 258.5,23.8 258.0,23.9 257.5,23.8 257.0,23.9 256.5,23.8 256.0,24.0 255.5,23.9 255.0,23.8 254.5,23.9 254.0,23.8 253.5,23.6 253.0,23.7 252.5,23.4 252.0,23.1 251.5,22.8"/>
<polygon points="296.0,22.5 296.5,22.3 297.0,22.2 297.5,22.2 298.0,22.3 298.5,22.5 298.5,22.7 298.0,22.9 297.5,23.0 297.0,23.0 296.5,22.9 296.0,22.7"/>
<polygon points="298.5,21.9 299.0,20.9 299.5,19.9 300.0,19.8 300.5,20.0 301.0,19.9 301.5,20.3 302.0,19.9 302.5,20.1 303.0,20.1 303.5,20.4 304.0,20.5 304.5,20.7 305.0,20.3 305.5,19.9 306.0,19.6 306.5,19.5 307.0,19.9 307.5,19.6 308.0,19.9 308.5,20.3 309.0,20.4 309.5,20.5 310.0,20.1 310.5,20.1 311.0,20.0 311.5,19.9 312.0,19.7 312.5,20.1 313.0,19.9 313.5,20.2 314.0,20.2 314.5,20.2 315.0,20.3 315.5,20.1 316.0,20.4 316.5,20.1 317.0,20.4 317.5,20.5 318.0,20.4 318.5,20.7 319.0,20.8 319.5,20.6 320.0,20.6 320.5,20.7 321.0,20.3 321.5,20.2 322.0,20.2 322.5,19.7 323.0,19.3 323.5,19.6 324.0,19.4 324.5,19.6 325.0,19.8 325.5,20.4 326.0,20.6 326.5,20.5 327.0,20.3 327.5,19.9 328.0,19.5 328.5,19.5 329.0,19.4 329.5,19.5 330.0,19.9 330.5,19.7 331.0,20.0 331.5,19.8 332.0,19.8 332.5,20.1 333.0,20.1 333.5,20.1 334.0,20.6 334.5,20.7 335.0,20.8 335.5,20.8 336.0,20.6 336.5,20.8 337.0,20.7 337.5,20.7 338.0,20.6 338.5,20.4 339.0,20.2 339.5,20.0 340.0,20.0 340.5,20.1 341.0,19.7 341.5,20.1 342.0,20.0 342.5,20.1 343.0,20.5 343.5,21.1 344.0,22.1 344.0,23.2 343.5,24.1 343.0,24.7 342.5,24.9 342.0,25.2 341.5,25.2 341.0,25.7 340.5,25.1 340.0,25.0 339.5,25.3 339.0,25.2 338.5,24.7 338.0,24.6 337.5,24.5 337.0,24.7 336.5,24.5 336.0,24.7 335.5,24.3 335.0,24.6 334.5,24.7 334.0,24.6 333.5,24.9 333.0,25.2 332.5,25.3 332.0,25.4 331.5,25.6 331.0,25.4 330.5,25.8 330.0,25.5 329.5,25.8 329.0,26.0 328.5,25.6 328.0,25.6 327.5,25.4 327.0,25.0 326.5,24.8 326.0,24.6 325.5,24.8 325.0,25.4 324.5,25.3 324.0,25.8 323.5,25.3 323.0,26.0 322.5,25.6 322.0,24.8 321.5,24.8 321.0,24.8 320.5,24.4 320.0,24.6 319.5,24.6 319.0,24.6 318.5,24.4 318.0,24.8 317.5,24.5 317.0,24.8 316.5,25.0 316.0,24.8 315.5,25.1 315.0,24.7 314.5,25.1 314.0,25.2 313.5,24.9 313.0,25.4 312.5,25.1 312.0,25.4 311.5,25.4 311.0,25.4 310.5,25.2 310.0,25.3 309.5,24.9 309.0,24.7 308.5,24.8 308.0,25.3 307.5,25.7 307.0,25.6 306.5,25.4 306.0,25.8 305.5,25.6 305.0,25.0 304.5,24.4 304.0,24.6 303.5,24.7 303.0,25.3 302.5,24.9 302.0,25.2 301.5,24.9 301.0,25.3 300.5,25.3 300.0,25.5 299.5,25.1 299.0,24.4 298.5,23.2"/>
<polygon points="344.0,22.2 344.5,21.9 345.0,21.6 345.5,21.5 346.0,21.5 346.5,21.5 347.0,21.4 347.5,21.6 348.0,21.4 348.5,21.5 349.0,21.4 349.5,21.1 350.0,20.9 350.5,20.9 351.0,20.8 351.5,20.8 352.0,21.0 352.5,21.2 353.0,21.2 353.5,21.4 354.0,21.6 354.5,21.5 355.0,21.4 355.5,21.3 356.0,21.4 356.5,21.3 357.0,21.2 357.5,21.2 358.0,21.1 358.5,21.1 359.0,21.2 359.5,21.3 360.0,21.2 360.5,21.1 361.0,21.0 361.5,21.0 362.0,21.0 362.5,21.1 363.0,21.2 363.5,21.3 364.0,21.5 364.5,21.4 365.0,21.4 365.5,21.4 366.0,21.4 366.5,21.3 367.0,21.3 367.5,21.3 368.0,21.4 368.5,21.3 369.0,21.3 369.5,21.5 370.0,21.6 370.5,21.5 371.0,21.6 371.5,21.6 372.0,21.5 372.5,21.7 373.0,21.6 373.5,21.6 374.0,21.5 374.5,21.5 375.0,21.5 375.5,21.4 376.0,21.3 376.5,21.1 377.0,21.1 377.5,21.1 378.0,21.1 378.5,21.6 379.0,22.2 379.0,23.0 378.5,23.6 378.0,24.0 377.5,24.1 377.0,24.2 376.5,24.1 376.0,24.1 375.5,23.8 375.0,23.8 374.5,23.6 374.0,23.6 373.5,23.7 373.0,23.6 372.5,23.5 372.0,23.7 371.5,23.6 371.0,23.6 370.5,23.6 370.0,23.7 369.5,23.7 369.0,23.9 368.5,23.9 368.0,23.7 367.5,23.8 367.0,23.8 366.5,23.8 366.0,23.8 365.5,23.8 365.0,23.8 364.5,23.7 364.0,23.7 363.5,23.9 363.0,24.0 362.5,24.0 362.0,24.2 361.5,24.0 361.0,24.2 360.5,24.1 360.0,23.9 359.5,23.9 359.0,24.0 358.5,24.2 358.0,24.0 357.5,24.2 357.0,24.0 356.5,23.8 356.0,23.8 355.5,23.8 355.0,23.7 354.5,23.6 354.0,23.7 353.5,23.9 353.0,24.2 352.5,24.0 352.0,24.3 351.5,24.5 351.0,24.4 350.5,24.3 350.0,24.3 349.5,24.1 349.0,23.8 348.5,23.6 348.0,23.8 347.5,23.6 347.0,23.8 346.5,23.7 346.0,23.6 345.5,23.6 345.0,23.6 344.5,23.3 344.0,22.9"/>
<polygon points="379.0,22.5 379.5,22.5 380.0,22.4 380.5,22.4 381.0,22.4 381.5,22.4 382.0,22.4 382.5,22.5 382.5,22.7 382.0,22.8 381.5,22.8 381.0,22.8 380.5,22.8 380.0,22.8 379.5,22.8 379.0,22.7"/>
<polygon points="382.5,22.5 383.0,22.2 383.5,22.0 384.0,22.1 384.5,22.0 385.0,22.0 385.5,21.8 386.0,21.8 386.5,21.9 387.0,21.7 387.5,21.8 388.0,21.7 388.5,21.8 389.0,21.7 389.5,21.7 390.0,21.7 390.5,22.3 390.5,23.0 390.0,23.4 389.5,23.6 389.0,23.6 388.5,23.4 388.0,23.4 387.5,23.3 387.0,23.5 386.5,23.3 386.0,23.4 385.5,23.4 385.0,23.2 384.5,23.2 384.0,23.2 383.5,23.3 383.0,23.0 382.5,22.7"/>
<polygon points="390.5,22.2 391.0,21.6 391.5,20.9 392.0,21.1 392.5,20.8 393.0,20.7 393.5,20.9 394.0,20.9 394.5,21.1 395.0,21.0 395.5,21.2 396.0,21.2 396.5,21.3 397.0,21.2 397.5,21.4 398.0,21.1 398.5,21.2 399.0,21.2 399.5,20.9 400.0,20.8 400.5,21.1 401.0,20.8 401.5,20.7 402.0,20.9 402.5,20.9 403.0,20.7 403.5,20.8 404.0,20.7 404.5,20.9 405.0,21.0 405.5,21.0 406.0,21.1 406.5,21.3 407.0,21.1 407.5,21.1 408.0,20.9 408.5,20.8 409.0,20.5 409.5,20.5 410.0,20.4 410.5,20.7 411.0,20.7 411.5,20.9 412.0,20.9 412.5,20.8 413.0,20.9 413.5,20.4 414.0,20.3 414.5,20.5 415.0,20.2 415.5,20.4 416.0,20.3 416.5,20.3 417.0,20.7 417.5,20.7 418.0,20.4 418.5,20.3 419.0,20.2 419.5,20.4 420.0,20.5 420.5,20.5 421.0,20.6 421.5,21.0 422.0,21.2 422.5,21.0 423.0,21.1 423.5,20.9 424.0,20.9 424.5,20.9 425.0,20.5 425.5,20.4 426.0,20.5 426.5,20.4 427.0,20.5 427.5,20.3 428.0,20.6 428.5,20.7 429.0,20.6 429.5,20.6 430.0,20.5 430.5,20.7 431.0,20.9 431.5,20.7 432.0,20.9 432.5,20.9 433.0,20.8 433.5,20.7 434.0,20.7 434.5,20.5 435.0,20.5 435.5,20.7 436.0,21.0 436.5,21.9 436.5,23.3 436.0,24.0 435.5,24.6 435.0,24.6 434.5,24.8 434.0,24.4 433.5,24.3 433.0,24.3 432.5,24.4 432.0,24.3 431.5,24.6 431.0,24.4 430.5,24.3 430.0,24.9 429.5,24.7 429.0,24.7 428.5,24.3 428.0,24.8 427.5,25.1 427.0,24.5 426.5,24.6 426.0,24.5 425.5,24.7 425.0,24.8 424.5,24.5 424.0,24.3 423.5,24.4 423.0,24.0 422.5,24.2 422.0,24.2 421.5,24.3 421.0,24.5 420.5,24.9 420.0,24.5 419.5,24.9 419.0,25.0 418.5,24.8 418.0,24.6 417.5,24.4 417.0,24.4 416.5,25.0 416.0,25.1 415.5,24.8 415.0,25.0 414.5,24.6 414.0,25.0 413.5,24.7 413.0,24.4 412.5,24.5 412.0,24.3 411.5,24.5 411.0,24.5 410.5,24.5 410.0,24.6 409.5,24.8 409.0,24.8 408.5,24.4 408.0,24.3 407.5,24.1 407.0,24.2 406.5,23.9 406.0,24.0 405.5,24.1 405.0,24.3 404.5,24.3 404.0,24.6 403.5,24.3 403.0,24.5 402.5,24.5 402.0,24.3 401.5,24.5 401.0,24.3 400.5,24.0 400.0,24.5 399.5,24.2 399.0,23.9 398.5,24.1 398.0,24.1 397.5,23.9 397.0,24.1 396.5,23.8 396.0,23.9 395.5,23.9 395.0,24.3 394.5,24.0 394.0,24.3 393.5,24.1 393.0,24.7 392.5,24.6 392.0,24.1 391.5,24.4 391.0,23.5 390.5,23.0"/>
<polygon points="436.5,22.1 437.0,21.3 437.5,20.9 438.0,21.1 438.5,20.8 439.0,21.0 439.5,21.0 440.0,20.8 440.5,20.7 441.0,20.7 441.5,20.8 442.0,20.7 442.5,20.2 443.0,20.3 443.5,20.0 444.0,20.1 444.5,19.9 445.0,19.8 445.5,19.6 446.0,20.1 446.5,20.0 447.0,20.1 447.5,20.3 448.0,20.3 448.5,20.5 449.0,20.4 449.5,20.3 450.0,20.4 450.5,19.8 451.0,20.0 451.5,19.8 452.0,20.0 452.5,20.1 453.0,20.2 453.5,20.2 454.0,20.0 454.5,20.1 455.0,20.2 455.5,20.4 456.0,20.4 456.5,20.5 457.0,20.6 457.5,20.7 458.0,21.0 458.5,20.8 459.0,21.0 459.5,20.8 460.0,20.8 460.5,20.9 461.0,21.0 461.5,21.1 462.0,21.0 462.5,20.8 463.0,20.8 463.5,20.8 464.0,20.9 464.5,21.0 465.0,21.0 465.5,21.0 466.0,20.9 466.5,20.7 467.0,20.4 467.5,20.3 468.0,20.3 468.5,20.3 469.0,20.0 469.5,19.7 470.0,19.8 470.5,20.1 471.0,20.3 471.5,19.9 472.0,20.5 472.5,20.4 473.0,20.3 473.5,20.2 474.0,20.6 474.5,20.5 475.0,20.7 475.5,20.8 476.0,20.9 476.5,21.0 477.0,20.8 477.5,20.9 478.0,20.8 478.5,21.0 479.0,20.9 479.5,20.8 480.0,21.0 480.5,21.1 481.0,20.9 481.5,20.8 482.0,21.0 482.5,20.7 483.0,21.0 483.5,20.9 484.0,21.0 484.5,20.8 485.0,20.7 485.5,20.3 486.0,20.2 486.5,20.2 487.0,20.4 487.5,20.1 488.0,20.2 488.5,20.0 489.0,19.6 489.5,19.4 490.0,20.0 490.5,20.1 491.0,20.1 491.5,20.3 492.0,20.6 492.5,20.4 493.0,20.5 493.5,20.3 494.0,20.3 494.5,20.2 495.0,20.4 495.5,20.2 496.0,20.4 496.5,20.3 497.0,19.8 497.5,19.7 498.0,19.8 498.5,20.1 499.0,19.9 499.5,20.4 500.0,20.4 500.5,20.2 501.0,20.4 501.5,20.7 502.0,20.6 502.5,20.4 503.0,20.5 503.5,20.4 504.0,20.1 504.5,20.2 505.0,19.9 505.5,19.6 506.0,19.8 506.5,19.7 507.0,19.8 507.5,19.7 508.0,20.0 508.5,19.7 509.0,20.0 509.5,20.3 510.0,20.5 510.5,20.4 511.0,20.6 511.5,20.9 512.0,20.6 512.5,20.7 513.0,20.5 513.5,20.3 514.0,20.1 514.5,20.2 515.0,20.1 515.5,20.0 516.0,20.3 516.5,20.6 517.0,20.9 517.5,20.8 518.0,20.8 518.5,20.6 519.0,20.5 519.5,20.5 520.0,20.4 520.5,20.3 521.0,20.2 521.5,20.2 522.0,20.0 522.5,20.1 523.0,20.1 523.5,20.4 524.0,20.3 524.5,20.6 525.0,20.6 525.5,20.8 526.0,20.8 526.5,20.7 527.0,20.8 527.5,21.0 528.0,20.9 528.5,21.3 529.0,22.1 529.0,23.1 528.5,23.9 528.0,24.4 527.5,24.2 527.0,24.5 526.5,24.5 526.0,24.4 525.5,24.4 525.0,24.6 524.5,24.5 524.0,24.9 523.5,25.0 523.0,25.1 522.5,24.9 522.0,25.3 521.5,25.2 521.0,25.1 520.5,24.8 520.0,25.0 519.5,24.7 519.0,24.8 518.5,24.5 518.0,24.4 517.5,24.5 517.0,24.3 516.5,24.7 516.0,24.9 515.5,25.4 515.0,25.3 514.5,25.1 514.0,25.4 513.5,25.1 513.0,24.8 512.5,24.5 512.0,24.4 511.5,24.5 511.0,24.4 510.5,24.7 510.0,24.7 509.5,24.7 509.0,25.4 508.5,25.7 508.0,25.3 507.5,25.4 507.0,25.4 506.5,25.4 506.0,25.6 505.5,25.8 505.0,25.2 504.5,25.2 504.0,25.2 503.5,24.6 503.0,24.8 502.5,25.0 502.0,24.5 501.5,24.5 501.0,24.9 500.5,25.0 500.0,24.7 499.5,24.9 499.0,25.2 498.5,24.8 498.0,25.4 497.5,25.5 497.0,25.5 496.5,25.1 496.0,25.0 495.5,24.9 495.0,25.0 494.5,25.0 494.0,25.0 493.5,24.8 493.0,24.5 492.5,24.6 492.0,24.7 491.5,25.0 491.0,25.1 490.5,25.1 490.0,25.1 489.5,26.1 489.0,25.6 488.5,25.4 488.0,24.9 487.5,25.2 487.0,24.7 486.5,24.8 486.0,24.8 485.5,25.2 485.0,24.5 484.5,24.6 484.0,24.2 483.5,24.4 483.0,24.3 482.5,24.3 482.0,24.2 481.5,24.2 481.0,24.2 480.5,24.2 480.0,24.2 479.5,24.6 479.0,24.2 478.5,24.0 478.0,24.2 477.5,24.3 477.0,24.5 476.5,24.4 476.0,24.4 475.5,24.4 475.0,24.3 474.5,24.7 474.0,24.7 473.5,25.2 473.0,24.8 472.5,24.8 472.0,24.7 471.5,25.2 471.0,24.8 470.5,25.0 470.0,25.4 469.5,25.6 469.0,25.3 468.5,25.1 468.0,25.0 467.5,25.2 467.0,24.7 466.5,24.7 466.0,24.3 465.5,24.2 465.0,24.3 464.5,24.2 464.0,24.3 463.5,24.5 463.0,24.4 462.5,24.3 462.0,24.1 461.5,24.0 461.0,24.2 460.5,24.3 460.0,24.5 459.5,24.3 459.0,24.2 458.5,24.4 458.0,24.2 457.5,24.4 457.0,24.6 456.5,24.5 456.0,24.8 455.5,24.9 455.0,25.2 454.5,24.9 454.0,24.9 453.5,24.9 453.0,24.8 452.5,25.2 452.0,25.3 451.5,25.5 451.0,25.3 450.5,25.3 450.0,24.8 449.5,24.9 449.0,24.8 448.5,24.6 448.0,25.0 447.5,24.8 447.0,24.9 446.5,25.4 446.0,24.9 445.5,25.3 445.0,25.3 444.5,25.1 444.0,25.2 443.5,24.9 443.0,25.0 442.5,24.9 442.0,24.4 441.5,24.4 441.0,24.5 440.5,24.6 440.0,24.6 439.5,24.2 439.0,24.1 438.5,24.4 438.0,24.3 437.5,24.4 437.0,23.8 436.5,23.1"/>
<polygon points="529.0,22.4 529.5,22.0 530.0,21.7 530.5,21.5 531.0,21.4 531.5,21.3 532.0,21.3 532.5,21.4 533.0,21.4 533.5,21.5 534.0,21.6 534.5,21.7 535.0,21.9 535.5,22.0 536.0,22.1 536.5,22.2 537.0,22.3 537.5,22.4 537.5,22.8 537.0,22.9 536.5,23.0 536.0,23.1 535.5,23.2 535.0,23.3 534.5,23.5 534.0,23.6 533.5,23.7 533.0,23.8 532.5,23.8 532.0,23.9 531.5,23.9 531.0,23.8 530.5,23.7 530.0,23.5 529.5,23.2 529.0,22.8"/></svg><span>INSTRUMENTS</span></div>
<div class="abs" style="left:8px;top:311.5px;width:72px;height:1.8px;background:#18191d"></div><div class="lrow" style="top:313.3px"><div class="m">M</div><div class="sl"></div><div class="kn"></div></div>
<div class="stem" style="top:313px;transform:translateY(0.30px)"><i style="left:21.0px"></i><i style="left:67.0px"></i><i style="left:113.0px"></i><i style="left:159.0px"></i><i style="left:205.0px"></i><i style="left:251.0px"></i><i style="left:297.0px"></i><i style="left:343.0px"></i><i style="left:389.0px"></i><i style="left:435.0px"></i><i style="left:481.0px"></i><i style="left:527.0px"></i><svg width="552" height="42" viewBox="0 0 552 42" fill="#4559c8"><polygon points="22.8,22.3 23.3,21.8 23.8,21.5 24.3,21.3 24.8,21.4 25.3,21.3 25.8,21.4 26.3,21.5 26.8,21.6 27.3,21.6 27.8,21.7 28.3,21.6 28.8,21.7 29.3,21.7 29.8,21.8 30.3,21.7 30.8,21.7 31.3,21.5 31.8,21.4 32.3,21.5 32.8,21.3 33.3,21.2 33.8,21.1 34.3,21.1 34.8,21.1 35.3,21.2 35.8,21.4 36.3,21.3 36.8,21.3 37.3,21.4 37.8,21.4 38.3,21.5 38.8,21.6 39.3,21.6 39.8,21.6 40.3,21.6 40.8,21.8 41.3,21.7 41.8,21.8 42.3,21.7 42.8,21.7 43.3,21.7 43.8,21.7 44.3,21.8 44.8,21.8 45.3,21.7 45.8,21.8 46.3,21.8 46.8,21.7 47.3,21.7 47.8,21.8 48.3,21.7 48.8,21.7 49.3,21.7 49.8,21.7 50.3,21.6 50.8,21.6 51.3,21.5 51.8,21.2 52.3,21.1 52.8,21.2 53.3,21.3 53.8,21.2 54.3,21.4 54.8,21.6 55.3,21.5 55.8,21.4 56.3,21.6 56.8,21.4 57.3,21.4 57.8,21.5 58.3,21.5 58.8,21.5 59.3,21.7 59.8,21.6 60.3,21.6 60.8,21.6 61.3,21.6 61.8,21.7 62.3,21.7 62.8,21.8 63.3,21.8 63.8,21.7 64.3,21.7 64.8,21.8 65.3,21.8 65.8,21.7 66.3,21.7 66.8,21.6 67.3,21.5 67.8,21.4 68.3,21.2 68.8,21.2 69.3,21.0 69.8,21.0 70.3,21.3 70.8,21.3 71.3,21.2 71.8,21.0 72.3,21.1 72.8,21.1 73.3,21.2 73.8,21.2 74.3,21.3 74.8,21.3 75.3,21.5 75.8,21.6 76.3,21.4 76.8,21.5 77.3,21.5 77.8,21.6 78.3,21.5 78.8,21.3 79.3,21.3 79.8,21.2 80.3,21.0 80.8,21.1 81.3,21.2 81.8,21.0 82.3,21.1 82.8,21.1 83.3,21.2 83.8,21.2 84.3,21.3 84.8,21.4 85.3,21.6 85.8,21.7 86.3,21.5 86.8,21.6 87.3,21.5 87.8,21.6 88.3,21.6 88.8,21.6 89.3,21.6 89.8,21.7 90.3,21.7 90.8,21.7 91.3,21.7 91.8,21.8 92.3,21.8 92.8,21.7 93.3,21.8 93.8,21.7 94.3,21.7 94.8,21.6 95.3,21.7 95.8,21.6 96.3,21.7 96.8,21.6 97.3,21.4 97.8,21.5 98.3,21.5 98.8,21.5 99.3,21.5 99.8,21.6 100.3,21.6 100.8,21.6 101.3,21.4 101.8,21.4 102.3,21.4 102.8,21.7 103.3,22.1 103.3,23.2 102.8,23.6 102.3,23.9 101.8,23.9 101.3,23.7 100.8,23.5 100.3,23.7 99.8,23.5 99.3,23.6 98.8,23.6 98.3,23.6 97.8,23.7 97.3,23.7 96.8,23.6 96.3,23.5 95.8,23.5 95.3,23.4 94.8,23.5 94.3,23.5 93.8,23.5 93.3,23.4 92.8,23.5 92.3,23.4 91.8,23.4 91.3,23.4 90.8,23.5 90.3,23.5 89.8,23.5 89.3,23.7 88.8,23.6 88.3,23.6 87.8,23.5 87.3,23.7 86.8,23.6 86.3,23.7 85.8,23.6 85.3,23.7 84.8,23.8 84.3,24.0 83.8,24.0 83.3,23.9 82.8,24.1 82.3,24.0 81.8,24.1 81.3,24.0 80.8,24.0 80.3,24.3 79.8,24.1 79.3,23.8 78.8,23.8 78.3,23.7 77.8,23.6 77.3,23.8 76.8,23.7 76.3,23.7 75.8,23.6 75.3,23.7 74.8,23.9 74.3,23.9 73.8,24.0 73.3,24.0 72.8,24.1 72.3,24.1 71.8,24.3 71.3,24.1 70.8,23.8 70.3,23.9 69.8,24.3 69.3,24.0 68.8,23.8 68.3,24.1 67.8,23.7 67.3,23.8 66.8,23.6 66.3,23.5 65.8,23.6 65.3,23.4 64.8,23.3 64.3,23.5 63.8,23.4 63.3,23.4 62.8,23.4 62.3,23.5 61.8,23.5 61.3,23.6 60.8,23.5 60.3,23.6 59.8,23.6 59.3,23.6 58.8,23.7 58.3,23.7 57.8,23.7 57.3,23.7 56.8,23.7 56.3,23.6 55.8,23.7 55.3,23.7 54.8,23.7 54.3,23.7 53.8,24.0 53.3,24.0 52.8,24.1 52.3,24.2 51.8,23.9 51.3,23.7 50.8,23.6 50.3,23.6 49.8,23.5 49.3,23.5 48.8,23.6 48.3,23.5 47.8,23.4 47.3,23.5 46.8,23.5 46.3,23.5 45.8,23.4 45.3,23.5 44.8,23.5 44.3,23.4 43.8,23.6 43.3,23.6 42.8,23.4 42.3,23.4 41.8,23.4 41.3,23.6 40.8,23.5 40.3,23.5 39.8,23.6 39.3,23.7 38.8,23.6 38.3,23.8 37.8,23.7 37.3,23.8 36.8,23.9 36.3,24.0 35.8,23.8 35.3,23.9 34.8,24.1 34.3,24.2 33.8,24.1 33.3,24.1 32.8,23.9 32.3,23.8 31.8,23.8 31.3,23.7 30.8,23.5 30.3,23.6 29.8,23.5 29.3,23.5 28.8,23.4 28.3,23.6 27.8,23.6 27.3,23.6 26.8,23.7 26.3,23.6 25.8,23.8 25.3,24.0 24.8,23.8 24.3,23.9 23.8,23.6 23.3,23.5 22.8,22.9"/>
<polygon points="114.7,22.3 115.2,21.7 115.7,21.1 116.2,20.9 116.7,20.8 117.2,20.3 117.7,20.4 118.2,20.5 118.7,20.9 119.2,20.7 119.7,20.5 120.2,20.0 120.7,19.6 121.2,19.4 121.7,19.8 122.2,19.5 122.7,19.8 123.2,19.8 123.7,19.5 124.2,19.9 124.7,19.6 125.2,19.9 125.7,19.9 126.2,20.6 126.7,20.8 127.2,20.8 127.7,20.9 128.2,21.2 128.7,21.2 129.2,21.0 129.7,20.7 130.2,20.4 130.7,20.0 131.2,19.6 131.7,19.5 132.2,19.6 132.7,19.9 133.2,20.5 133.7,21.0 134.2,21.2 134.7,21.4 135.2,21.3 135.7,21.4 136.2,21.3 136.7,21.3 137.2,21.3 137.7,21.2 138.2,20.9 138.7,20.4 139.2,19.7 139.7,18.9 140.2,19.6 140.7,19.9 141.2,19.7 141.7,19.7 142.2,20.1 142.7,20.6 143.2,20.8 143.7,21.1 144.2,20.9 144.7,21.2 145.2,21.4 145.7,21.4 146.2,21.3 146.7,21.5 147.2,21.3 147.7,21.4 148.2,21.3 148.7,21.4 149.2,21.4 149.7,21.5 150.2,21.4 150.7,21.3 151.2,21.5 151.7,21.4 152.2,21.3 152.7,21.5 153.2,21.3 153.7,21.3 154.2,21.3 154.7,21.3 155.2,21.3 155.7,21.4 156.2,21.3 156.7,21.3 157.2,21.4 157.7,21.5 158.2,21.5 158.7,21.4 159.2,21.3 159.7,21.4 160.2,21.4 160.7,21.5 161.2,21.5 161.7,21.4 162.2,21.3 162.7,21.3 163.2,21.4 163.7,21.3 164.2,21.4 164.7,21.3 165.2,21.3 165.7,21.4 166.2,21.4 166.7,21.3 167.2,21.3 167.7,21.5 168.2,21.3 168.7,21.3 169.2,21.5 169.7,21.4 170.2,21.5 170.7,21.5 171.2,21.3 171.7,21.4 172.2,21.3 172.7,21.4 173.2,21.5 173.7,21.3 174.2,21.5 174.7,21.3 175.2,21.2 175.7,21.1 176.2,20.8 176.7,20.5 177.2,20.4 177.7,20.3 178.2,20.0 178.7,20.4 179.2,20.1 179.7,20.4 180.2,20.8 180.7,20.8 181.2,20.7 181.7,20.4 182.2,20.5 182.7,20.7 183.2,20.7 183.7,20.9 184.2,21.1 184.7,21.1 185.2,21.3 185.7,21.3 186.2,21.3 186.7,21.4 187.2,21.5 187.7,21.4 188.2,21.3 188.7,21.3 189.2,21.4 189.7,21.5 190.2,21.4 190.7,21.3 191.2,21.0 191.7,20.8 192.2,20.2 192.7,19.6 193.2,19.8 193.7,19.8 194.2,19.8 194.7,19.9 195.2,20.2 195.7,20.3 196.2,20.4 196.7,20.9 197.2,20.8 197.7,21.1 198.2,21.3 198.7,20.9 199.2,20.7 199.7,20.3 200.2,19.8 200.7,19.5 201.2,19.2 201.7,19.1 202.2,19.0 202.7,18.7 203.2,19.1 203.7,19.8 204.2,19.7 204.7,19.3 205.2,19.3 205.7,18.7 206.2,18.8 206.7,20.0 207.2,21.5 207.2,23.8 206.7,25.0 206.2,26.4 205.7,26.7 205.2,26.0 204.7,26.0 204.2,25.4 203.7,25.3 203.2,25.9 202.7,26.4 202.2,26.1 201.7,26.0 201.2,26.1 200.7,25.6 200.2,25.5 199.7,25.0 199.2,24.7 198.7,24.1 198.2,23.9 197.7,24.1 197.2,24.4 196.7,24.3 196.2,24.8 195.7,25.1 195.2,24.9 194.7,25.3 194.2,25.2 193.7,25.4 193.2,25.2 192.7,25.4 192.2,24.8 191.7,24.5 191.2,24.2 190.7,23.9 190.2,23.8 189.7,23.8 189.2,23.8 188.7,23.8 188.2,23.9 187.7,23.9 187.2,23.8 186.7,23.7 186.2,23.9 185.7,23.9 185.2,23.8 184.7,24.2 184.2,24.2 183.7,24.2 183.2,24.5 182.7,24.6 182.2,24.8 181.7,25.0 181.2,24.4 180.7,24.6 180.2,24.5 179.7,24.8 179.2,25.1 178.7,24.7 178.2,25.1 177.7,24.9 177.2,24.8 176.7,24.5 176.2,24.3 175.7,24.0 175.2,24.0 174.7,23.9 174.2,23.7 173.7,23.9 173.2,23.7 172.7,23.8 172.2,23.8 171.7,23.8 171.2,23.8 170.7,23.8 170.2,23.6 169.7,23.8 169.2,23.6 168.7,23.9 168.2,23.8 167.7,23.6 167.2,23.9 166.7,23.8 166.2,23.7 165.7,23.8 165.2,23.9 164.7,23.8 164.2,23.8 163.7,23.8 163.2,23.9 162.7,24.0 162.2,24.0 161.7,23.8 161.2,23.7 160.7,23.8 160.2,23.6 159.7,23.7 159.2,23.9 158.7,23.8 158.2,23.7 157.7,23.7 157.2,23.7 156.7,23.8 156.2,23.9 155.7,23.8 155.2,23.8 154.7,24.0 154.2,23.9 153.7,23.8 153.2,23.8 152.7,23.8 152.2,24.0 151.7,23.9 151.2,23.8 150.7,23.8 150.2,23.8 149.7,23.7 149.2,23.9 148.7,23.8 148.2,23.8 147.7,23.8 147.2,23.8 146.7,23.7 146.2,23.9 145.7,23.9 145.2,23.8 144.7,24.0 144.2,24.2 143.7,24.0 143.2,24.5 142.7,24.7 142.2,24.9 141.7,25.7 141.2,25.5 140.7,25.3 140.2,25.4 139.7,26.1 139.2,25.6 138.7,24.6 138.2,24.2 137.7,24.1 137.2,23.8 136.7,23.9 136.2,23.8 135.7,23.7 135.2,23.9 134.7,23.8 134.2,24.1 133.7,24.2 133.2,24.8 132.7,25.1 132.2,25.4 131.7,25.4 131.2,25.3 130.7,25.0 130.2,24.8 129.7,24.3 129.2,24.4 128.7,24.0 128.2,24.2 127.7,24.4 127.2,24.3 126.7,24.5 126.2,24.7 125.7,25.0 125.2,25.1 124.7,25.9 124.2,25.3 123.7,25.9 123.2,25.6 122.7,25.3 122.2,25.4 121.7,25.2 121.2,25.8 120.7,25.9 120.2,25.3 119.7,24.9 119.2,24.6 118.7,24.3 118.2,24.8 117.7,24.8 117.2,24.7 116.7,24.6 116.2,24.4 115.7,24.2 115.2,23.6 114.7,22.9"/>
<polygon points="298.7,22.1 299.2,21.0 299.7,20.6 300.2,20.9 300.7,20.4 301.2,20.7 301.7,20.6 302.2,20.5 302.7,20.3 303.2,20.7 303.7,20.7 304.2,20.9 304.7,20.7 305.2,20.4 305.7,20.9 306.2,20.4 306.7,20.5 307.2,20.4 307.7,20.7 308.2,20.6 308.7,20.5 309.2,20.5 309.7,20.7 310.2,20.8 310.7,20.5 311.2,20.7 311.7,20.5 312.2,20.5 312.7,20.5 313.2,20.3 313.7,20.4 314.2,20.5 314.7,20.5 315.2,20.7 315.7,20.6 316.2,20.5 316.7,20.4 317.2,20.4 317.7,20.8 318.2,20.8 318.7,20.8 319.2,20.5 319.7,20.8 320.2,20.6 320.7,20.5 321.2,20.3 321.7,20.5 322.2,20.6 322.7,20.9 323.2,20.5 323.7,20.6 324.2,20.3 324.7,20.8 325.2,20.4 325.7,20.3 326.2,20.8 326.7,20.6 327.2,20.4 327.7,20.3 328.2,20.7 328.7,20.8 329.2,20.7 329.7,20.6 330.2,20.4 330.7,20.3 331.2,20.9 331.7,20.5 332.2,20.3 332.7,20.5 333.2,20.7 333.7,20.7 334.2,20.7 334.7,20.6 335.2,20.5 335.7,20.6 336.2,20.4 336.7,20.6 337.2,20.7 337.7,20.3 338.2,20.6 338.7,20.7 339.2,20.7 339.7,20.6 340.2,20.6 340.7,20.7 341.2,20.7 341.7,20.9 342.2,20.6 342.7,20.5 343.2,20.9 343.7,21.7 343.7,23.6 343.2,24.4 342.7,24.5 342.2,24.6 341.7,24.4 341.2,24.4 340.7,24.4 340.2,24.7 339.7,24.7 339.2,24.7 338.7,24.5 338.2,24.7 337.7,24.8 337.2,24.4 336.7,24.7 336.2,24.8 335.7,24.4 335.2,24.5 334.7,24.8 334.2,24.4 333.7,24.6 333.2,24.4 332.7,24.6 332.2,25.1 331.7,24.8 331.2,24.3 330.7,24.7 330.2,25.0 329.7,24.5 329.2,24.4 328.7,24.5 328.2,24.6 327.7,24.8 327.2,24.7 326.7,24.5 326.2,24.4 325.7,24.9 325.2,24.9 324.7,24.5 324.2,24.8 323.7,24.6 323.2,24.8 322.7,24.4 322.2,24.5 321.7,24.8 321.2,25.0 320.7,24.8 320.2,24.5 319.7,24.2 319.2,24.8 318.7,24.5 318.2,24.4 317.7,24.4 317.2,24.7 316.7,24.8 316.2,24.6 315.7,24.5 315.2,24.7 314.7,24.8 314.2,24.7 313.7,24.7 313.2,25.0 312.7,24.6 312.2,24.7 311.7,24.6 311.2,24.3 310.7,24.7 310.2,24.4 309.7,24.6 309.2,24.5 308.7,24.8 308.2,24.5 307.7,24.5 307.2,24.8 306.7,24.6 306.2,24.9 305.7,24.3 305.2,24.9 304.7,24.5 304.2,24.4 303.7,24.4 303.2,24.3 302.7,24.7 302.2,24.7 301.7,24.5 301.2,24.5 300.7,24.6 300.2,24.2 299.7,24.4 299.2,24.2 298.7,23.1"/>
<polygon points="344.0,22.2 344.5,21.6 345.0,21.3 345.5,21.4 346.0,21.3 346.5,21.4 347.0,21.3 347.5,21.4 348.0,21.3 348.5,21.3 349.0,21.4 349.5,21.4 350.0,21.3 350.5,21.3 351.0,21.2 351.5,21.2 352.0,21.4 352.5,21.2 353.0,21.2 353.5,21.1 354.0,21.0 354.5,21.1 355.0,20.8 355.5,21.0 356.0,20.7 356.5,20.7 357.0,20.7 357.5,20.5 358.0,20.5 358.5,20.5 359.0,20.2 359.5,20.5 360.0,20.5 360.5,20.7 361.0,20.3 361.5,20.3 362.0,20.6 362.5,20.7 363.0,20.5 363.5,20.6 364.0,20.7 364.5,21.0 365.0,21.0 365.5,20.9 366.0,21.0 366.5,21.2 367.0,21.2 367.5,21.1 368.0,21.1 368.5,20.9 369.0,20.6 369.5,20.8 370.0,20.7 370.5,20.8 371.0,20.5 371.5,20.7 372.0,20.9 372.5,20.7 373.0,20.9 373.5,21.0 374.0,21.2 374.5,21.3 375.0,21.4 375.5,21.2 376.0,21.2 376.5,21.1 377.0,20.8 377.5,21.0 378.0,20.9 378.5,21.3 379.0,22.1 379.0,23.1 378.5,24.0 378.0,24.2 377.5,24.2 377.0,24.4 376.5,24.2 376.0,24.1 375.5,24.0 375.0,23.8 374.5,23.8 374.0,24.0 373.5,24.1 373.0,24.4 372.5,24.4 372.0,24.2 371.5,24.5 371.0,24.8 370.5,24.5 370.0,24.6 369.5,24.3 369.0,24.4 368.5,24.2 368.0,24.2 367.5,24.0 367.0,24.0 366.5,24.1 366.0,24.1 365.5,24.3 365.0,24.3 364.5,24.3 364.0,24.5 363.5,24.5 363.0,24.6 362.5,24.6 362.0,24.4 361.5,25.1 361.0,25.0 360.5,24.5 360.0,24.7 359.5,24.9 359.0,24.9 358.5,24.5 358.0,24.7 357.5,24.8 357.0,24.5 356.5,24.6 356.0,24.3 355.5,24.2 355.0,24.4 354.5,24.3 354.0,24.4 353.5,24.0 353.0,24.1 352.5,23.9 352.0,23.9 351.5,24.1 351.0,24.0 350.5,23.8 350.0,23.8 349.5,23.8 349.0,23.9 348.5,24.0 348.0,23.9 347.5,23.7 347.0,23.9 346.5,23.8 346.0,23.8 345.5,23.8 345.0,24.0 344.5,23.5 344.0,23.0"/>
<polygon points="390.3,22.3 390.8,21.7 391.3,21.4 391.8,21.4 392.3,21.4 392.8,21.4 393.3,21.4 393.8,21.2 394.3,21.0 394.8,21.0 395.3,20.5 395.8,20.1 396.3,20.1 396.8,20.2 397.3,20.3 397.8,20.3 398.3,20.8 398.8,21.1 399.3,21.1 399.8,21.4 400.3,21.4 400.8,21.3 401.3,21.4 401.8,21.5 402.3,21.5 402.8,21.4 403.3,21.5 403.8,21.5 404.3,21.6 404.8,21.6 405.3,21.5 405.8,21.3 406.3,21.3 406.8,20.8 407.3,20.4 407.8,20.2 408.3,19.8 408.8,19.7 409.3,19.5 409.8,19.3 410.3,20.0 410.8,19.3 411.3,19.6 411.8,19.6 412.3,19.5 412.8,19.3 413.3,19.9 413.8,20.1 414.3,20.6 414.8,20.5 415.3,20.4 415.8,20.0 416.3,19.9 416.8,19.8 417.3,19.5 417.8,19.9 418.3,20.2 418.8,20.5 419.3,20.8 419.8,20.9 420.3,20.7 420.8,20.6 421.3,20.7 421.8,20.4 422.3,19.8 422.8,19.4 423.3,20.0 423.8,20.7 424.3,21.3 424.8,21.1 425.3,21.4 425.8,21.4 426.3,21.2 426.8,21.0 427.3,21.0 427.8,20.8 428.3,20.5 428.8,19.9 429.3,20.0 429.8,19.7 430.3,20.0 430.8,20.1 431.3,20.2 431.8,19.4 432.3,19.7 432.8,20.0 433.3,20.6 433.8,21.2 434.3,21.3 434.8,21.4 435.3,21.4 435.8,21.5 436.3,21.4 436.8,21.5 437.3,21.4 437.8,21.4 438.3,21.5 438.8,21.5 439.3,21.5 439.8,21.4 440.3,21.4 440.8,21.5 441.3,21.6 441.8,21.4 442.3,21.3 442.8,21.3 443.3,20.8 443.8,20.3 444.3,20.0 444.8,19.3 445.3,19.3 445.8,19.6 446.3,19.8 446.8,20.3 447.3,20.2 447.8,19.5 448.3,20.2 448.8,19.7 449.3,19.7 449.8,19.5 450.3,20.0 450.8,20.0 451.3,20.5 451.8,20.9 452.3,21.3 452.8,21.4 453.3,21.5 453.8,21.4 454.3,21.5 454.8,21.5 455.3,21.5 455.8,21.4 456.3,21.5 456.8,21.5 457.3,21.4 457.8,21.3 458.3,21.5 458.8,21.4 459.3,21.4 459.8,21.5 460.3,21.4 460.8,21.5 461.3,21.5 461.8,21.3 462.3,21.5 462.8,21.4 463.3,21.4 463.8,21.4 464.3,21.2 464.8,20.8 465.3,20.3 465.8,20.3 466.3,21.0 466.8,21.1 467.3,21.5 467.8,21.4 468.3,21.4 468.8,21.1 469.3,20.7 469.8,20.3 470.3,19.7 470.8,19.7 471.3,19.7 471.8,19.3 472.3,19.6 472.8,19.3 473.3,19.3 473.8,19.8 474.3,20.2 474.8,20.5 475.3,20.4 475.8,20.7 476.3,20.9 476.8,21.0 477.3,21.1 477.8,21.2 478.3,21.3 478.8,21.5 479.3,21.4 479.8,21.2 480.3,21.0 480.8,20.6 481.3,20.4 481.8,20.8 482.3,21.3 482.8,21.4 483.3,21.5 483.8,21.3 484.3,21.2 484.8,21.0 485.3,20.9 485.8,20.5 486.3,20.4 486.8,20.3 487.3,20.7 487.8,21.0 488.3,20.7 488.8,20.5 489.3,20.4 489.8,20.1 490.3,20.1 490.8,20.2 491.3,20.0 491.8,20.5 492.3,20.5 492.8,20.8 493.3,20.8 493.8,21.1 494.3,21.3 494.8,21.3 495.3,21.5 495.8,21.5 496.3,21.4 496.8,21.2 497.3,21.1 497.8,21.0 498.3,20.5 498.8,20.1 499.3,20.2 499.8,19.8 500.3,19.9 500.8,19.8 501.3,19.9 501.8,20.2 502.3,20.6 502.8,20.6 503.3,20.5 503.8,20.5 504.3,20.3 504.8,19.9 505.3,20.0 505.8,20.2 506.3,20.3 506.8,20.8 507.3,21.0 507.8,21.1 508.3,20.8 508.8,20.6 509.3,20.7 509.8,20.4 510.3,20.1 510.8,20.0 511.3,19.5 511.8,19.8 512.3,19.7 512.8,20.0 513.3,20.4 513.8,20.8 514.3,21.0 514.8,21.0 515.3,21.2 515.8,21.3 516.3,21.3 516.8,21.4 517.3,21.4 517.8,21.6 518.3,21.4 518.8,21.3 519.3,21.2 519.8,21.1 520.3,21.0 520.8,20.8 521.3,20.6 521.8,20.6 522.3,20.9 522.8,20.9 523.3,21.3 523.8,21.2 524.3,21.5 524.8,21.4 525.3,21.5 525.8,21.6 526.3,21.5 526.8,21.5 527.3,21.4 527.8,21.6 528.3,21.7 528.8,22.1 528.8,23.2 528.3,23.5 527.8,23.6 527.3,23.7 526.8,23.6 526.3,23.7 525.8,23.5 525.3,23.8 524.8,23.9 524.3,23.7 523.8,23.9 523.3,23.8 522.8,24.3 522.3,24.2 521.8,24.7 521.3,24.4 520.8,24.4 520.3,24.3 519.8,24.2 519.3,24.2 518.8,24.0 518.3,23.8 517.8,23.6 517.3,23.9 516.8,23.8 516.3,24.0 515.8,23.8 515.3,24.0 514.8,24.2 514.3,24.1 513.8,24.3 513.3,24.7 512.8,25.1 512.3,25.3 511.8,25.7 511.3,25.7 510.8,25.0 510.3,25.2 509.8,24.9 509.3,24.7 508.8,24.5 508.3,24.5 507.8,24.1 507.3,24.1 506.8,24.4 506.3,25.1 505.8,24.9 505.3,25.1 504.8,25.4 504.3,24.7 503.8,24.9 503.3,24.7 502.8,24.7 502.3,24.6 501.8,24.9 501.3,25.1 500.8,25.3 500.3,25.4 499.8,25.3 499.3,25.0 498.8,25.3 498.3,24.5 497.8,24.3 497.3,24.0 496.8,24.0 496.3,23.9 495.8,23.8 495.3,23.7 494.8,23.9 494.3,23.8 493.8,24.1 493.3,24.5 492.8,24.4 492.3,24.9 491.8,24.7 491.3,25.1 490.8,24.8 490.3,25.0 489.8,25.2 489.3,24.7 488.8,24.6 488.3,24.5 487.8,24.1 487.3,24.5 486.8,25.0 486.3,24.7 485.8,24.9 485.3,24.4 484.8,24.2 484.3,24.1 483.8,23.9 483.3,23.7 482.8,23.8 482.3,24.0 481.8,24.3 481.3,25.0 480.8,24.7 480.3,24.1 479.8,24.1 479.3,23.9 478.8,23.7 478.3,23.9 477.8,24.0 477.3,24.2 476.8,24.3 476.3,24.4 475.8,24.6 475.3,24.9 474.8,24.6 474.3,24.9 473.8,25.2 473.3,25.6 472.8,26.1 472.3,25.9 471.8,26.2 471.3,25.7 470.8,25.6 470.3,25.6 469.8,24.7 469.3,24.5 468.8,24.1 468.3,23.9 467.8,23.7 467.3,23.7 466.8,24.2 466.3,24.2 465.8,25.0 465.3,25.0 464.8,24.3 464.3,24.1 463.8,23.8 463.3,23.7 462.8,23.8 462.3,23.8 461.8,23.9 461.3,23.7 460.8,23.6 460.3,23.7 459.8,23.7 459.3,23.9 458.8,23.8 458.3,23.8 457.8,24.0 457.3,24.0 456.8,23.7 456.3,23.7 455.8,23.9 455.3,23.8 454.8,23.7 454.3,23.8 453.8,23.7 453.3,23.8 452.8,23.8 452.3,24.0 451.8,24.1 451.3,24.9 450.8,25.3 450.3,25.2 449.8,25.6 449.3,25.7 448.8,25.5 448.3,24.9 447.8,25.8 447.3,24.9 446.8,24.9 446.3,25.4 445.8,25.7 445.3,25.6 444.8,26.1 444.3,25.1 443.8,24.9 443.3,24.5 442.8,23.8 442.3,23.9 441.8,23.8 441.3,23.6 440.8,23.6 440.3,23.8 439.8,23.7 439.3,23.7 438.8,23.7 438.3,23.6 437.8,23.7 437.3,23.9 436.8,23.7 436.3,23.9 435.8,23.8 435.3,23.8 434.8,23.8 434.3,24.0 433.8,24.1 433.3,24.6 432.8,25.3 432.3,25.4 431.8,25.5 431.3,25.0 430.8,25.1 430.3,24.9 429.8,25.5 429.3,25.4 428.8,25.1 428.3,24.8 427.8,24.2 427.3,24.1 426.8,24.3 426.3,24.0 425.8,23.7 425.3,23.9 424.8,23.9 424.3,23.8 423.8,24.5 423.3,25.1 422.8,25.6 422.3,25.6 421.8,24.8 421.3,24.6 420.8,24.6 420.3,24.3 419.8,24.2 419.3,24.2 418.8,24.7 418.3,25.1 417.8,25.2 417.3,25.7 416.8,25.3 416.3,25.2 415.8,25.1 415.3,24.6 414.8,24.7 414.3,24.6 413.8,25.2 413.3,25.4 412.8,26.0 412.3,26.0 411.8,25.5 411.3,25.6 410.8,25.6 410.3,25.1 409.8,25.7 409.3,25.8 408.8,25.4 408.3,25.6 407.8,25.0 407.3,25.0 406.8,24.5 406.3,24.0 405.8,23.9 405.3,23.7 404.8,23.7 404.3,23.6 403.8,23.6 403.3,23.8 402.8,23.7 402.3,23.6 401.8,23.6 401.3,23.7 400.8,23.9 400.3,23.7 399.8,23.9 399.3,24.3 398.8,24.2 398.3,24.2 397.8,24.9 397.3,25.1 396.8,25.2 396.3,24.9 395.8,25.0 395.3,24.7 394.8,24.2 394.3,24.3 393.8,24.0 393.3,23.9 392.8,23.9 392.3,23.9 391.8,23.7 391.3,23.7 390.8,23.4 390.3,22.9"/></svg><span>BASS</span></div>
<div class="abs" style="left:8px;top:355.09999999999997px;width:72px;height:1.8px;background:#18191d"></div><div class="lrow" style="top:356.9px"><div class="m">M</div><div class="sl"></div><div class="kn"></div></div>
<div class="stem" style="top:356px;transform:translateY(0.90px)"><i style="left:21.0px"></i><i style="left:67.0px"></i><i style="left:113.0px"></i><i style="left:159.0px"></i><i style="left:205.0px"></i><i style="left:251.0px"></i><i style="left:297.0px"></i><i style="left:343.0px"></i><i style="left:389.0px"></i><i style="left:435.0px"></i><i style="left:481.0px"></i><i style="left:527.0px"></i><svg width="552" height="42" viewBox="0 0 552 42" fill="#4559c8"><polygon points="1.3,22.5 1.8,22.5 2.3,22.5 2.8,22.5 3.3,22.5 3.8,22.5 4.3,22.5 4.8,22.5 5.3,22.5 5.8,22.5 6.3,22.5 6.8,22.5 7.3,22.5 7.8,22.5 8.3,22.5 8.8,22.5 9.3,22.5 9.8,22.5 10.3,22.5 10.8,22.5 11.3,22.5 11.8,22.5 12.3,22.5 12.8,22.5 13.3,22.5 13.8,22.5 14.3,22.5 14.8,22.5 15.3,22.5 15.8,22.5 16.3,22.5 16.8,22.5 17.3,22.5 17.8,22.5 18.3,22.5 18.3,22.7 17.8,22.7 17.3,22.7 16.8,22.7 16.3,22.7 15.8,22.7 15.3,22.7 14.8,22.7 14.3,22.7 13.8,22.7 13.3,22.7 12.8,22.7 12.3,22.7 11.8,22.7 11.3,22.7 10.8,22.7 10.3,22.7 9.8,22.7 9.3,22.7 8.8,22.7 8.3,22.7 7.8,22.7 7.3,22.7 6.8,22.7 6.3,22.7 5.8,22.7 5.3,22.7 4.8,22.7 4.3,22.7 3.8,22.7 3.3,22.7 2.8,22.7 2.3,22.7 1.8,22.7 1.3,22.7"/>
<polygon points="18.5,22.4 19.0,22.3 19.5,22.2 20.0,22.1 20.5,22.1 21.0,22.0 21.5,21.9 22.0,21.9 22.5,21.8 23.0,21.8 23.5,21.7 24.0,21.7 24.5,21.6 25.0,21.6 25.5,21.5 26.0,21.5 26.5,21.5 27.0,21.4 27.5,21.4 28.0,21.4 28.5,21.3 29.0,21.3 29.5,21.3 30.0,21.3 30.5,21.2 31.0,21.2 31.5,21.2 32.0,21.2 32.5,21.2 33.0,21.2 33.5,21.2 34.0,21.2 34.5,21.2 35.0,21.2 35.5,21.2 36.0,21.2 36.5,21.2 37.0,21.3 37.5,21.3 38.0,21.3 38.5,21.3 39.0,21.4 39.5,21.4 40.0,21.4 40.5,21.5 41.0,21.5 41.5,21.5 42.0,21.6 42.5,21.6 43.0,21.7 43.5,21.7 44.0,21.8 44.5,21.8 45.0,21.9 45.5,21.9 46.0,22.0 46.5,22.1 47.0,22.1 47.5,22.2 48.0,22.3 48.5,22.4 48.5,22.8 48.0,22.9 47.5,23.0 47.0,23.1 46.5,23.1 46.0,23.2 45.5,23.3 45.0,23.3 44.5,23.4 44.0,23.4 43.5,23.5 43.0,23.5 42.5,23.6 42.0,23.6 41.5,23.7 41.0,23.7 40.5,23.7 40.0,23.8 39.5,23.8 39.0,23.8 38.5,23.9 38.0,23.9 37.5,23.9 37.0,23.9 36.5,24.0 36.0,24.0 35.5,24.0 35.0,24.0 34.5,24.0 34.0,24.0 33.5,24.0 33.0,24.0 32.5,24.0 32.0,24.0 31.5,24.0 31.0,24.0 30.5,24.0 30.0,23.9 29.5,23.9 29.0,23.9 28.5,23.9 28.0,23.8 27.5,23.8 27.0,23.8 26.5,23.7 26.0,23.7 25.5,23.7 25.0,23.6 24.5,23.6 24.0,23.5 23.5,23.5 23.0,23.4 22.5,23.4 22.0,23.3 21.5,23.3 21.0,23.2 20.5,23.1 20.0,23.1 19.5,23.0 19.0,22.9 18.5,22.8"/>
<polygon points="48.5,22.5 49.0,22.5 49.5,22.5 50.0,22.5 50.5,22.5 51.0,22.5 51.5,22.5 52.0,22.5 52.5,22.5 53.0,22.5 53.5,22.5 54.0,22.5 54.5,22.5 55.0,22.5 55.5,22.5 56.0,22.5 56.5,22.5 57.0,22.5 57.5,22.5 58.0,22.5 58.5,22.5 59.0,22.5 59.5,22.5 60.0,22.5 60.5,22.5 60.5,22.7 60.0,22.7 59.5,22.7 59.0,22.7 58.5,22.7 58.0,22.7 57.5,22.7 57.0,22.7 56.5,22.7 56.0,22.7 55.5,22.7 55.0,22.7 54.5,22.7 54.0,22.7 53.5,22.7 53.0,22.7 52.5,22.7 52.0,22.7 51.5,22.7 51.0,22.7 50.5,22.7 50.0,22.7 49.5,22.7 49.0,22.7 48.5,22.7"/>
<polygon points="60.5,22.4 61.0,22.2 61.5,22.1 62.0,22.0 62.5,21.9 63.0,21.8 63.5,21.7 64.0,21.6 64.5,21.5 65.0,21.4 65.5,21.3 66.0,21.3 66.5,21.2 67.0,21.1 67.5,21.1 68.0,21.0 68.5,21.0 69.0,21.0 69.5,20.9 70.0,20.9 70.5,20.9 71.0,20.9 71.5,20.9 72.0,20.9 72.5,20.9 73.0,20.9 73.5,20.9 74.0,21.0 74.5,21.0 75.0,21.0 75.5,21.1 76.0,21.1 76.5,21.2 77.0,21.3 77.5,21.3 78.0,21.4 78.5,21.5 79.0,21.6 79.5,21.7 80.0,21.8 80.5,21.9 81.0,22.0 81.5,22.1 82.0,22.2 82.5,22.4 82.5,22.8 82.0,23.0 81.5,23.1 81.0,23.2 80.5,23.3 80.0,23.4 79.5,23.5 79.0,23.6 78.5,23.7 78.0,23.8 77.5,23.9 77.0,23.9 76.5,24.0 76.0,24.1 75.5,24.1 75.0,24.2 74.5,24.2 74.0,24.2 73.5,24.3 73.0,24.3 72.5,24.3 72.0,24.3 71.5,24.3 71.0,24.3 70.5,24.3 70.0,24.3 69.5,24.3 69.0,24.2 68.5,24.2 68.0,24.2 67.5,24.1 67.0,24.1 66.5,24.0 66.0,23.9 65.5,23.9 65.0,23.8 64.5,23.7 64.0,23.6 63.5,23.5 63.0,23.4 62.5,23.3 62.0,23.2 61.5,23.1 61.0,23.0 60.5,22.8"/>
<polygon points="80.5,22.1 81.0,21.7 81.5,21.3 82.0,21.2 82.5,21.2 83.0,21.5 83.5,22.0 84.0,21.7 84.5,21.3 85.0,21.1 85.5,21.1 86.0,21.4 86.5,21.9 87.0,21.7 87.5,21.3 88.0,21.0 88.5,21.0 89.0,21.3 89.5,21.7 90.0,21.8 90.5,21.3 91.0,21.0 91.5,20.9 92.0,21.1 92.5,21.6 93.0,21.9 93.5,21.3 94.0,21.0 94.5,20.8 95.0,21.0 95.5,21.4 96.0,22.0 96.5,21.4 97.0,20.9 97.5,20.8 98.0,20.9 98.5,21.3 99.0,21.8 99.5,21.5 100.0,21.0 100.5,20.7 101.0,20.7 101.5,21.1 102.0,21.7 102.5,21.5 103.0,21.0 103.5,20.6 103.5,24.6 103.0,24.2 102.5,23.7 102.0,23.5 101.5,24.1 101.0,24.5 100.5,24.5 100.0,24.2 99.5,23.7 99.0,23.4 98.5,23.9 98.0,24.3 97.5,24.4 97.0,24.3 96.5,23.8 96.0,23.2 95.5,23.8 95.0,24.2 94.5,24.4 94.0,24.2 93.5,23.9 93.0,23.3 92.5,23.6 92.0,24.1 91.5,24.3 91.0,24.2 90.5,23.9 90.0,23.4 89.5,23.5 89.0,23.9 88.5,24.2 88.0,24.2 87.5,23.9 87.0,23.5 86.5,23.3 86.0,23.8 85.5,24.1 85.0,24.1 84.5,23.9 84.0,23.5 83.5,23.2 83.0,23.7 82.5,24.0 82.0,24.0 81.5,23.9 81.0,23.5 80.5,23.1"/>
<polygon points="110.5,22.5 111.0,22.3 111.5,22.1 112.0,22.1 112.5,22.1 113.0,22.0 113.5,21.8 114.0,22.1 114.5,22.3 114.5,22.9 114.0,23.1 113.5,23.4 113.0,23.2 112.5,23.1 112.0,23.1 111.5,23.2 111.0,22.9 110.5,22.7"/>
<polygon opacity="0.7" fill="#5a6dd2" points="114.7,22.3 115.2,21.7 115.7,21.2 116.2,21.3 116.7,21.5 117.2,21.4 117.7,21.3 118.2,21.3 118.7,21.2 119.2,21.2 119.7,21.4 120.2,19.9 120.7,21.5 121.2,18.7 121.7,21.5 122.2,21.4 122.7,21.3 123.2,21.5 123.7,21.2 124.2,19.8 124.7,17.3 125.2,21.3 125.7,21.5 126.2,20.2 126.7,19.0 127.2,20.2 127.7,21.2 128.2,17.3 128.7,21.5 129.2,18.1 129.7,20.2 130.2,21.4 130.7,19.4 131.2,21.4 131.7,21.5 132.2,21.3 132.7,21.5 133.2,21.3 133.7,18.8 134.2,18.5 134.7,20.2 135.2,21.2 135.7,21.3 136.2,20.0 136.7,19.8 137.2,21.5 137.7,20.0 138.2,20.4 138.7,21.2 139.2,19.5 139.7,20.1 140.2,19.8 140.7,19.8 141.2,18.9 141.7,17.5 142.2,19.0 142.7,19.0 143.2,20.0 143.7,18.0 144.2,21.5 144.7,21.3 145.2,17.9 145.7,19.8 146.2,21.4 146.7,21.3 147.2,19.0 147.7,18.6 148.2,19.7 148.7,21.3 149.2,20.2 149.7,19.0 150.2,21.5 150.7,19.8 151.2,19.1 151.7,20.2 152.2,21.3 152.7,17.5 153.2,17.3 153.7,19.8 154.2,21.4 154.7,21.5 155.2,17.6 155.7,18.3 156.2,21.3 156.7,21.2 157.2,17.4 157.7,19.4 158.2,19.1 158.7,21.2 159.2,20.2 159.7,20.0 160.2,20.1 160.7,21.3 161.2,19.6 161.7,19.2 162.2,19.3 162.7,17.3 163.2,20.2 163.7,20.0 164.2,17.2 164.7,21.5 165.2,20.2 165.7,18.5 166.2,20.3 166.7,19.1 167.2,19.3 167.7,20.2 168.2,21.5 168.7,18.2 169.2,20.3 169.7,20.2 170.2,21.4 170.7,17.7 171.2,19.2 171.7,21.2 172.2,20.4 172.7,21.3 173.2,21.5 173.7,21.5 174.2,17.9 174.7,19.8 175.2,21.3 175.7,18.0 176.2,21.4 176.7,18.0 177.2,18.4 177.7,19.9 178.2,20.1 178.7,20.1 179.2,19.6 179.7,21.4 180.2,21.5 180.7,19.7 181.2,21.4 181.7,19.4 182.2,20.0 182.7,21.3 183.2,18.5 183.7,20.2 184.2,18.6 184.7,21.4 185.2,18.4 185.7,21.3 186.2,18.4 186.7,21.4 187.2,21.2 187.7,21.4 188.2,19.9 188.7,21.4 189.2,19.2 189.7,21.2 190.2,20.1 190.7,21.3 191.2,21.5 191.7,17.3 192.2,18.6 192.7,19.2 193.2,20.4 193.7,21.4 194.2,21.3 194.7,17.8 195.2,21.3 195.7,19.0 196.2,20.1 196.7,18.8 197.2,21.2 197.7,21.2 198.2,21.5 198.7,19.4 199.2,18.7 199.7,19.9 200.2,21.2 200.7,17.2 201.2,19.7 201.7,21.2 202.2,21.5 202.7,19.3 203.2,19.7 203.7,18.7 204.2,19.0 204.7,21.2 205.2,17.9 205.7,21.4 206.2,18.0 206.7,17.4 206.7,25.6 206.2,26.1 205.7,27.6 205.2,23.9 204.7,24.0 204.2,23.9 203.7,26.2 203.2,25.6 202.7,25.0 202.2,26.0 201.7,26.1 201.2,25.9 200.7,25.8 200.2,25.9 199.7,23.7 199.2,25.9 198.7,23.7 198.2,25.0 197.7,24.0 197.2,25.3 196.7,24.0 196.2,26.4 195.7,23.8 195.2,25.3 194.7,25.4 194.2,26.8 193.7,23.8 193.2,25.0 192.7,27.4 192.2,25.9 191.7,23.7 191.2,23.7 190.7,23.9 190.2,25.1 189.7,26.0 189.2,23.8 188.7,25.7 188.2,23.7 187.7,24.8 187.2,24.0 186.7,25.5 186.2,25.2 185.7,23.9 185.2,23.8 184.7,23.8 184.2,23.7 183.7,23.9 183.2,23.9 182.7,25.6 182.2,27.6 181.7,25.5 181.2,23.8 180.7,25.3 180.2,23.7 179.7,25.3 179.2,27.3 178.7,26.6 178.2,26.5 177.7,23.7 177.2,27.4 176.7,23.8 176.2,23.8 175.7,24.0 175.2,26.2 174.7,27.7 174.2,23.8 173.7,23.7 173.2,25.1 172.7,23.9 172.2,23.7 171.7,24.0 171.2,24.0 170.7,26.4 170.2,23.8 169.7,27.6 169.2,23.8 168.7,23.9 168.2,26.1 167.7,25.5 167.2,25.6 166.7,23.9 166.2,24.9 165.7,25.4 165.2,25.3 164.7,23.7 164.2,25.4 163.7,23.9 163.2,27.2 162.7,27.8 162.2,25.0 161.7,24.9 161.2,23.8 160.7,27.3 160.2,26.4 159.7,24.0 159.2,26.5 158.7,24.0 158.2,26.0 157.7,26.0 157.2,25.2 156.7,24.0 156.2,25.6 155.7,23.9 155.2,23.8 154.7,27.2 154.2,27.4 153.7,25.5 153.2,27.2 152.7,26.0 152.2,23.9 151.7,23.8 151.2,25.9 150.7,26.9 150.2,25.4 149.7,27.7 149.2,25.0 148.7,23.9 148.2,26.9 147.7,25.0 147.2,23.9 146.7,23.9 146.2,25.0 145.7,23.8 145.2,25.3 144.7,23.9 144.2,25.8 143.7,26.3 143.2,25.0 142.7,23.9 142.2,27.4 141.7,23.9 141.2,24.0 140.7,25.9 140.2,25.5 139.7,26.9 139.2,24.0 138.7,25.0 138.2,23.7 137.7,25.2 137.2,23.7 136.7,27.3 136.2,25.0 135.7,23.9 135.2,24.0 134.7,23.8 134.2,26.7 133.7,27.2 133.2,26.2 132.7,23.7 132.2,25.3 131.7,25.8 131.2,26.6 130.7,24.0 130.2,23.8 129.7,23.7 129.2,25.1 128.7,26.6 128.2,23.9 127.7,27.8 127.2,23.9 126.7,27.2 126.2,27.9 125.7,23.7 125.2,23.9 124.7,27.2 124.2,25.2 123.7,25.1 123.2,25.2 122.7,23.9 122.2,27.8 121.7,27.8 121.2,27.1 120.7,25.6 120.2,23.7 119.7,23.8 119.2,25.3 118.7,24.0 118.2,26.7 117.7,27.4 117.2,25.8 116.7,23.7 116.2,23.9 115.7,26.2 115.2,23.5 114.7,22.9"/>
<polygon points="114.7,22.3 115.2,21.7 115.7,21.2 116.2,21.3 116.7,21.5 117.2,21.4 117.7,21.3 118.2,21.3 118.7,21.2 119.2,21.2 119.7,21.4 120.2,21.5 120.7,21.5 121.2,21.2 121.7,21.5 122.2,21.4 122.7,21.3 123.2,21.5 123.7,21.2 124.2,21.3 124.7,21.3 125.2,21.3 125.7,21.5 126.2,21.4 126.7,21.4 127.2,21.3 127.7,21.2 128.2,21.3 128.7,21.5 129.2,21.5 129.7,21.5 130.2,21.4 130.7,21.2 131.2,21.4 131.7,21.5 132.2,21.3 132.7,21.5 133.2,21.3 133.7,21.6 134.2,21.5 134.7,21.4 135.2,21.2 135.7,21.3 136.2,21.3 136.7,21.5 137.2,21.5 137.7,21.5 138.2,21.5 138.7,21.2 139.2,21.2 139.7,21.4 140.2,21.2 140.7,21.4 141.2,21.2 141.7,21.3 142.2,21.2 142.7,21.3 143.2,21.4 143.7,21.2 144.2,21.5 144.7,21.3 145.2,21.4 145.7,21.4 146.2,21.4 146.7,21.3 147.2,21.3 147.7,21.3 148.2,21.2 148.7,21.3 149.2,21.5 149.7,21.2 150.2,21.5 150.7,21.5 151.2,21.5 151.7,21.4 152.2,21.3 152.7,21.4 153.2,21.5 153.7,21.5 154.2,21.4 154.7,21.5 155.2,21.4 155.7,21.3 156.2,21.3 156.7,21.2 157.2,21.4 157.7,21.5 158.2,21.5 158.7,21.2 159.2,21.2 159.7,21.2 160.2,21.3 160.7,21.3 161.2,21.4 161.7,21.4 162.2,21.5 162.7,21.2 163.2,21.3 163.7,21.3 164.2,21.2 164.7,21.5 165.2,21.5 165.7,21.4 166.2,21.4 166.7,21.3 167.2,21.3 167.7,21.5 168.2,21.5 168.7,21.3 169.2,21.4 169.7,21.4 170.2,21.4 170.7,21.5 171.2,21.2 171.7,21.2 172.2,21.5 172.7,21.3 173.2,21.5 173.7,21.5 174.2,21.4 174.7,21.2 175.2,21.3 175.7,21.2 176.2,21.4 176.7,21.4 177.2,21.2 177.7,21.5 178.2,21.3 178.7,21.3 179.2,21.4 179.7,21.4 180.2,21.5 180.7,21.2 181.2,21.4 181.7,21.3 182.2,21.3 182.7,21.3 183.2,21.3 183.7,21.3 184.2,21.5 184.7,21.4 185.2,21.4 185.7,21.3 186.2,21.2 186.7,21.4 187.2,21.2 187.7,21.4 188.2,21.5 188.7,21.4 189.2,21.4 189.7,21.2 190.2,21.2 190.7,21.3 191.2,21.5 191.7,21.5 192.2,21.5 192.7,21.5 193.2,21.6 193.7,21.4 194.2,21.3 194.7,21.2 195.2,21.3 195.7,21.4 196.2,21.5 196.7,21.2 197.2,21.2 197.7,21.2 198.2,21.5 198.7,21.5 199.2,21.2 199.7,21.5 200.2,21.2 200.7,21.5 201.2,21.4 201.7,21.2 202.2,21.5 202.7,21.6 203.2,21.4 203.7,21.4 204.2,21.3 204.7,21.2 205.2,21.3 205.7,21.4 206.2,21.5 206.7,22.0 206.7,23.2 206.2,23.7 205.7,23.8 205.2,23.9 204.7,24.0 204.2,23.9 203.7,23.8 203.2,23.8 202.7,23.6 202.2,23.7 201.7,24.0 201.2,23.8 200.7,23.7 200.2,24.0 199.7,23.7 199.2,24.0 198.7,23.7 198.2,23.7 197.7,24.0 197.2,24.0 196.7,24.0 196.2,23.7 195.7,23.8 195.2,23.9 194.7,24.0 194.2,23.9 193.7,23.8 193.2,23.6 192.7,23.7 192.2,23.7 191.7,23.7 191.2,23.7 190.7,23.9 190.2,24.0 189.7,24.0 189.2,23.8 188.7,23.8 188.2,23.7 187.7,23.8 187.2,24.0 186.7,23.8 186.2,24.0 185.7,23.9 185.2,23.8 184.7,23.8 184.2,23.7 183.7,23.9 183.2,23.9 182.7,23.9 182.2,23.9 181.7,23.9 181.2,23.8 180.7,24.0 180.2,23.7 179.7,23.8 179.2,23.8 178.7,23.9 178.2,23.9 177.7,23.7 177.2,24.0 176.7,23.8 176.2,23.8 175.7,24.0 175.2,23.9 174.7,24.0 174.2,23.8 173.7,23.7 173.2,23.7 172.7,23.9 172.2,23.7 171.7,24.0 171.2,24.0 170.7,23.7 170.2,23.8 169.7,23.8 169.2,23.8 168.7,23.9 168.2,23.7 167.7,23.7 167.2,23.9 166.7,23.9 166.2,23.8 165.7,23.8 165.2,23.7 164.7,23.7 164.2,24.0 163.7,23.9 163.2,23.9 162.7,24.0 162.2,23.7 161.7,23.8 161.2,23.8 160.7,23.9 160.2,23.9 159.7,24.0 159.2,24.0 158.7,24.0 158.2,23.7 157.7,23.7 157.2,23.8 156.7,24.0 156.2,23.9 155.7,23.9 155.2,23.8 154.7,23.7 154.2,23.8 153.7,23.7 153.2,23.7 152.7,23.8 152.2,23.9 151.7,23.8 151.2,23.7 150.7,23.7 150.2,23.7 149.7,24.0 149.2,23.7 148.7,23.9 148.2,24.0 147.7,23.9 147.2,23.9 146.7,23.9 146.2,23.8 145.7,23.8 145.2,23.8 144.7,23.9 144.2,23.7 143.7,24.0 143.2,23.8 142.7,23.9 142.2,24.0 141.7,23.9 141.2,24.0 140.7,23.8 140.2,24.0 139.7,23.8 139.2,24.0 138.7,24.0 138.2,23.7 137.7,23.7 137.2,23.7 136.7,23.7 136.2,23.9 135.7,23.9 135.2,24.0 134.7,23.8 134.2,23.7 133.7,23.6 133.2,23.9 132.7,23.7 132.2,23.9 131.7,23.7 131.2,23.8 130.7,24.0 130.2,23.8 129.7,23.7 129.2,23.7 128.7,23.7 128.2,23.9 127.7,24.0 127.2,23.9 126.7,23.8 126.2,23.8 125.7,23.7 125.2,23.9 124.7,23.9 124.2,23.9 123.7,24.0 123.2,23.7 122.7,23.9 122.2,23.8 121.7,23.7 121.2,24.0 120.7,23.7 120.2,23.7 119.7,23.8 119.2,24.0 118.7,24.0 118.2,23.9 117.7,23.9 117.2,23.8 116.7,23.7 116.2,23.9 115.7,24.0 115.2,23.5 114.7,22.9"/>
<polygon points="207.0,22.4 207.5,22.0 208.0,21.7 208.5,21.5 209.0,21.3 209.5,21.2 210.0,21.2 210.5,21.2 211.0,21.2 211.5,21.3 212.0,21.4 212.5,21.5 213.0,21.6 213.5,21.7 214.0,21.9 214.5,22.0 215.0,22.1 215.5,22.2 216.0,22.3 216.5,22.4 216.5,22.8 216.0,22.9 215.5,23.0 215.0,23.1 214.5,23.2 214.0,23.3 213.5,23.5 213.0,23.6 212.5,23.7 212.0,23.8 211.5,23.9 211.0,24.0 210.5,24.0 210.0,24.0 209.5,24.0 209.0,23.9 208.5,23.7 208.0,23.5 207.5,23.2 207.0,22.8"/>
<polygon points="216.5,22.5 217.0,22.5 217.5,22.5 218.0,22.5 218.5,22.5 219.0,22.5 219.5,22.5 220.0,22.5 220.5,22.5 221.0,22.5 221.5,22.5 222.0,22.5 222.5,22.5 223.0,22.5 223.5,22.5 224.0,22.5 224.5,22.5 225.0,22.5 225.5,22.5 226.0,22.5 226.5,22.5 227.0,22.5 227.5,22.5 228.0,22.5 228.5,22.5 229.0,22.5 229.5,22.5 230.0,22.5 230.5,22.5 231.0,22.5 231.5,22.5 232.0,22.5 232.5,22.5 233.0,22.5 233.5,22.5 234.0,22.5 234.5,22.5 235.0,22.5 235.5,22.5 236.0,22.5 236.5,22.5 237.0,22.5 237.5,22.5 238.0,22.5 238.5,22.5 239.0,22.5 239.5,22.5 240.0,22.5 240.5,22.5 241.0,22.5 241.5,22.5 242.0,22.5 242.5,22.5 243.0,22.5 243.5,22.5 244.0,22.5 244.5,22.5 245.0,22.5 245.5,22.5 246.0,22.5 246.5,22.5 247.0,22.5 247.5,22.5 248.0,22.5 248.5,22.5 249.0,22.5 249.5,22.5 250.0,22.5 250.5,22.5 251.0,22.5 251.5,22.5 251.5,22.7 251.0,22.7 250.5,22.7 250.0,22.7 249.5,22.7 249.0,22.7 248.5,22.7 248.0,22.7 247.5,22.7 247.0,22.7 246.5,22.7 246.0,22.7 245.5,22.7 245.0,22.7 244.5,22.7 244.0,22.7 243.5,22.7 243.0,22.7 242.5,22.7 242.0,22.7 241.5,22.7 241.0,22.7 240.5,22.7 240.0,22.7 239.5,22.7 239.0,22.7 238.5,22.7 238.0,22.7 237.5,22.7 237.0,22.7 236.5,22.7 236.0,22.7 235.5,22.7 235.0,22.7 234.5,22.7 234.0,22.7 233.5,22.7 233.0,22.7 232.5,22.7 232.0,22.7 231.5,22.7 231.0,22.7 230.5,22.7 230.0,22.7 229.5,22.7 229.0,22.7 228.5,22.7 228.0,22.7 227.5,22.7 227.0,22.7 226.5,22.7 226.0,22.7 225.5,22.7 225.0,22.7 224.5,22.7 224.0,22.7 223.5,22.7 223.0,22.7 222.5,22.7 222.0,22.7 221.5,22.7 221.0,22.7 220.5,22.7 220.0,22.7 219.5,22.7 219.0,22.7 218.5,22.7 218.0,22.7 217.5,22.7 217.0,22.7 216.5,22.7"/>
<ellipse cx="253.1" cy="22.6" rx="0.7" ry="0.50" opacity="0.8"/>
<ellipse cx="256.5" cy="22.6" rx="0.7" ry="0.57" opacity="0.8"/>
<ellipse cx="259.9" cy="22.6" rx="0.7" ry="0.64" opacity="0.8"/>
<ellipse cx="263.3" cy="22.6" rx="0.7" ry="0.71" opacity="0.8"/>
<ellipse cx="266.7" cy="22.6" rx="0.7" ry="0.78" opacity="0.8"/>
<ellipse cx="270.1" cy="22.6" rx="0.7" ry="0.85" opacity="0.8"/>
<ellipse cx="273.5" cy="22.6" rx="0.7" ry="0.92" opacity="0.8"/>
<ellipse cx="276.9" cy="22.6" rx="0.7" ry="0.99" opacity="0.8"/>
<ellipse cx="280.3" cy="22.6" rx="0.7" ry="1.06" opacity="0.8"/>
<ellipse cx="283.7" cy="22.6" rx="0.7" ry="1.13" opacity="0.8"/>
<ellipse cx="287.1" cy="22.6" rx="0.7" ry="1.20" opacity="0.8"/>
<polygon opacity="0.7" fill="#5a6dd2" points="286.5,22.4 287.0,19.3 287.5,19.3 288.0,20.8 288.5,20.1 289.0,20.1 289.5,21.8 290.0,19.7 290.5,20.8 291.0,21.5 291.5,20.5 292.0,21.6 292.5,20.2 293.0,21.6 293.5,20.8 294.0,21.5 294.5,19.4 295.0,20.1 295.5,21.5 296.0,20.2 296.5,19.1 297.0,20.2 297.5,19.3 298.0,20.3 298.5,20.3 298.5,25.1 298.0,24.5 297.5,23.6 297.0,24.9 296.5,25.0 296.0,25.3 295.5,23.7 295.0,24.6 294.5,25.9 294.0,23.7 293.5,24.2 293.0,24.8 292.5,23.6 292.0,23.6 291.5,26.0 291.0,25.7 290.5,24.7 290.0,26.1 289.5,23.4 289.0,25.9 288.5,24.6 288.0,25.1 287.5,23.6 287.0,25.4 286.5,25.7"/>
<polygon points="286.5,22.4 287.0,21.9 287.5,21.6 288.0,21.7 288.5,21.7 289.0,21.6 289.5,21.8 290.0,21.5 290.5,21.6 291.0,21.5 291.5,21.8 292.0,21.6 292.5,21.6 293.0,21.6 293.5,21.7 294.0,21.5 294.5,21.4 295.0,21.6 295.5,21.5 296.0,21.5 296.5,21.4 297.0,21.7 297.5,21.6 298.0,21.9 298.5,22.3 298.5,22.9 298.0,23.3 297.5,23.6 297.0,23.5 296.5,23.8 296.0,23.7 295.5,23.7 295.0,23.6 294.5,23.8 294.0,23.7 293.5,23.5 293.0,23.6 292.5,23.6 292.0,23.6 291.5,23.4 291.0,23.7 290.5,23.6 290.0,23.7 289.5,23.4 289.0,23.6 288.5,23.5 288.0,23.5 287.5,23.6 287.0,23.3 286.5,22.8"/>
<polygon points="298.8,19.1 299.3,19.5 299.8,19.8 300.3,20.1 300.8,20.4 301.3,20.7 301.8,20.9 302.3,21.1 302.8,21.3 303.3,21.5 303.8,21.6 304.3,21.8 304.8,21.9 305.3,22.0 305.8,22.1 306.3,22.1 306.8,22.2 307.3,22.2 307.8,22.3 308.3,22.3 308.8,22.3 309.3,22.3 309.8,22.3 310.3,19.2 310.8,20.0 311.3,20.7 311.8,21.2 312.3,21.6 312.8,21.9 313.3,22.1 313.8,22.2 314.3,22.3 314.8,22.3 315.3,19.2 315.8,20.0 316.3,20.7 316.8,21.2 317.3,21.6 317.8,21.9 318.3,22.1 318.8,22.2 319.3,22.3 319.8,19.2 320.3,19.5 320.8,19.8 321.3,20.1 321.8,20.4 322.3,20.6 322.8,20.8 323.3,21.0 323.8,21.2 324.3,21.4 324.8,21.5 325.3,21.7 325.8,21.8 326.3,21.9 326.8,22.0 327.3,22.1 327.8,22.1 328.3,22.2 328.8,22.2 329.3,22.2 329.8,22.3 330.3,22.3 330.8,22.3 331.3,22.3 331.8,22.3 332.3,22.3 332.8,19.3 333.3,20.0 333.8,20.6 334.3,21.1 334.8,21.5 335.3,21.8 335.8,22.0 336.3,22.2 336.8,22.3 337.3,22.3 337.8,19.3 338.3,19.9 338.8,20.5 339.3,21.0 339.8,21.4 340.3,21.7 340.8,21.9 341.3,22.1 341.8,22.2 342.3,22.3 342.8,22.3 343.3,22.3 343.8,22.3 343.8,22.9 343.3,22.9 342.8,22.9 342.3,22.9 341.8,23.0 341.3,23.1 340.8,23.3 340.3,23.5 339.8,23.8 339.3,24.2 338.8,24.7 338.3,25.3 337.8,25.9 337.3,22.9 336.8,22.9 336.3,23.0 335.8,23.2 335.3,23.4 334.8,23.7 334.3,24.1 333.8,24.6 333.3,25.2 332.8,25.9 332.3,22.9 331.8,22.9 331.3,22.9 330.8,22.9 330.3,22.9 329.8,22.9 329.3,23.0 328.8,23.0 328.3,23.0 327.8,23.1 327.3,23.1 326.8,23.2 326.3,23.3 325.8,23.4 325.3,23.5 324.8,23.7 324.3,23.8 323.8,24.0 323.3,24.2 322.8,24.4 322.3,24.6 321.8,24.8 321.3,25.1 320.8,25.4 320.3,25.7 319.8,26.0 319.3,22.9 318.8,23.0 318.3,23.1 317.8,23.3 317.3,23.6 316.8,24.0 316.3,24.5 315.8,25.2 315.3,26.0 314.8,22.9 314.3,22.9 313.8,23.0 313.3,23.1 312.8,23.3 312.3,23.6 311.8,24.0 311.3,24.5 310.8,25.2 310.3,26.0 309.8,22.9 309.3,22.9 308.8,22.9 308.3,22.9 307.8,22.9 307.3,23.0 306.8,23.0 306.3,23.1 305.8,23.1 305.3,23.2 304.8,23.3 304.3,23.4 303.8,23.6 303.3,23.7 302.8,23.9 302.3,24.1 301.8,24.3 301.3,24.5 300.8,24.8 300.3,25.1 299.8,25.4 299.3,25.7 298.8,26.1"/>
<polygon opacity="0.7" fill="#5a6dd2" points="344.0,20.6 344.5,20.7 345.0,18.3 345.5,20.7 346.0,18.2 346.5,21.6 347.0,20.6 347.5,19.5 348.0,18.7 348.5,20.5 349.0,21.7 349.5,20.5 350.0,20.4 350.5,18.8 351.0,20.2 351.5,18.8 352.0,21.6 352.5,21.5 353.0,19.2 353.5,20.4 354.0,21.8 354.5,19.4 355.0,21.5 355.5,19.4 356.0,21.5 356.5,20.5 357.0,21.6 357.5,20.6 358.0,21.5 358.5,19.7 359.0,17.8 359.5,20.5 360.0,21.7 360.5,19.6 361.0,21.7 361.5,19.5 362.0,21.6 362.5,21.8 363.0,19.6 363.5,18.9 364.0,19.5 364.5,19.8 365.0,21.8 365.5,18.9 366.0,18.8 366.5,21.7 367.0,21.6 367.5,18.9 368.0,21.7 368.5,21.8 369.0,18.1 369.5,21.6 370.0,20.2 370.5,21.6 371.0,21.6 371.5,20.6 372.0,21.6 372.5,21.7 373.0,18.8 373.5,19.2 374.0,18.4 374.5,20.2 375.0,21.6 375.5,19.6 376.0,18.8 376.5,21.6 377.0,21.5 377.5,20.4 378.0,21.7 378.5,21.8 379.0,21.6 379.5,18.2 380.0,21.8 380.5,19.7 380.5,22.9 380.0,23.4 379.5,23.4 379.0,26.4 378.5,24.9 378.0,23.5 377.5,23.4 377.0,23.7 376.5,23.6 376.0,24.6 375.5,25.3 375.0,23.6 374.5,23.6 374.0,23.6 373.5,25.9 373.0,23.5 372.5,24.9 372.0,23.6 371.5,25.0 371.0,26.8 370.5,23.6 370.0,23.6 369.5,27.4 369.0,27.4 368.5,26.2 368.0,27.1 367.5,24.7 367.0,25.0 366.5,26.3 366.0,24.9 365.5,23.5 365.0,26.8 364.5,26.3 364.0,26.5 363.5,23.5 363.0,24.8 362.5,26.3 362.0,26.2 361.5,25.5 361.0,23.5 360.5,24.6 360.0,23.5 359.5,26.9 359.0,26.6 358.5,23.6 358.0,26.6 357.5,25.2 357.0,23.6 356.5,25.7 356.0,23.7 355.5,25.5 355.0,26.2 354.5,27.1 354.0,25.3 353.5,26.5 353.0,26.8 352.5,26.8 352.0,24.9 351.5,27.3 351.0,23.5 350.5,25.0 350.0,23.5 349.5,23.6 349.0,25.3 348.5,24.7 348.0,27.0 347.5,24.8 347.0,25.1 346.5,25.3 346.0,26.7 345.5,24.9 345.0,27.3 344.5,23.3 344.0,27.3"/>
<polygon points="344.0,22.3 344.5,21.9 345.0,21.5 345.5,21.7 346.0,21.5 346.5,21.6 347.0,21.7 347.5,21.6 348.0,21.6 348.5,21.7 349.0,21.7 349.5,21.6 350.0,21.7 350.5,21.5 351.0,21.7 351.5,21.8 352.0,21.6 352.5,21.5 353.0,21.7 353.5,21.5 354.0,21.8 354.5,21.8 355.0,21.5 355.5,21.7 356.0,21.5 356.5,21.5 357.0,21.6 357.5,21.6 358.0,21.5 358.5,21.6 359.0,21.6 359.5,21.6 360.0,21.7 360.5,21.7 361.0,21.7 361.5,21.5 362.0,21.6 362.5,21.8 363.0,21.6 363.5,21.7 364.0,21.6 364.5,21.6 365.0,21.8 365.5,21.7 366.0,21.5 366.5,21.7 367.0,21.6 367.5,21.5 368.0,21.7 368.5,21.8 369.0,21.6 369.5,21.6 370.0,21.6 370.5,21.6 371.0,21.6 371.5,21.6 372.0,21.6 372.5,21.7 373.0,21.7 373.5,21.6 374.0,21.6 374.5,21.6 375.0,21.6 375.5,21.7 376.0,21.6 376.5,21.6 377.0,21.5 377.5,21.8 378.0,21.7 378.5,21.8 379.0,21.6 379.5,21.8 380.0,21.8 380.5,22.3 380.5,22.9 380.0,23.4 379.5,23.4 379.0,23.6 378.5,23.4 378.0,23.5 377.5,23.4 377.0,23.7 376.5,23.6 376.0,23.6 375.5,23.5 375.0,23.6 374.5,23.6 374.0,23.6 373.5,23.6 373.0,23.5 372.5,23.5 372.0,23.6 371.5,23.6 371.0,23.6 370.5,23.6 370.0,23.6 369.5,23.6 369.0,23.6 368.5,23.4 368.0,23.5 367.5,23.7 367.0,23.6 366.5,23.5 366.0,23.7 365.5,23.5 365.0,23.4 364.5,23.6 364.0,23.6 363.5,23.5 363.0,23.6 362.5,23.4 362.0,23.6 361.5,23.7 361.0,23.5 360.5,23.5 360.0,23.5 359.5,23.6 359.0,23.6 358.5,23.6 358.0,23.7 357.5,23.6 357.0,23.6 356.5,23.7 356.0,23.7 355.5,23.5 355.0,23.7 354.5,23.4 354.0,23.4 353.5,23.7 353.0,23.5 352.5,23.7 352.0,23.6 351.5,23.4 351.0,23.5 350.5,23.7 350.0,23.5 349.5,23.6 349.0,23.5 348.5,23.5 348.0,23.6 347.5,23.6 347.0,23.5 346.5,23.6 346.0,23.7 345.5,23.5 345.0,23.7 344.5,23.3 344.0,22.9"/>
<polygon points="380.5,22.5 381.0,22.4 381.5,22.3 382.0,22.3 382.5,22.3 383.0,22.4 383.5,22.5 383.5,22.7 383.0,22.8 382.5,22.9 382.0,22.9 381.5,22.9 381.0,22.8 380.5,22.7"/>
<polygon points="383.5,22.4 384.0,21.4 384.5,20.8 385.0,20.5 385.5,20.6 386.0,21.1 386.5,21.9 386.5,23.3 386.0,24.1 385.5,24.6 385.0,24.7 384.5,24.4 384.0,23.8 383.5,22.8"/>
<polygon points="386.7,22.4 387.2,21.4 387.7,20.8 388.2,20.5 388.7,20.6 389.2,21.0 389.7,21.7 389.7,23.5 389.2,24.2 388.7,24.6 388.2,24.7 387.7,24.4 387.2,23.8 386.7,22.8"/>
<polygon opacity="0.7" fill="#5a6dd2" points="390.5,22.3 391.0,20.7 391.5,21.5 392.0,21.5 392.5,19.2 393.0,20.1 393.5,19.5 394.0,19.1 394.5,19.5 395.0,21.5 395.5,17.8 396.0,21.2 396.5,21.3 397.0,17.8 397.5,20.1 398.0,19.0 398.5,19.2 399.0,21.4 399.5,20.1 400.0,19.6 400.5,17.8 401.0,18.0 401.5,21.5 402.0,21.3 402.5,20.4 403.0,18.8 403.5,18.1 404.0,21.5 404.5,17.7 405.0,20.4 405.5,19.2 406.0,20.2 406.5,18.4 407.0,18.7 407.5,18.7 408.0,21.3 408.5,20.1 409.0,18.8 409.5,21.2 410.0,18.8 410.5,21.3 411.0,21.3 411.5,21.2 412.0,19.4 412.5,18.9 413.0,21.4 413.5,21.4 414.0,19.8 414.5,20.0 415.0,21.5 415.5,21.5 416.0,19.9 416.5,17.8 417.0,21.3 417.5,21.5 418.0,18.8 418.5,21.2 419.0,21.3 419.5,21.6 420.0,18.4 420.5,20.0 421.0,21.2 421.5,19.8 422.0,21.4 422.5,19.0 423.0,21.6 423.5,18.6 424.0,18.6 424.5,18.7 425.0,20.3 425.5,21.4 426.0,17.4 426.5,19.8 427.0,19.2 427.5,18.2 428.0,17.9 428.5,21.4 429.0,21.2 429.5,19.9 430.0,20.4 430.5,18.0 431.0,17.8 431.5,21.5 432.0,18.5 432.5,19.0 433.0,20.1 433.5,17.6 434.0,19.9 434.5,21.5 435.0,19.7 435.5,20.0 436.0,19.3 436.5,21.5 437.0,21.2 437.5,19.8 438.0,17.8 438.5,21.3 439.0,21.4 439.5,19.5 440.0,18.7 440.5,18.1 441.0,19.5 441.5,21.5 442.0,21.3 442.5,20.4 443.0,20.0 443.5,20.1 444.0,21.5 444.5,19.8 445.0,17.8 445.5,18.2 446.0,21.5 446.5,20.0 447.0,18.1 447.5,21.5 448.0,19.1 448.5,19.8 449.0,20.2 449.5,21.4 450.0,21.5 450.5,21.3 451.0,21.3 451.5,18.1 452.0,21.4 452.5,21.3 453.0,21.4 453.5,19.9 454.0,20.1 454.5,21.3 455.0,20.1 455.5,21.2 456.0,17.9 456.5,18.7 457.0,20.3 457.5,21.4 458.0,18.6 458.5,17.8 459.0,18.9 459.5,21.3 460.0,21.5 460.5,20.4 461.0,21.5 461.5,19.8 462.0,18.3 462.5,20.0 463.0,20.0 463.5,18.9 464.0,21.5 464.5,17.6 465.0,19.7 465.5,19.6 466.0,19.9 466.5,21.4 467.0,18.1 467.5,18.5 468.0,21.5 468.5,21.4 469.0,21.2 469.5,21.4 470.0,18.7 470.5,19.0 471.0,21.2 471.5,21.4 472.0,20.0 472.5,19.2 473.0,21.5 473.5,18.4 474.0,19.2 474.5,21.4 475.0,21.2 475.5,21.4 476.0,21.2 476.5,21.4 477.0,18.2 477.5,18.8 478.0,18.1 478.5,21.3 479.0,21.3 479.5,19.1 480.0,17.8 480.5,21.5 481.0,19.1 481.5,18.5 482.0,18.4 482.5,21.4 483.0,20.4 483.5,19.5 484.0,21.3 484.5,20.0 485.0,19.5 485.5,19.6 486.0,21.4 486.5,20.0 487.0,18.1 487.5,18.9 488.0,18.2 488.5,21.4 489.0,17.7 489.5,20.5 490.0,19.5 490.5,18.5 491.0,21.5 491.5,21.2 492.0,21.5 492.5,18.1 493.0,20.5 493.5,19.0 494.0,20.1 494.5,21.4 495.0,20.1 495.5,19.1 496.0,20.3 496.5,19.6 497.0,21.4 497.5,21.5 498.0,21.2 498.5,21.2 499.0,21.5 499.5,18.8 500.0,21.3 500.5,17.9 501.0,18.8 501.5,21.3 502.0,20.2 502.5,21.3 503.0,20.3 503.5,20.5 504.0,19.5 504.5,17.5 505.0,21.4 505.5,19.6 506.0,19.3 506.5,21.6 507.0,19.8 507.5,17.6 508.0,20.0 508.5,19.9 509.0,21.3 509.5,19.6 510.0,21.4 510.5,18.2 511.0,17.6 511.5,17.9 512.0,21.4 512.5,19.4 513.0,21.4 513.5,19.5 514.0,19.9 514.5,19.4 515.0,17.6 515.5,21.4 516.0,21.2 516.5,21.5 517.0,18.8 517.5,18.7 518.0,21.2 518.5,21.6 519.0,18.4 519.5,21.3 520.0,21.6 520.5,22.2 520.5,25.0 520.0,26.2 519.5,25.4 519.0,23.6 518.5,23.6 518.0,24.0 517.5,26.0 517.0,25.2 516.5,23.7 516.0,25.2 515.5,26.6 515.0,27.8 514.5,23.9 514.0,27.1 513.5,23.8 513.0,23.8 512.5,23.7 512.0,27.0 511.5,25.4 511.0,27.3 510.5,23.8 510.0,23.8 509.5,23.7 509.0,23.9 508.5,25.8 508.0,23.8 507.5,25.3 507.0,26.9 506.5,23.6 506.0,26.4 505.5,23.8 505.0,23.8 504.5,23.7 504.0,24.0 503.5,23.6 503.0,23.8 502.5,25.0 502.0,23.7 501.5,26.8 501.0,26.0 500.5,25.2 500.0,23.9 499.5,25.9 499.0,24.9 498.5,25.8 498.0,24.0 497.5,27.3 497.0,24.8 496.5,27.5 496.0,27.0 495.5,25.9 495.0,26.3 494.5,25.0 494.0,23.6 493.5,27.5 493.0,25.0 492.5,23.8 492.0,25.5 491.5,26.7 491.0,23.7 490.5,23.7 490.0,23.7 489.5,26.7 489.0,27.6 488.5,24.8 488.0,23.9 487.5,26.9 487.0,24.0 486.5,23.9 486.0,25.0 485.5,24.0 485.0,24.9 484.5,23.7 484.0,27.4 483.5,25.1 483.0,26.4 482.5,27.8 482.0,23.8 481.5,27.6 481.0,26.1 480.5,25.2 480.0,27.4 479.5,23.7 479.0,27.3 478.5,27.3 478.0,23.7 477.5,24.0 477.0,24.0 476.5,25.3 476.0,26.1 475.5,25.6 475.0,24.0 474.5,23.8 474.0,26.3 473.5,27.2 473.0,23.7 472.5,26.8 472.0,25.1 471.5,23.8 471.0,24.0 470.5,25.3 470.0,25.1 469.5,25.9 469.0,24.0 468.5,23.8 468.0,23.7 467.5,26.6 467.0,23.7 466.5,23.8 466.0,25.6 465.5,23.8 465.0,27.6 464.5,25.0 464.0,27.6 463.5,25.0 463.0,23.7 462.5,23.9 462.0,25.7 461.5,26.4 461.0,23.7 460.5,23.7 460.0,23.7 459.5,23.9 459.0,25.4 458.5,23.8 458.0,25.1 457.5,26.7 457.0,27.0 456.5,23.9 456.0,24.0 455.5,27.8 455.0,25.3 454.5,23.9 454.0,24.0 453.5,26.7 453.0,26.5 452.5,25.2 452.0,23.8 451.5,27.7 451.0,23.9 450.5,26.5 450.0,23.7 449.5,23.8 449.0,26.4 448.5,25.2 448.0,23.9 447.5,26.3 447.0,26.4 446.5,27.1 446.0,25.9 445.5,23.8 445.0,23.7 444.5,26.6 444.0,25.7 443.5,25.5 443.0,25.0 442.5,23.8 442.0,23.9 441.5,25.3 441.0,24.9 440.5,23.6 440.0,27.3 439.5,23.7 439.0,26.1 438.5,27.8 438.0,27.7 437.5,27.1 437.0,24.0 436.5,23.7 436.0,26.7 435.5,23.9 435.0,23.9 434.5,25.2 434.0,26.0 433.5,26.6 433.0,24.0 432.5,25.5 432.0,23.7 431.5,26.4 431.0,23.9 430.5,26.8 430.0,27.2 429.5,25.0 429.0,24.0 428.5,23.8 428.0,25.3 427.5,23.9 427.0,23.7 426.5,25.4 426.0,23.7 425.5,23.8 425.0,25.6 424.5,24.8 424.0,23.9 423.5,27.1 423.0,27.6 422.5,27.5 422.0,25.5 421.5,26.9 421.0,24.0 420.5,23.6 420.0,26.5 419.5,27.7 419.0,26.8 418.5,24.0 418.0,27.4 417.5,23.7 417.0,24.9 416.5,26.0 416.0,27.2 415.5,26.0 415.0,26.1 414.5,26.0 414.0,23.8 413.5,24.9 413.0,23.8 412.5,23.8 412.0,24.0 411.5,26.1 411.0,26.3 410.5,23.9 410.0,25.3 409.5,26.3 409.0,23.7 408.5,26.7 408.0,26.6 407.5,25.2 407.0,23.9 406.5,24.0 406.0,23.8 405.5,24.0 405.0,23.7 404.5,27.3 404.0,25.5 403.5,23.8 403.0,23.9 402.5,27.7 402.0,26.5 401.5,25.1 401.0,25.1 400.5,23.9 400.0,25.7 399.5,25.0 399.0,26.0 398.5,23.9 398.0,25.2 397.5,26.3 397.0,25.3 396.5,25.3 396.0,25.5 395.5,26.2 395.0,24.9 394.5,25.7 394.0,23.7 393.5,23.9 393.0,24.0 392.5,24.0 392.0,25.1 391.5,26.4 391.0,25.2 390.5,22.9"/>
<polygon points="390.5,22.3 391.0,21.9 391.5,21.5 392.0,21.5 392.5,21.2 393.0,21.2 393.5,21.3 394.0,21.5 394.5,21.3 395.0,21.5 395.5,21.5 396.0,21.2 396.5,21.3 397.0,21.4 397.5,21.3 398.0,21.3 398.5,21.3 399.0,21.4 399.5,21.5 400.0,21.2 400.5,21.3 401.0,21.3 401.5,21.5 402.0,21.3 402.5,21.4 403.0,21.3 403.5,21.4 404.0,21.5 404.5,21.2 405.0,21.5 405.5,21.2 406.0,21.4 406.5,21.2 407.0,21.3 407.5,21.4 408.0,21.3 408.5,21.4 409.0,21.5 409.5,21.2 410.0,21.3 410.5,21.3 411.0,21.3 411.5,21.2 412.0,21.2 412.5,21.4 413.0,21.4 413.5,21.4 414.0,21.4 414.5,21.2 415.0,21.5 415.5,21.5 416.0,21.2 416.5,21.3 417.0,21.3 417.5,21.5 418.0,21.4 418.5,21.2 419.0,21.3 419.5,21.6 420.0,21.3 420.5,21.6 421.0,21.2 421.5,21.3 422.0,21.4 422.5,21.5 423.0,21.6 423.5,21.4 424.0,21.3 424.5,21.4 425.0,21.5 425.5,21.4 426.0,21.5 426.5,21.2 427.0,21.5 427.5,21.3 428.0,21.5 428.5,21.4 429.0,21.2 429.5,21.4 430.0,21.5 430.5,21.5 431.0,21.3 431.5,21.5 432.0,21.5 432.5,21.5 433.0,21.2 433.5,21.3 434.0,21.5 434.5,21.5 435.0,21.3 435.5,21.3 436.0,21.2 436.5,21.5 437.0,21.2 437.5,21.3 438.0,21.3 438.5,21.3 439.0,21.4 439.5,21.5 440.0,21.5 440.5,21.6 441.0,21.4 441.5,21.5 442.0,21.3 442.5,21.4 443.0,21.4 443.5,21.4 444.0,21.5 444.5,21.4 445.0,21.5 445.5,21.4 446.0,21.5 446.5,21.5 447.0,21.2 447.5,21.5 448.0,21.3 448.5,21.4 449.0,21.2 449.5,21.4 450.0,21.5 450.5,21.3 451.0,21.3 451.5,21.2 452.0,21.4 452.5,21.3 453.0,21.4 453.5,21.5 454.0,21.2 454.5,21.3 455.0,21.5 455.5,21.2 456.0,21.2 456.5,21.3 457.0,21.4 457.5,21.4 458.0,21.4 458.5,21.4 459.0,21.4 459.5,21.3 460.0,21.5 460.5,21.5 461.0,21.5 461.5,21.3 462.0,21.6 462.5,21.3 463.0,21.5 463.5,21.2 464.0,21.5 464.5,21.4 465.0,21.4 465.5,21.4 466.0,21.4 466.5,21.4 467.0,21.5 467.5,21.3 468.0,21.5 468.5,21.4 469.0,21.2 469.5,21.4 470.0,21.5 470.5,21.2 471.0,21.2 471.5,21.4 472.0,21.2 472.5,21.3 473.0,21.5 473.5,21.4 474.0,21.2 474.5,21.4 475.0,21.2 475.5,21.4 476.0,21.2 476.5,21.4 477.0,21.2 477.5,21.2 478.0,21.5 478.5,21.3 479.0,21.3 479.5,21.5 480.0,21.4 480.5,21.5 481.0,21.4 481.5,21.5 482.0,21.4 482.5,21.4 483.0,21.4 483.5,21.4 484.0,21.3 484.5,21.5 485.0,21.4 485.5,21.2 486.0,21.4 486.5,21.3 487.0,21.2 487.5,21.4 488.0,21.3 488.5,21.4 489.0,21.4 489.5,21.5 490.0,21.5 490.5,21.5 491.0,21.5 491.5,21.2 492.0,21.5 492.5,21.4 493.0,21.6 493.5,21.2 494.0,21.6 494.5,21.4 495.0,21.4 495.5,21.5 496.0,21.3 496.5,21.3 497.0,21.4 497.5,21.5 498.0,21.2 498.5,21.2 499.0,21.5 499.5,21.5 500.0,21.3 500.5,21.4 501.0,21.5 501.5,21.3 502.0,21.5 502.5,21.3 503.0,21.4 503.5,21.6 504.0,21.2 504.5,21.5 505.0,21.4 505.5,21.4 506.0,21.2 506.5,21.6 507.0,21.5 507.5,21.2 508.0,21.4 508.5,21.3 509.0,21.3 509.5,21.5 510.0,21.4 510.5,21.4 511.0,21.2 511.5,21.3 512.0,21.4 512.5,21.5 513.0,21.4 513.5,21.4 514.0,21.4 514.5,21.3 515.0,21.2 515.5,21.4 516.0,21.2 516.5,21.5 517.0,21.5 517.5,21.2 518.0,21.2 518.5,21.6 519.0,21.6 519.5,21.3 520.0,21.6 520.5,22.2 520.5,23.0 520.0,23.6 519.5,23.9 519.0,23.6 518.5,23.6 518.0,24.0 517.5,24.0 517.0,23.7 516.5,23.7 516.0,24.0 515.5,23.8 515.0,24.0 514.5,23.9 514.0,23.8 513.5,23.8 513.0,23.8 512.5,23.7 512.0,23.8 511.5,23.9 511.0,24.0 510.5,23.8 510.0,23.8 509.5,23.7 509.0,23.9 508.5,23.9 508.0,23.8 507.5,24.0 507.0,23.7 506.5,23.6 506.0,24.0 505.5,23.8 505.0,23.8 504.5,23.7 504.0,24.0 503.5,23.6 503.0,23.8 502.5,23.9 502.0,23.7 501.5,23.9 501.0,23.7 500.5,23.8 500.0,23.9 499.5,23.7 499.0,23.7 498.5,24.0 498.0,24.0 497.5,23.7 497.0,23.8 496.5,23.9 496.0,23.9 495.5,23.7 495.0,23.8 494.5,23.8 494.0,23.6 493.5,24.0 493.0,23.6 492.5,23.8 492.0,23.7 491.5,24.0 491.0,23.7 490.5,23.7 490.0,23.7 489.5,23.7 489.0,23.8 488.5,23.8 488.0,23.9 487.5,23.8 487.0,24.0 486.5,23.9 486.0,23.8 485.5,24.0 485.0,23.8 484.5,23.7 484.0,23.9 483.5,23.8 483.0,23.8 482.5,23.8 482.0,23.8 481.5,23.7 481.0,23.8 480.5,23.7 480.0,23.8 479.5,23.7 479.0,23.9 478.5,23.9 478.0,23.7 477.5,24.0 477.0,24.0 476.5,23.8 476.0,24.0 475.5,23.8 475.0,24.0 474.5,23.8 474.0,24.0 473.5,23.8 473.0,23.7 472.5,23.9 472.0,24.0 471.5,23.8 471.0,24.0 470.5,24.0 470.0,23.7 469.5,23.8 469.0,24.0 468.5,23.8 468.0,23.7 467.5,23.9 467.0,23.7 466.5,23.8 466.0,23.8 465.5,23.8 465.0,23.8 464.5,23.8 464.0,23.7 463.5,24.0 463.0,23.7 462.5,23.9 462.0,23.6 461.5,23.9 461.0,23.7 460.5,23.7 460.0,23.7 459.5,23.9 459.0,23.8 458.5,23.8 458.0,23.8 457.5,23.8 457.0,23.8 456.5,23.9 456.0,24.0 455.5,24.0 455.0,23.7 454.5,23.9 454.0,24.0 453.5,23.7 453.0,23.8 452.5,23.9 452.0,23.8 451.5,24.0 451.0,23.9 450.5,23.9 450.0,23.7 449.5,23.8 449.0,24.0 448.5,23.8 448.0,23.9 447.5,23.7 447.0,24.0 446.5,23.7 446.0,23.7 445.5,23.8 445.0,23.7 444.5,23.8 444.0,23.7 443.5,23.8 443.0,23.8 442.5,23.8 442.0,23.9 441.5,23.7 441.0,23.8 440.5,23.6 440.0,23.7 439.5,23.7 439.0,23.8 438.5,23.9 438.0,23.9 437.5,23.9 437.0,24.0 436.5,23.7 436.0,24.0 435.5,23.9 435.0,23.9 434.5,23.7 434.0,23.7 433.5,23.9 433.0,24.0 432.5,23.7 432.0,23.7 431.5,23.7 431.0,23.9 430.5,23.7 430.0,23.7 429.5,23.8 429.0,24.0 428.5,23.8 428.0,23.7 427.5,23.9 427.0,23.7 426.5,24.0 426.0,23.7 425.5,23.8 425.0,23.7 424.5,23.8 424.0,23.9 423.5,23.8 423.0,23.6 422.5,23.7 422.0,23.8 421.5,23.9 421.0,24.0 420.5,23.6 420.0,23.9 419.5,23.6 419.0,23.9 418.5,24.0 418.0,23.8 417.5,23.7 417.0,23.9 416.5,23.9 416.0,24.0 415.5,23.7 415.0,23.7 414.5,24.0 414.0,23.8 413.5,23.8 413.0,23.8 412.5,23.8 412.0,24.0 411.5,24.0 411.0,23.9 410.5,23.9 410.0,23.9 409.5,24.0 409.0,23.7 408.5,23.8 408.0,23.9 407.5,23.8 407.0,23.9 406.5,24.0 406.0,23.8 405.5,24.0 405.0,23.7 404.5,24.0 404.0,23.7 403.5,23.8 403.0,23.9 402.5,23.8 402.0,23.9 401.5,23.7 401.0,23.9 400.5,23.9 400.0,24.0 399.5,23.7 399.0,23.8 398.5,23.9 398.0,23.9 397.5,23.9 397.0,23.8 396.5,23.9 396.0,24.0 395.5,23.7 395.0,23.7 394.5,23.9 394.0,23.7 393.5,23.9 393.0,24.0 392.5,24.0 392.0,23.7 391.5,23.7 391.0,23.3 390.5,22.9"/>
<polygon points="520.5,22.5 521.0,22.3 521.5,22.2 522.0,22.3 522.5,22.2 523.0,22.2 523.5,22.2 524.0,22.4 524.5,22.5 524.5,22.7 524.0,22.8 523.5,23.0 523.0,23.0 522.5,22.9 522.0,22.9 521.5,23.0 521.0,22.9 520.5,22.7"/>
<polygon points="524.5,22.4 525.0,21.6 525.5,21.0 526.0,20.6 526.5,20.4 527.0,20.4 527.5,20.6 528.0,21.0 528.5,21.6 529.0,22.4 529.0,22.8 528.5,23.6 528.0,24.2 527.5,24.6 527.0,24.8 526.5,24.8 526.0,24.6 525.5,24.2 525.0,23.6 524.5,22.8"/></svg><span>DRUMS</span></div>

<!-- playhead -->
<div class="abs" style="left:78.8px;top:124px;width:1.75px;height:275px;background:#fff"></div>
<svg class="abs" style="left:76.1px;top:118px" width="7.4" height="9.6" viewBox="0 0 7.4 9.6"><path d="M0.7 0 H6.7 Q7.4 0 7.4 0.7 V5.8 L3.7 9.5 L0 5.8 V0.7 Q0 0 0.7 0 Z" fill="#fff"/></svg>

<!-- bottom toolbar -->
<div class="abs" style="left:171px;top:399.6px;width:298px;height:45.8px;background:#292a31;border-radius:5px">
<div class="btn" style="left:10px;width:87px"><svg class="abs" style="left:0;top:0" width="30" height="26" viewBox="0 0 30 26"><path d="M10.2 11.8 L12.2 14.3 L14 11.2 L15.8 15.1 L17.5 12 L19.5 14.1" fill="none" stroke="#17181c" stroke-width="1.4" stroke-linejoin="round" stroke-linecap="round"/></svg><span style="position:absolute;left:25.8px">View original</span></div>
<div class="btn" style="left:106px;width:87.5px"><svg class="abs" style="left:0;top:0" width="30" height="26" viewBox="0 0 30 26"><ellipse cx="13" cy="16" rx="1.7" ry="1.5" fill="none" stroke="#17181c" stroke-width="1.2"/><ellipse cx="18.1" cy="16" rx="1.7" ry="1.5" fill="none" stroke="#17181c" stroke-width="1.2"/><path d="M14.3 10.8 L16.9 14.8 M18.3 8.9 L14.3 14.8" fill="none" stroke="#17181c" stroke-width="1.3"/><circle cx="13" cy="9.6" r="1.05" fill="#17181c"/></svg><span style="position:absolute;left:26.3px">Adapt length</span></div>
<div class="btn" style="left:202px;width:86.5px"><svg class="abs" style="left:0;top:0" width="30" height="26" viewBox="0 0 30 26"><path d="M16.6 15.6 V8.8 H19.9 V11.2 H16.6" fill="none" stroke="#17181c" stroke-width="1.2"/><circle cx="14.9" cy="15.8" r="1.7" fill="none" stroke="#17181c" stroke-width="1.2"/><path d="M13 8.5 L14.1 9.8 L13 11.1 L11.9 9.8 Z" fill="#17181c"/><rect x="19.2" y="14.8" width="1.7" height="1.7" fill="#17181c"/></svg><span style="position:absolute;left:27px">Adapt music</span></div>
</div>

<!-- right column -->
<div class="abs" style="left:641px;top:81px;width:151px;height:26px;background:#fff"></div>
<svg class="abs" style="left:688.6px;top:88.9px" width="11" height="11" viewBox="0 0 11 11"><path d="M5.5 0.7 V10.3 M0.7 5.5 H10.3" stroke="#17181c" stroke-width="1.35"/></svg>
<div class="abs" style="left:704.5px;top:88.4px;font-size:9.1px;-webkit-text-stroke:0.55px #17181c;line-height:12px;color:#17181c;white-space:nowrap">New track</div>
<div class="abs panel" style="left:641px;top:116.5px;width:151px;height:293.5px"></div>
<div class="abs" style="left:650.5px;top:127.2px;font-size:10.4px;-webkit-text-stroke:0.4px #d8d9dc;line-height:14.6px;color:#d8d9dc;white-space:nowrap">Your adaptations will appear<br>here.</div>
<div class="abs" style="left:650.5px;top:164.1px;font-size:9px;line-height:14.2px;color:#b9babe;white-space:nowrap;-webkit-text-stroke:0.15px #b9babe">Currently, adaptations are not<br>saved, so download any you<br>want to keep.</div>
<div class="abs" style="left:650.5px;top:221.3px;font-size:9px;line-height:14px;color:#b9babe;white-space:nowrap;-webkit-text-stroke:0.15px #b9babe">Adaptations are always applied<br>to the original track.</div>
<div class="abs" style="left:641px;top:420px;width:151px;height:26px;background:#323339"></div>
<svg class="abs" style="left:689.5px;top:427px" width="11" height="11" viewBox="0 0 11 11"><path d="M0.7 0.8 H10.2 V7.4 H8 V9.7 L5.6 7.4 H0.7 Z" fill="none" stroke="#fff" stroke-width="1.35" stroke-linejoin="round"/></svg>
<div class="abs" style="left:705.5px;top:427px;font-size:8.8px;-webkit-text-stroke:0.5px #fff;line-height:12px;color:#fff;white-space:nowrap">Feedback</div>
</div></body></html>
